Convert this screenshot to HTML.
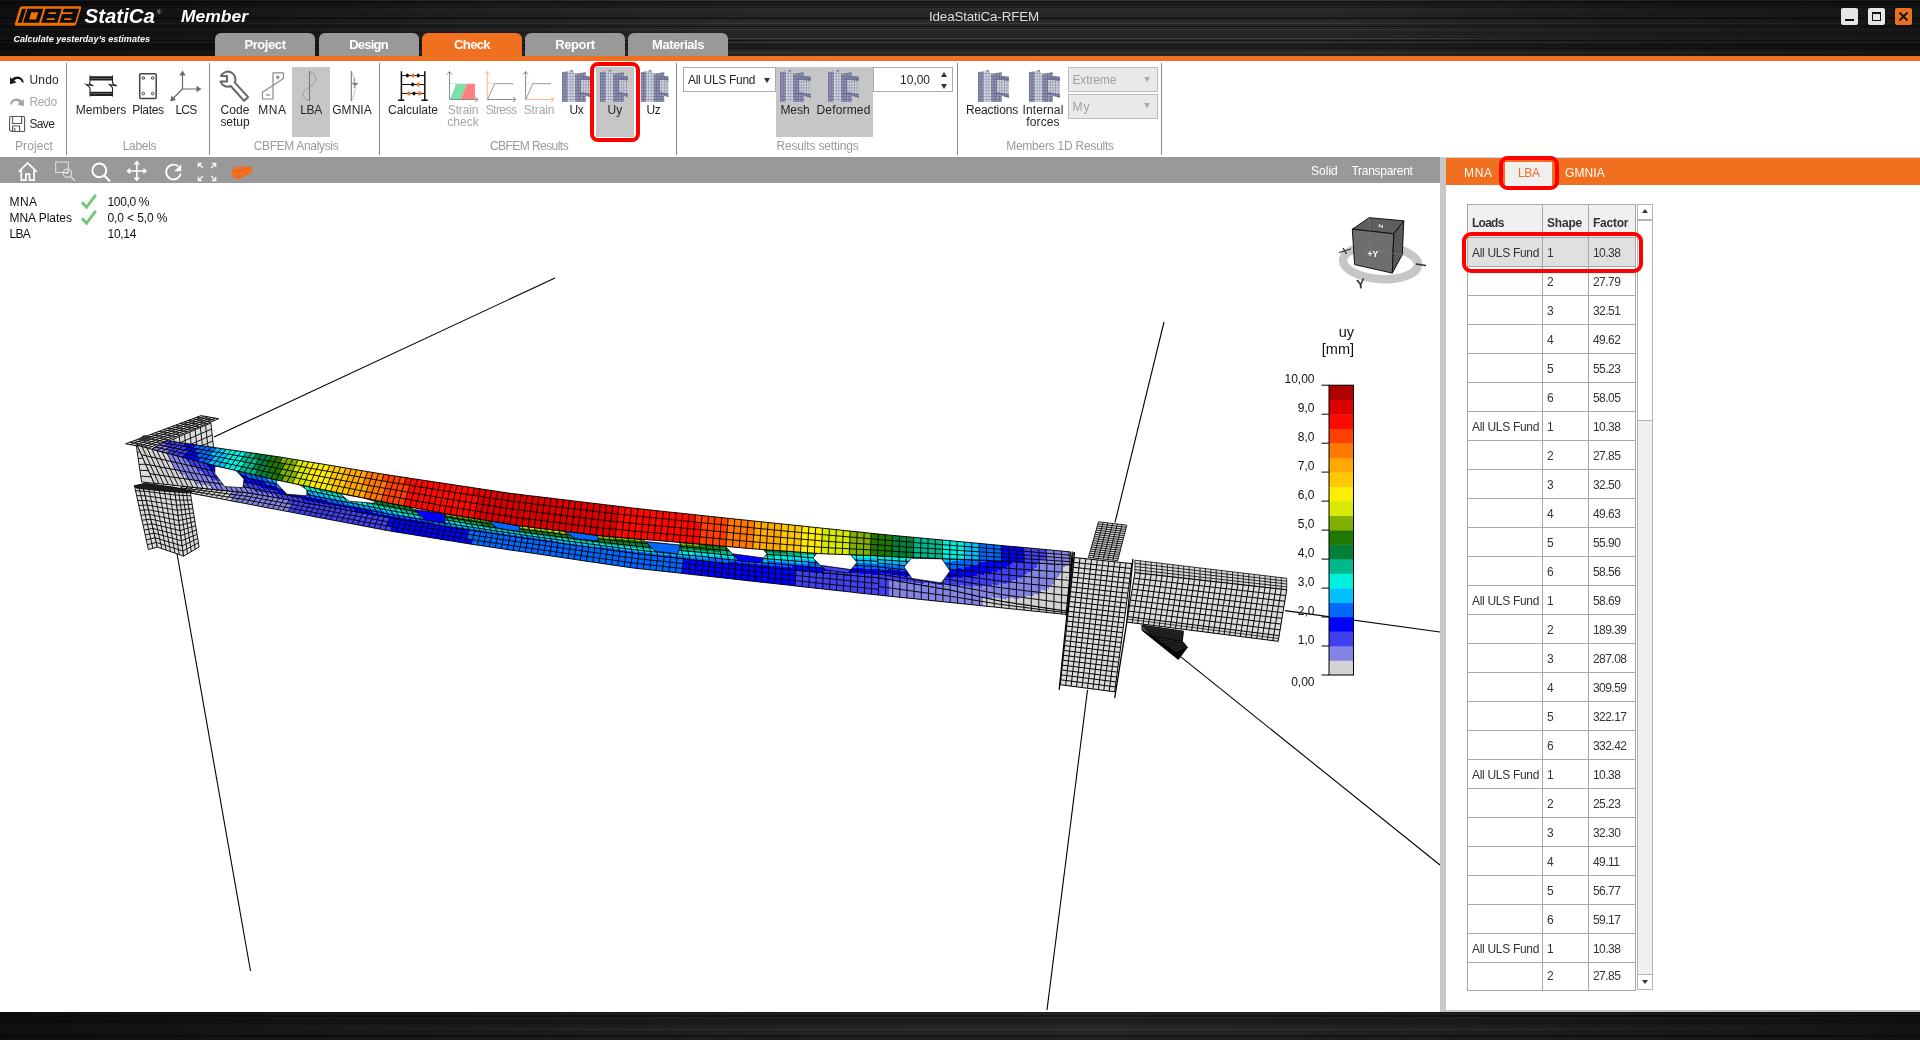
<!DOCTYPE html>
<html lang="en">
<head>
<meta charset="utf-8">
<title>IdeaStatiCa-RFEM</title>
<style>
*{box-sizing:border-box;margin:0;padding:0}
html,body{width:1920px;height:1040px;overflow:hidden;background:#fff}
body{position:relative;font-family:"Liberation Sans",sans-serif;font-size:12px;color:#262626;will-change:transform}
.abs{position:absolute}
#hdr{left:0;top:0;width:1920px;height:56px;background:#1c1c1c;overflow:hidden}
#hdr .tex{left:0;top:0;width:1920px;height:56px;
 background:
  linear-gradient(90deg,rgba(0,0,0,.62) 0,rgba(0,0,0,.5) 200px,rgba(0,0,0,.22) 480px,rgba(0,0,0,0) 800px,rgba(0,0,0,0) 1300px,rgba(0,0,0,.3) 1600px,rgba(0,0,0,.5) 1920px),
  linear-gradient(180deg,#313131 0px,#313131 1px,#1c1c1c 1px,#1c1c1c 2px,#101010 2px,#101010 3px,#272727 3px,#272727 4px,#171717 4px,#171717 5px,#1f1f1f 5px,#1f1f1f 6px,#262626 6px,#262626 7px,#1b1b1b 7px,#1b1b1b 8px,#2d2d2d 8px,#2d2d2d 9px,#2b2b2b 9px,#2b2b2b 10px,#272727 10px,#272727 11px,#2c2c2c 11px,#2c2c2c 12px,#282828 12px,#282828 13px,#262626 13px,#262626 14px,#2a2a2a 14px,#2a2a2a 15px,#262626 15px,#262626 16px,#292929 16px,#292929 17px,#1d1d1d 17px,#1d1d1d 18px,#121212 18px,#121212 19px,#282828 19px,#282828 20px,#2c2c2c 20px,#2c2c2c 21px,#262626 21px,#262626 22px,#2b2b2b 22px,#2b2b2b 23px,#383838 23px,#383838 24px,#272727 24px,#272727 25px,#202020 25px,#202020 26px,#1b1b1b 26px,#1b1b1b 27px,#2d2d2d 27px,#2d2d2d 28px,#1d1d1d 28px,#1d1d1d 29px,#3c3c3c 29px,#3c3c3c 30px,#252525 30px,#252525 31px,#2c2c2c 31px,#2c2c2c 32px,#222222 32px,#222222 33px,#2e2e2e 33px,#2e2e2e 34px,#1f1f1f 34px,#1f1f1f 35px,#303030 35px,#303030 36px,#222222 36px,#222222 37px,#282828 37px,#282828 38px,#383838 38px,#383838 39px,#2a2a2a 39px,#2a2a2a 40px,#161616 40px,#161616 41px,#2b2b2b 41px,#2b2b2b 42px,#2f2f2f 42px,#2f2f2f 43px,#2c2c2c 43px,#2c2c2c 44px,#111111 44px,#111111 45px,#202020 45px,#202020 46px,#202020 46px,#202020 47px,#1d1d1d 47px,#1d1d1d 48px,#181818 48px,#181818 49px,#1d1d1d 49px,#1d1d1d 50px,#2f2f2f 50px,#2f2f2f 51px,#222222 51px,#222222 52px,#353535 52px,#353535 53px,#2e2e2e 53px,#2e2e2e 54px,#202020 54px,#202020 55px,#2a2a2a 55px,#2a2a2a 56px)}
#oline{left:0;top:56px;width:1920px;height:5px;background:#f07020}
#ftr{left:0;top:1012px;width:1920px;height:28px;background:#161616;overflow:hidden}
#ftr .tex{left:0;top:0;width:1920px;height:28px;
 background:
  linear-gradient(90deg,rgba(0,0,0,.6) 0,rgba(0,0,0,.4) 300px,rgba(0,0,0,.1) 800px,rgba(0,0,0,0) 1100px,rgba(0,0,0,.2) 1500px,rgba(0,0,0,.5) 1920px),
  linear-gradient(180deg,#1b1b1b 0px,#1b1b1b 1px,#272727 1px,#272727 2px,#242424 2px,#242424 3px,#141414 3px,#141414 4px,#161616 4px,#161616 5px,#222222 5px,#222222 6px,#262626 6px,#262626 7px,#1c1c1c 7px,#1c1c1c 8px,#191919 8px,#191919 9px,#262626 9px,#262626 10px,#161616 10px,#161616 11px,#212121 11px,#212121 12px,#232323 12px,#232323 13px,#242424 13px,#242424 14px,#272727 14px,#272727 15px,#272727 15px,#272727 16px,#262626 16px,#262626 17px,#323232 17px,#323232 18px,#272727 18px,#272727 19px,#232323 19px,#232323 20px,#272727 20px,#272727 21px,#262626 21px,#262626 22px,#242424 22px,#242424 23px,#1b1b1b 23px,#1b1b1b 24px,#0f0f0f 24px,#0f0f0f 25px,#262626 25px,#262626 26px,#202020 26px,#202020 27px,#262626 27px,#262626 28px)}
.tab{top:33px;width:100px;height:23px;background:#999;border-radius:6px 6px 0 0;color:#fff;font-weight:bold;font-size:13px;text-align:center;line-height:23px}
.tab.on{background:#f07020}
.wbtn{top:8px;width:17px;height:17px;background:#e6e6e6;border-radius:2px}
#title{left:860px;top:7.6px;width:248px;text-align:center;font-size:13.4px;color:#dcdcdc;line-height:18px;letter-spacing:-.15px}
.sep{top:63px;width:1px;height:92px;background:#8a8a8a}
.lbl{text-align:center;line-height:12px;white-space:nowrap;transform:translateX(-50%)}
.glbl{top:139px;color:#9a9a9a;text-align:center;line-height:14px;white-space:nowrap;transform:translateX(-50%)}
.dis{color:#a6a6a6}
.hl{background:#c6c6c6}
.combo{height:25px;border:1px solid #ababab;background:#fff;line-height:24px;padding-left:4px;white-space:nowrap}
.combo.d{background:#e9e9e9;color:#a0a0a0;border-color:#bdbdbd}
.arr{width:0;height:0;border-left:3.5px solid transparent;border-right:3.5px solid transparent;border-top:5px solid #333}
#tbar{left:0;top:157px;width:1440px;height:26px;background:#999}
#split{left:1440px;top:157px;width:6px;height:855px;background:#c8c8c8}
#rtab{left:1446px;top:157px;width:474px;height:28px;background:#f07020;border-top:1px solid #cfd6dc}
#botline{left:1440px;top:1010px;width:480px;height:2px;background:#c8c8c8}
.red{border:4px solid #f00;border-radius:8px}
table{border-collapse:collapse}
#grid td{border:1px solid #a8a8a8;height:29px;font-size:12px;padding:1px 0 0 4px;color:#333;white-space:nowrap;letter-spacing:-.55px}
#grid td:first-child{letter-spacing:-.3px}
#grid tr.last td{height:27px;padding-top:0;vertical-align:top;line-height:27px}
#grid tr.h td{background:#f0f0f0;font-weight:bold;height:29px;padding-top:7px;color:#333;letter-spacing:0}
#grid tr.sp td{height:4px;padding:0;background:#f0f0f0;border-top:none;border-bottom:none}
#grid tr.sel td{background:#e0e0e0}
.info{font-size:12px;line-height:16px;white-space:nowrap;color:#111}
.leg{font-size:12px;color:#111;text-align:right;white-space:nowrap;line-height:14px}
</style>
</head>
<body>
<!--HEADER-->
<div id="hdr" class="abs"><div class="tex abs"></div></div>
<div id="oline" class="abs"></div>
<svg class="abs" style="left:0;top:0" width="260" height="56" viewBox="0 0 260 56">
 <g transform="translate(20.2,6.2) skewX(-17)">
  <rect x="0" y="0" width="61.5" height="19.5" rx="1.8" fill="#f07000"/>
  <g fill="#0b0b0b">
   <rect x="2.6" y="2.5" width="4" height="14.1" rx=".6"/>
   <path d="M8 2.5h15.9v14.1h-15.9z M12.9 6v7.3h7v-7.3z" fill-rule="evenodd"/>
   <path d="M26 2.5h16.3v14.1h-16.3z M30.5 6v1.9h7.5v-1.9z M30.5 12v1.7h8v-1.7z" fill-rule="evenodd"/>
   <path d="M44.3 2.5h15.5v14.1h-15.5v-8.7h10.2v-1.9h-10.2z M48 13.7h7v-1.7h-7z" fill-rule="evenodd"/>
  </g>
 </g>
 <text x="84.5" y="23.3" font-family="Liberation Sans, sans-serif" font-size="20.5" font-weight="bold" font-style="italic" fill="#fff" textLength="70.5" lengthAdjust="spacingAndGlyphs">StatiCa</text>
 <text x="157" y="13.5" font-family="Liberation Sans, sans-serif" font-size="6" fill="#ccc">®</text>
 <text x="181" y="22" font-family="Liberation Sans, sans-serif" font-size="17" font-weight="bold" font-style="italic" fill="#fff" textLength="67" lengthAdjust="spacingAndGlyphs">Member</text>
 <text x="13.5" y="42.3" font-family="Liberation Sans, sans-serif" font-size="9.4" font-weight="bold" font-style="italic" fill="#fff" textLength="136.5" lengthAdjust="spacingAndGlyphs">Calculate yesterday’s estimates</text>
</svg>
<div id="title" class="abs">IdeaStatiCa-RFEM</div>
<div class="abs wbtn" style="left:1841px"><div class="abs" style="left:4px;top:11px;width:9px;height:2px;background:#111"></div></div>
<div class="abs wbtn" style="left:1868px"><div class="abs" style="left:4px;top:4px;width:9px;height:9px;border:1px solid #111;border-top-width:2px"></div></div>
<div class="abs wbtn" style="left:1895px;background:#e8701f"><svg class="abs" style="left:0;top:0" width="17" height="17"><path d="M4.5 4.5l8 8M12.5 4.5l-8 8" stroke="#111" stroke-width="1.8"/></svg></div>

<div class="abs tab" style="letter-spacing:-0.41px;left:215px">Project</div>
<div class="abs tab" style="letter-spacing:-0.79px;left:318.5px">Design</div>
<div class="abs tab on" style="letter-spacing:-0.65px;left:422px">Check</div>
<div class="abs tab" style="letter-spacing:-0.37px;left:525px">Report</div>
<div class="abs tab" style="letter-spacing:-0.51px;left:628px">Materials</div>

<div class="abs hl" style="left:292px;top:67px;width:38px;height:70px"></div>
<div class="abs hl" style="left:596px;top:67px;width:38px;height:70px"></div>
<div class="abs hl" style="left:776px;top:67px;width:97px;height:70px"></div>
<div class="abs sep" style="left:66px"></div>
<div class="abs sep" style="left:209px"></div>
<div class="abs sep" style="left:379px"></div>
<div class="abs sep" style="left:676px"></div>
<div class="abs sep" style="left:957px"></div>
<div class="abs sep" style="left:1161px"></div>
<svg class="abs" style="left:0;top:61px" width="1170" height="96" viewBox="0 61 1170 96">
 <defs>
  <pattern id="gp" width="2.6" height="2.9" patternUnits="userSpaceOnUse"><path d="M0 0H2.6M0 0V2.9" stroke="#3c3e5c" stroke-width=".55" fill="none"/></pattern>
  <g id="joint">
   <polygon points="0,2.3 5.7,1.3 5.7,32 0,32" fill="#9093b3"/>
   <polygon points="5.7,1.3 8,0.7 10.7,0 10.7,2 13.3,3.5 13.3,32 5.7,32" fill="#d6d9e4"/>
   <polygon points="8,0.7 10.700,0 10.700,2.200" fill="#8487a8"/>
   <polygon points="13.3,3.9 19.5,3 23.700,2.100 23.700,6 19.500,8.500 19.500,32 13.300,32" fill="#8d90b0"/>
   <polygon points="19.5,25.5 23.700,25.800 23.700,32 19.500,32" fill="#8d90b0"/>
   <polygon points="14.3,8.6 24.200,6 31,6.800 31,11.200 19.500,9.900" fill="#8083a5"/>
   <polygon points="19.5,9.9 31,11.200 31,23.900 19.500,22.100" fill="#d4d7e2"/>
   <polygon points="14.3,23.7 19.500,22.100 31,23.900 31,27.900 23.700,25.800 19.500,25.500" fill="#8386a8"/>
   <rect x="0" y="0" width="31" height="32" fill="url(#gp)" clip-path="url(#jc)"/>
  </g>
  <clipPath id="jc"><path d="M0 2.3L5.7 1.3L10.7 0L13.3 3.500L23.700 2.100V6L31 6.800V27.900L23.700 25.800V32H0z"/></clipPath>
  <clipPath id="jc28"><rect x="0" y="0" width="28" height="32"/></clipPath>
 </defs>
 <!-- undo -->
 <path d="M10 84.2V77.2l2 1.6c2.3-2.2 5.5-3 8.3-1.6 2 1 3.3 3 3.5 5.4h-1.8c-.4-1.7-1.300-2.800-2.900-3.300-1.700-.6-3.500-.1-4.900 1.200l2.300 1.900z" fill="#1a1a1a"/>
 <!-- redo -->
 <path d="M23.8 106.200V99.200l-2 1.600c-2.300-2.200-5.500-3-8.300-1.600-2 1-3.300 3-3.500 5.400h1.800c.4-1.700 1.300-2.800 2.900-3.300 1.700-.6 3.500-.1 4.900 1.200l-2.300 1.900z" fill="#a4a4a4"/>
 <!-- save -->
 <g fill="none" stroke="#555" stroke-width="1.1">
  <path d="M9.600 117.500a1 1 0 0 1 1-1h13a1 1 0 0 1 1 1v13a1 1 0 0 1-1 1H11.600l-2-1.500z"/>
  <path d="M12.600 116.500v7h9v-7M12.600 131.500v-5.500h7v5.500M14.800 128v3.300"/>
 </g>
 <!-- members -->
 <g fill="none" stroke="#222">
  <path d="M90 77.3h22.5M90 79.5h22.5M90 92.8h22.5M90 95h22.5" stroke-width="1.9"/>
  <path d="M90 75.6v6l-.6 2.400 4 1.700-7.400-1.300 4 3.300v8.800M112.500 75.600v6l.6 2.400 3.700 1.900-7.400-1.400 3.100 3.200v8.800" stroke-width="1.100"/>
 </g>
 <!-- plates -->
 <g fill="none" stroke="#444">
  <rect x="139.700" y="73.700" width="16.500" height="24.800" rx="1" stroke-width="1.500"/>
  <g stroke-width="1"><circle cx="143.300" cy="78" r="1.300"/><circle cx="152.700" cy="78" r="1.300"/><circle cx="143.300" cy="93.600" r="1.300"/><circle cx="152.700" cy="93.600" r="1.300"/></g>
 </g>
 <!-- LCS -->
 <g stroke="#6a6a6a" stroke-width="1.200" fill="#6a6a6a">
  <path d="M182.500 89V74M182.500 89H197M182.500 89L173 98.500" fill="none"/>
  <path d="M182.500 70.500l3.200 5h-6.400zM201.500 89l-5 3.200v-6.400zM170.200 101.400l1.300-5.800 4.500 4.500z" stroke="none"/>
 </g>
 <!-- wrench -->
 <g fill="none" stroke="#666" stroke-width="2" stroke-linejoin="round">
  <path d="M221 76H227V81.5H220.500A7.500 7.500 0 0 0 230.700 86L244.100 100.800L248.100 97.200L234.700 82.400A7.500 7.500 0 1 0 221 76Z"/>
 </g>
 <!-- MNA -->
 <g fill="none" stroke="#8a8a8a" stroke-width="1.200" stroke-linejoin="round">
  <path d="M273 72.800h10.500v5.800l-21 13.600v6.800h10.500z"/><circle cx="277.800" cy="77.200" r="1.100" fill="#8a8a8a"/><path d="M266 95h4"/>
 </g>
 <!-- LBA -->
 <path d="M309.500 71.200V101" stroke="#777" stroke-width="1.100" fill="none"/>
 <path d="M309.500 71.200c4 2.500 6.500 5 6.500 8s-3 5.500-6.500 7.800-6.500 5-6.500 7.500 2.500 4.700 6.500 6.500" stroke="#888" stroke-width=".7" fill="none"/>
 <!-- GMNIA -->
 <path d="M351.300 71.200V101" stroke="#777" stroke-width="1.100" fill="none"/>
 <path d="M351.300 71.200c5.200 9 5.200 21 0 29.800" stroke="#888" stroke-width=".7" fill="none" stroke-dasharray="1.500 .8"/>
 <path d="M354.300 78v10M352.300 83.300l5.600.2-2.800 1.800z" stroke="#777" stroke-width=".8" fill="#777"/>
 <!-- calculate -->
 <g stroke="#111" fill="none">
  <path d="M401.400 71.200V100M424.800 71.200V100" stroke-width="1.500"/>
  <path d="M398 100.300h6.300M421.500 100.300h6.300" stroke-width="1.600"/>
  <path d="M401.400 75.600h23.400M401.400 84.500h23.400M401.400 93.400h23.400" stroke-width="1"/>
 </g>
 <g fill="#111"><ellipse cx="407.400" cy="75.600" rx="1.500" ry="2"/><ellipse cx="418.200" cy="75.600" rx="1.500" ry="2"/><ellipse cx="412.600" cy="84.500" rx="1.500" ry="2"/><ellipse cx="414" cy="93.400" rx="1.500" ry="2"/></g>
 <g fill="#f07020"><ellipse cx="413" cy="75.600" rx="1.500" ry="2.200"/><ellipse cx="418.200" cy="84.500" rx="1.500" ry="2.200"/><ellipse cx="408.800" cy="93.400" rx="1.500" ry="2.200"/><ellipse cx="419.400" cy="93.400" rx="1.500" ry="2.200"/></g>
 <!-- strain check -->
 <polygon points="450,99 456.200,83.700 467,83.700 460.900,99" fill="#7ce0aa"/>
 <polygon points="460.900,99 467,83.700 475,83.700 475,99" fill="#ff8080"/>
 <g stroke="#8c8c8c" stroke-width="1" fill="none">
  <path d="M449.500 99.500V71.500M447 74.500l2.500-3 2.500 3M449.500 99.500H478M475 97l3 2.500-3 2.500"/>
  <path d="M450 83.700h6" stroke-dasharray="1 1.500" stroke-width=".6"/>
 </g>
 <!-- stress -->
 <g stroke-width="1" fill="none">
  <path d="M487.300 99.500V71.500M484.800 74.500l2.500-3 2.500 3" stroke="#ffb58a"/>
  <path d="M487.300 99.500H516M513 97l3 2.500-3 2.500" stroke="#8c8c8c"/>
  <path d="M487.800 99l6.800-15.300h18.800" stroke="#8c8c8c" stroke-width=".9"/>
  <path d="M488 83.700h6" stroke="#aaa" stroke-dasharray="1 1.500" stroke-width=".6"/>
 </g>
 <!-- strain -->
 <g stroke-width="1" fill="none">
  <path d="M525.600 99.500V71.500M523.100 74.500l2.500-3 2.500 3" stroke="#8c8c8c"/>
  <path d="M525.600 99.500H554M551 97l3 2.500-3 2.500" stroke="#ffb58a"/>
  <path d="M526.100 99l6.600-15.300h18.200" stroke="#8c8c8c" stroke-width=".9"/>
  <path d="M526.300 83.700h6" stroke="#aaa" stroke-dasharray="1 1.500" stroke-width=".6"/>
 </g>
 <g transform="translate(562,70)" clip-path="url(#jc28)"><use href="#joint"/></g>
 <g transform="translate(600,70)" clip-path="url(#jc28)"><use href="#joint"/></g>
 <g transform="translate(640.5,70)" clip-path="url(#jc28)"><use href="#joint"/></g>
 <use href="#joint" x="780" y="70"/>
 <use href="#joint" x="828" y="70"/>
 <use href="#joint" x="978" y="70"/>
 <use href="#joint" x="1029" y="70"/>
</svg>
<div class="abs" style="letter-spacing:0.19px;left:29.500px;top:73px;line-height:14px">Undo</div>
<div class="abs dis" style="letter-spacing:-0.37px;left:29.500px;top:95px;line-height:14px">Redo</div>
<div class="abs" style="letter-spacing:-0.66px;left:29.500px;top:117px;line-height:14px">Save</div>
<div class="abs lbl" style="letter-spacing:0.10px;left:101px;top:104px">Members</div>
<div class="abs lbl" style="letter-spacing:-0.28px;left:148px;top:104px">Plates</div>
<div class="abs lbl" style="letter-spacing:-0.71px;left:186px;top:104px">LCS</div>
<div class="abs lbl" style="left:235px;top:104px"><span style="letter-spacing:0.13px;display:block">Code</span><span style="letter-spacing:-0.03px;display:block">setup</span></div>
<div class="abs lbl" style="letter-spacing:0.59px;left:272.500px;top:104px">MNA</div>
<div class="abs lbl" style="letter-spacing:-0.33px;left:311px;top:104px">LBA</div>
<div class="abs lbl" style="letter-spacing:0.07px;left:352px;top:104px">GMNIA</div>
<div class="abs lbl" style="letter-spacing:-0.01px;left:413px;top:104px">Calculate</div>
<div class="abs lbl dis" style="left:463px;top:104px"><span style="letter-spacing:-0.15px;display:block">Strain</span><span style="letter-spacing:0.07px;display:block">check</span></div>
<div class="abs lbl dis" style="letter-spacing:-0.55px;left:501px;top:104px">Stress</div>
<div class="abs lbl dis" style="letter-spacing:-0.11px;left:539px;top:104px">Strain</div>
<div class="abs lbl" style="letter-spacing:-0.24px;left:576.500px;top:104px">Ux</div>
<div class="abs lbl" style="letter-spacing:0.26px;left:615px;top:104px">Uy</div>
<div class="abs lbl" style="letter-spacing:-0.24px;left:653.500px;top:104px">Uz</div>
<div class="abs lbl" style="letter-spacing:-0.04px;left:795px;top:104px">Mesh</div>
<div class="abs lbl" style="letter-spacing:0.16px;left:843.500px;top:104px">Deformed</div>
<div class="abs lbl" style="letter-spacing:-0.13px;left:992px;top:104px">Reactions</div>
<div class="abs lbl" style="left:1043px;top:104px"><span style="letter-spacing:0.10px;display:block">Internal</span><span style="letter-spacing:0.12px;display:block">forces</span></div>
<div class="abs glbl" style="letter-spacing:0.08px;left:34px">Project</div>
<div class="abs glbl" style="letter-spacing:-0.28px;left:139.500px">Labels</div>
<div class="abs glbl" style="letter-spacing:-0.33px;left:296px">CBFEM Analysis</div>
<div class="abs glbl" style="letter-spacing:-0.55px;left:529px">CBFEM Results</div>
<div class="abs glbl" style="letter-spacing:-0.17px;left:817.500px">Results settings</div>
<div class="abs glbl" style="letter-spacing:-0.24px;left:1060px">Members 1D Results</div>
<div class="abs combo" style="letter-spacing:-0.29px;left:683px;top:67px;width:93px">All ULS Fund</div>
<div class="abs arr" style="left:763.500px;top:77.500px"></div>
<div class="abs combo" style="letter-spacing:-0.03px;left:873px;top:67px;width:80px;text-align:right;padding-right:22px">10,00</div>
<div class="abs arr" style="left:940.500px;top:84px"></div>
<div class="abs arr" style="left:940.500px;top:72px;transform:rotate(180deg)"></div>
<div class="abs combo d" style="letter-spacing:-0.14px;left:1067.500px;top:67px;width:90px">Extreme</div>
<div class="abs arr" style="left:1144px;top:77px;border-top-color:#aaa"></div>
<div class="abs combo d" style="letter-spacing:0.95px;left:1067.500px;top:93.500px;width:90px">My</div>
<div class="abs arr" style="left:1144px;top:103px;border-top-color:#aaa"></div>
<div class="abs red" style="left:590px;top:62.300px;width:50px;height:79.500px"></div>

<div id="tbar" class="abs"></div>
<svg class="abs" style="left:0;top:157px" width="260" height="26" viewBox="0 157 260 26">
 <g fill="none" stroke="#fff" stroke-width="1.900" stroke-linejoin="miter">
  <path d="M18.600 171.800L27.700 162.900L36.800 171.800M21.300 170v10.200h4.600v-6h3.600v6h4.600V170" stroke-width="1.700"/>
  <circle cx="99.300" cy="170.400" r="6.900"/><path d="M104.200 175.500l5.800 6" stroke-width="2.100"/>
  <path d="M136.800 162v18M127.800 171h18" stroke-width="1.500"/>
  <path d="M178.200 166.300A7.400 7.400 0 1 0 180.700 173.800" stroke-width="1.800"/>
 </g>
 <g fill="#fff">
  <path d="M136.800 160.600l3.300 3.800h-6.600zM136.800 181.400l3.300-3.800h-6.600zM126.400 171l3.800-3.300v6.600zM147.200 171l-3.800-3.300v6.600z"/>
  <path d="M181.200 164.300V171.300H174.200z"/>
 </g>
 <g fill="none" stroke="#e4e4e4" stroke-width="1">
  <rect x="55.700" y="162" width="12.600" height="10.500"/>
  <circle cx="67.500" cy="173.200" r="4.200" stroke-width="1.200"/><path d="M70.600 176.400l4.200 4.300" stroke-width="1.300"/><path d="M67.800 170.800v2.700h-2.500" stroke-width=".8"/>
 </g>
 <g fill="none" stroke="#f4f4f4" stroke-width="1.300">
  <path d="M198.300 163.500l4.500 4.500M198.300 167.300v-3.800h3.800M215.700 163.500l-4.500 4.500M215.700 167.300v-3.800h-3.800M198.300 180.500l4.500-4.500M198.300 176.700v3.800h3.800M215.700 180.500l-4.500-4.500M215.700 176.700v3.800h-3.800"/>
 </g>
 <path d="M232 170l4-3.200 16-0.300v6l-13.500 6.800-6.500-2.300z" fill="#f07020"/>
 <path d="M232 170l6.500 1.600 13.500-4.800M238.500 171.600v7.700" stroke="#d85f12" stroke-width=".6" fill="none"/>
</svg>
<div class="abs" style="letter-spacing:0.02px;left:1311px;top:164px;color:#fff;line-height:14px;white-space:nowrap">Solid</div>
<div class="abs" style="letter-spacing:-0.28px;left:1351.500px;top:164px;color:#fff;line-height:14px;white-space:nowrap">Transparent</div>

<svg class="abs" style="left:0;top:183px" width="1440" height="827" viewBox="0 183 1440 827">
<path d="M555 278L214 437" stroke="#000" stroke-width="1.1" fill="none"/>
<path d="M176 548L250.5 971" stroke="#000" stroke-width="1.1" fill="none"/>
<path d="M1164 322L1115 522.5" stroke="#000" stroke-width="1.1" fill="none"/>
<path d="M1087.5 690L1047 1010" stroke="#000" stroke-width="1.1" fill="none"/>
<path d="M1285 610.6L1440 632" stroke="#000" stroke-width="1.1" fill="none"/>
<path d="M1179 655.4L1440 865" stroke="#000" stroke-width="1.1" fill="none"/>
<polygon points="152.9,448.1 210.9,423 213.5,447 155.5,472" fill="#dcdcdc"/>
<path d="M152.9 448.1L155.5 472M158.2 445.8L160.8 469.7M163.4 443.5L166 467.5M168.7 441.3L171.3 465.2M174 439L176.6 462.9M179.3 436.7L181.9 460.6M184.5 434.4L187.1 458.4M189.8 432.1L192.4 456.1M195.1 429.8L197.7 453.8M200.4 427.6L203 451.5M205.6 425.3L208.2 449.3M210.9 423L213.5 447M152.9 448.1L210.9 423M153.6 454.1L211.6 429M154.2 460.1L212.2 435M154.8 466L212.8 441M155.5 472L213.5 447" fill="none" stroke="#000" stroke-width=".9"/>
<polygon points="125.6,443.8 201,415.6 218.7,418.7 148.6,448.1" fill="#dcdcdc"/>
<path d="M125.6 443.8L148.6 448.1M129.8 442.2L152.5 446.5M134 440.7L156.4 444.8M138.2 439.1L160.3 443.2M142.4 437.5L164.2 441.6M146.5 436L168.1 439.9M150.7 434.4L172 438.3M154.9 432.8L175.9 436.7M159.1 431.3L179.8 435M163.3 429.7L183.6 433.4M167.5 428.1L187.5 431.8M171.7 426.6L191.4 430.1M175.9 425L195.3 428.5M180.1 423.4L199.2 426.9M184.2 421.9L203.1 425.2M188.4 420.3L207 423.6M192.6 418.7L210.9 422M196.8 417.2L214.8 420.3M201 415.6L218.7 418.7M125.6 443.8L201 415.6M130.2 444.7L204.5 416.2M134.8 445.5L208.1 416.8M139.4 446.4L211.6 417.5M144 447.2L215.2 418.1M148.6 448.1L218.7 418.7" fill="none" stroke="#000" stroke-width=".9"/>
<path d="M143.800 435.100L151.600 437.300L146 441.500L137 440z" fill="#333"/>
<g id="beam">
<g>
<polygon points="183.2,486.3 188.1,486.8 193,487.3 198,487.8 202.9,488.3 207.9,488.8 212.9,489.4 217.9,489.9 222.9,490.4 228,490.9 233,491.4 230.6,494.2 225.5,493.5 220.5,492.9 215.4,492.2 210.4,491.5 205.4,490.9 200.4,490.2 195.4,489.6 190.4,489 185.5,488.5 180.5,488" fill="#d3d3d3"/>
<polygon points="233,491.4 238.1,491.9 243.1,492.3 248.2,492.8 253.3,493.6 258.5,494.5 263.6,495.4 268.7,496.3 273.8,497.2 278.9,498.1 284,499 289.2,499.9 287,503.5 281.9,502.6 276.7,501.6 271.6,500.7 266.5,499.8 261.4,498.8 256.2,497.9 251,497 245.9,496.1 240.8,495.5 235.7,494.8 230.6,494.2" fill="#8484e4"/>
<polygon points="289.2,499.9 294.3,500.8 299.5,501.7 304.7,502.7 309.9,503.6 315.1,504.5 320.3,505.4 325.6,506.3 330.8,507.3 336.1,508.2 341.4,509.1 346.7,510.1 352,511 357.4,512 362.7,512.9 368.1,513.9 373.5,514.8 378.9,515.8 384.3,516.7 389.7,517.7 388.2,521.8 382.7,520.8 377.2,519.8 371.8,518.8 366.4,517.9 361,516.9 355.6,515.9 350.2,514.9 344.9,514 339.6,513 334.2,512 328.9,511.1 323.6,510.1 318.4,509.2 313.1,508.2 307.9,507.3 302.6,506.3 297.4,505.4 292.2,504.4 287,503.5" fill="#4040f0"/>
<polygon points="389.7,517.7 395.2,518.6 400.6,519.6 406.1,520.4 411.7,521.3 417.4,522.1 423,523 428.7,523.8 434.4,524.7 440.2,525.5 445.9,526.4 451.7,527.2 457.4,528.1 463.2,529 469,529.9 467.8,534.3 462,533.4 456.2,532.5 450.4,531.6 444.6,530.7 438.8,529.8 433.1,529 427.3,528.1 421.6,527.2 415.9,526.3 410.3,525.4 404.6,524.6 399.1,523.7 393.6,522.8 388.2,521.8" fill="#0000ff"/>
<polygon points="469,529.9 474.8,530.7 480.7,531.6 486.6,532.5 492.4,533.4 498.3,534.2 504.2,535.1 510.2,536 516.1,536.9 522.1,537.8 528,538.6 534,539.4 540.1,540.3 546.1,541.1 552.1,541.9 558.2,542.8 564.3,543.6 570.4,544.4 576.5,545.3 582.7,546.1 588.8,547 595,547.8 601.2,548.7 607.4,549.5 613.6,550.4 619.9,551.2 626.2,552.1 632.5,553 638.8,553.8 645.1,554.6 651.5,555.3 657.8,555.9 664.2,556.6 670.6,557.3 677.1,558 683.5,558.7 683,563.6 676.5,562.9 670.1,562.2 663.6,561.5 657.2,560.8 650.8,560.1 644.5,559.4 638.1,558.7 631.8,557.9 625.5,557 619.2,556.1 612.9,555.2 606.7,554.3 600.4,553.4 594.2,552.6 588,551.7 581.8,550.8 575.7,550 569.6,549.1 563.4,548.2 557.3,547.4 551.2,546.5 545.2,545.7 539.1,544.8 533.1,544 527.1,543.1 521.1,542.3 515.1,541.4 509.1,540.5 503.2,539.6 497.3,538.7 491.3,537.8 485.4,537 479.5,536.1 473.7,535.2 467.8,534.3" fill="#0068ff"/>
<polygon points="683.5,558.7 690,559.5 696.5,560.2 703,560.9 709.5,561.6 716,562.3 722.6,563 729.2,563.7 735.8,564.4 742.4,565.2 749,565.9 755.7,566.5 762.3,567.1 769,567.8 775.7,568.4 782.5,569 789.2,569.6 796,570.2 795.7,575.5 788.9,574.8 782.2,574.1 775.4,573.5 768.7,572.8 762,572.1 755.3,571.5 748.6,570.8 742,570.1 735.3,569.4 728.7,568.6 722.1,567.9 715.6,567.2 709,566.5 702.5,565.8 695.9,565 689.4,564.3 683,563.6" fill="#0000ff"/>
<polygon points="796,570.2 802.8,570.9 809.6,571.5 816.4,572.1 823.3,572.8 830.2,573.4 837.1,574 844,574.7 850.9,575.3 857.9,576 864.8,576.6 871.8,577.2 878.8,577.9 878.7,583.6 871.7,582.9 864.7,582.3 857.7,581.6 850.7,580.9 843.8,580.2 836.8,579.5 829.9,578.8 823.1,578.2 816.2,577.5 809.3,576.8 802.5,576.1 795.7,575.5" fill="#4040f0"/>
<polygon points="180.5,488 185.5,488.5 190.4,489 195.4,489.6 200.4,490.2 205.4,490.9 210.4,491.5 215.4,492.2 220.5,492.9 225.5,493.5 230.6,494.2 228.2,497 223.1,496.2 218,495.4 212.9,494.6 207.9,493.7 202.9,492.9 197.8,492.1 192.8,491.3 187.8,490.8 182.8,490.2 177.9,489.7" fill="#d3d3d3"/>
<polygon points="230.6,494.2 235.7,494.8 240.8,495.5 245.9,496.1 251,497 256.2,497.9 261.4,498.8 266.5,499.8 271.6,500.7 276.7,501.6 281.9,502.6 287,503.5 292.2,504.4 290.2,508 284.9,507.1 279.8,506.1 274.6,505.1 269.4,504.2 264.3,503.2 259.1,502.3 253.9,501.3 248.8,500.3 243.6,499.4 238.4,498.6 233.3,497.8 228.2,497" fill="#8484e4"/>
<polygon points="292.2,504.4 297.4,505.4 302.6,506.3 307.9,507.3 313.1,508.2 318.4,509.2 323.6,510.1 328.9,511.1 334.2,512 339.6,513 344.9,514 350.2,514.9 355.6,515.9 361,516.9 366.4,517.9 371.8,518.8 377.2,519.8 382.7,520.8 388.2,521.8 386.6,525.9 381.1,524.9 375.6,523.9 370.2,522.9 364.7,521.9 359.3,520.9 353.9,519.9 348.5,518.9 343.1,517.9 337.7,516.9 332.4,515.9 327.1,514.9 321.7,513.9 316.4,512.9 311.1,511.9 305.9,511 300.6,510 295.4,509 290.2,508" fill="#4040f0"/>
<polygon points="388.2,521.8 393.6,522.8 399.1,523.7 404.6,524.6 410.3,525.4 415.9,526.3 421.6,527.2 427.3,528.1 433.1,529 438.8,529.8 444.6,530.7 450.4,531.6 456.2,532.5 462,533.4 467.8,534.3 466.6,538.8 460.8,537.9 454.9,536.9 449.1,536 443.3,535.1 437.5,534.2 431.7,533.3 426,532.3 420.2,531.4 414.5,530.5 408.8,529.6 403.2,528.7 397.6,527.9 392.1,526.9 386.6,525.9" fill="#0000ff"/>
<polygon points="467.8,534.3 473.7,535.2 479.5,536.1 485.4,537 491.3,537.8 497.3,538.7 503.2,539.6 509.1,540.5 515.1,541.4 521.1,542.3 527.1,543.1 533.1,544 539.1,544.8 545.2,545.7 551.2,546.5 557.3,547.4 563.4,548.2 569.6,549.1 575.7,550 581.8,550.8 588,551.7 594.2,552.6 600.4,553.4 606.7,554.3 612.9,555.2 619.2,556.1 625.5,557 631.8,557.9 638.1,558.7 644.5,559.4 650.8,560.1 657.2,560.8 663.6,561.5 670.1,562.2 676.5,562.9 683,563.6 682.4,568.5 675.9,567.8 669.5,567.1 663,566.3 656.6,565.6 650.2,564.9 643.8,564.2 637.5,563.5 631.1,562.8 624.8,561.9 618.5,560.9 612.2,560 605.9,559.1 599.7,558.2 593.4,557.3 587.2,556.4 581,555.5 574.9,554.7 568.7,553.8 562.6,552.9 556.5,552 550.4,551.1 544.3,550.2 538.2,549.4 532.2,548.5 526.1,547.6 520.1,546.8 514.1,545.9 508.1,545 502.1,544.1 496.2,543.2 490.2,542.3 484.3,541.5 478.4,540.6 472.5,539.7 466.6,538.8" fill="#0068ff"/>
<polygon points="683,563.6 689.4,564.3 695.9,565 702.5,565.8 709,566.5 715.6,567.2 722.1,567.9 728.7,568.6 735.3,569.4 742,570.1 748.6,570.8 755.3,571.5 762,572.1 768.7,572.8 775.4,573.5 782.2,574.1 788.9,574.8 795.7,575.5 795.4,580.7 788.6,580 781.9,579.3 775.1,578.6 768.4,577.9 761.6,577.1 754.9,576.4 748.2,575.7 741.6,575 734.9,574.3 728.3,573.5 721.7,572.8 715.1,572.1 708.5,571.4 702,570.6 695.4,569.9 688.9,569.2 682.4,568.5" fill="#0000ff"/>
<polygon points="795.7,575.5 802.5,576.1 809.3,576.8 816.2,577.5 823.1,578.2 829.9,578.8 836.8,579.5 843.8,580.2 850.7,580.9 857.7,581.6 864.7,582.3 871.7,582.9 878.7,583.6 878.6,589.3 871.5,588.6 864.5,587.9 857.5,587.2 850.5,586.5 843.6,585.7 836.6,585 829.7,584.3 822.8,583.6 815.9,582.8 809.1,582.1 802.2,581.4 795.4,580.7" fill="#4040f0"/>
<polygon points="177.9,489.7 182.8,490.2 187.8,490.8 192.8,491.3 197.8,492.1 202.9,492.9 207.9,493.7 212.9,494.6 218,495.4 223.1,496.2 228.2,497 233.3,497.8 230.9,500.8 225.8,499.8 220.7,498.8 215.6,497.9 210.5,496.9 205.4,495.9 200.3,495 195.3,494 190.2,493 185.2,492.5 180.2,491.9 175.2,491.4" fill="#d3d3d3"/>
<polygon points="233.3,497.8 238.4,498.6 243.6,499.4 248.8,500.3 253.9,501.3 259.1,502.3 264.3,503.2 269.4,504.2 274.6,505.1 279.8,506.1 284.9,507.1 290.2,508 288.1,511.6 282.8,510.6 277.6,509.6 272.4,508.7 267.2,507.7 262,506.7 256.9,505.7 251.7,504.7 246.5,503.7 241.3,502.7 236.1,501.8 230.9,500.8" fill="#8484e4"/>
<polygon points="290.2,508 295.4,509 300.6,510 305.9,511 311.1,511.9 316.4,512.9 321.7,513.9 327.1,514.9 332.4,515.9 337.7,516.9 343.1,517.9 348.5,518.9 353.9,519.9 359.3,520.9 364.7,521.9 370.2,522.9 375.6,523.9 381.1,524.9 386.6,525.9 392.1,526.9 390.6,531.1 385,530.1 379.5,529 374,528 368.5,526.9 363,525.9 357.6,524.8 352.1,523.8 346.7,522.8 341.3,521.7 335.9,520.7 330.5,519.7 325.2,518.7 319.8,517.7 314.5,516.7 309.2,515.6 303.9,514.6 298.6,513.6 293.3,512.6 288.1,511.6" fill="#4040f0"/>
<polygon points="392.1,526.9 397.6,527.9 403.2,528.7 408.8,529.6 414.5,530.5 420.2,531.4 426,532.3 431.7,533.3 437.5,534.2 443.3,535.1 449.1,536 454.9,536.9 460.8,537.9 466.6,538.8 472.5,539.7 471.3,544.2 465.4,543.2 459.5,542.3 453.7,541.3 447.8,540.4 442,539.4 436.2,538.5 430.4,537.6 424.6,536.6 418.8,535.7 413.1,534.7 407.4,533.8 401.7,532.9 396.1,532 390.6,531.1" fill="#0000ff"/>
<polygon points="472.5,539.7 478.4,540.6 484.3,541.5 490.2,542.3 496.2,543.2 502.1,544.1 508.1,545 514.1,545.9 520.1,546.8 526.1,547.6 532.2,548.5 538.2,549.4 544.3,550.2 550.4,551.1 556.5,552 562.6,552.9 568.7,553.8 574.9,554.7 581,555.5 587.2,556.4 593.4,557.3 599.7,558.2 605.9,559.1 612.2,560 618.5,560.9 624.8,561.9 631.1,562.8 637.5,563.5 643.8,564.2 650.2,564.9 656.6,565.6 663,566.3 669.5,567.1 675.9,567.8 682.4,568.5 681.9,573.3 675.4,572.6 668.9,571.9 662.4,571.2 656,570.5 649.6,569.8 643.2,569.1 636.8,568.4 630.4,567.6 624.1,566.7 617.8,565.8 611.4,564.9 605.2,563.9 598.9,563 592.6,562.1 586.4,561.2 580.2,560.3 574,559.3 567.9,558.4 561.7,557.5 555.6,556.6 549.5,555.7 543.4,554.8 537.3,553.9 531.2,553 525.2,552.1 519.1,551.2 513.1,550.4 507.1,549.5 501.1,548.6 495.1,547.7 489.1,546.8 483.2,545.9 477.3,545.1 471.3,544.2" fill="#0068ff"/>
<polygon points="682.4,568.5 688.9,569.2 695.4,569.9 702,570.6 708.5,571.4 715.1,572.1 721.7,572.8 728.3,573.5 734.9,574.3 741.6,575 748.2,575.7 754.9,576.4 761.6,577.1 768.4,577.9 775.1,578.6 781.9,579.3 788.6,580 795.4,580.7 795.1,585.9 788.3,585.1 781.5,584.4 774.8,583.6 768,582.9 761.3,582.2 754.6,581.4 747.9,580.7 741.2,579.9 734.5,579.2 727.9,578.4 721.2,577.7 714.6,577 708,576.2 701.5,575.5 694.9,574.8 688.4,574.1 681.9,573.3" fill="#0000ff"/>
<polygon points="795.4,580.7 802.2,581.4 809.1,582.1 815.9,582.8 822.8,583.6 829.7,584.3 836.6,585 843.6,585.7 850.5,586.5 857.5,587.2 864.5,587.9 871.5,588.6 878.6,589.3 878.4,595.1 871.4,594.3 864.4,593.6 857.3,592.8 850.4,592 843.4,591.2 836.4,590.5 829.5,589.7 822.6,588.9 815.7,588.2 808.8,587.4 802,586.7 795.1,585.9" fill="#4040f0"/>
</g>
<path d="M183.2 486.3L188.1 486.8L193 487.3L198 487.8L202.9 488.3L207.9 488.8L212.9 489.4L217.9 489.9L222.9 490.4L228 490.9L233 491.4L238.1 491.9L243.1 492.3L248.2 492.8L253.3 493.6L258.5 494.5L263.6 495.4L268.7 496.3L273.8 497.2L278.9 498.1L284 499L289.2 499.9L294.3 500.8L299.5 501.7L304.7 502.7L309.9 503.6L315.1 504.5L320.3 505.4L325.6 506.3L330.8 507.3L336.1 508.2L341.4 509.1L346.7 510.1L352 511L357.4 512L362.7 512.9L368.1 513.9L373.5 514.8L378.9 515.8L384.3 516.7L389.7 517.7L395.2 518.6L400.6 519.6L406.1 520.4L411.7 521.3L417.4 522.1L423 523L428.7 523.8L434.4 524.7L440.2 525.5L445.9 526.4L451.7 527.2L457.4 528.1L463.2 529L469 529.9L474.8 530.7L480.7 531.6L486.6 532.5L492.4 533.4L498.3 534.2L504.2 535.1L510.2 536L516.1 536.9L522.1 537.8L528 538.6L534 539.4L540.1 540.3L546.1 541.1L552.1 541.9L558.2 542.8L564.3 543.6L570.4 544.4L576.5 545.3L582.7 546.1L588.8 547L595 547.8L601.2 548.7L607.4 549.5L613.6 550.4L619.9 551.2L626.2 552.1L632.5 553L638.8 553.8L645.1 554.6L651.5 555.3L657.8 555.9L664.2 556.6L670.6 557.3L677.1 558L683.5 558.7L690 559.5L696.5 560.2L703 560.9L709.5 561.6L716 562.3L722.6 563L729.2 563.7L735.8 564.4L742.4 565.2L749 565.9L755.7 566.5L762.3 567.1L769 567.8L775.7 568.4L782.5 569L789.2 569.6L796 570.2L802.8 570.9L809.6 571.5L816.4 572.1L823.3 572.8L830.2 573.4L837.1 574L844 574.7L850.9 575.3L857.9 576L864.8 576.6L871.8 577.2L878.8 577.9M180.5 488L185.5 488.5L190.4 489L195.4 489.6L200.4 490.2L205.4 490.9L210.4 491.5L215.4 492.2L220.5 492.9L225.5 493.5L230.6 494.2L235.7 494.8L240.8 495.5L245.9 496.1L251 497L256.2 497.9L261.4 498.8L266.5 499.8L271.6 500.7L276.7 501.6L281.9 502.6L287 503.5L292.2 504.4L297.4 505.4L302.6 506.3L307.9 507.3L313.1 508.2L318.4 509.2L323.6 510.1L328.9 511.1L334.2 512L339.6 513L344.9 514L350.2 514.9L355.6 515.9L361 516.9L366.4 517.9L371.8 518.8L377.2 519.8L382.7 520.8L388.2 521.8L393.6 522.8L399.1 523.7L404.6 524.6L410.3 525.4L415.9 526.3L421.6 527.2L427.3 528.1L433.1 529L438.8 529.8L444.6 530.7L450.4 531.6L456.2 532.5L462 533.4L467.8 534.3L473.7 535.2L479.5 536.1L485.4 537L491.3 537.8L497.3 538.7L503.2 539.6L509.1 540.5L515.1 541.4L521.1 542.3L527.1 543.1L533.1 544L539.1 544.8L545.2 545.7L551.2 546.5L557.3 547.4L563.4 548.2L569.6 549.1L575.7 550L581.8 550.8L588 551.7L594.2 552.6L600.4 553.4L606.7 554.3L612.9 555.2L619.2 556.1L625.5 557L631.8 557.9L638.1 558.7L644.5 559.4L650.8 560.1L657.2 560.8L663.6 561.5L670.1 562.2L676.5 562.9L683 563.6L689.4 564.3L695.9 565L702.5 565.8L709 566.5L715.6 567.2L722.1 567.9L728.7 568.6L735.3 569.4L742 570.1L748.6 570.8L755.3 571.5L762 572.1L768.7 572.8L775.4 573.5L782.2 574.1L788.9 574.8L795.7 575.5L802.5 576.1L809.3 576.8L816.2 577.5L823.1 578.2L829.9 578.8L836.8 579.5L843.8 580.2L850.7 580.9L857.7 581.6L864.7 582.3L871.7 582.9L878.7 583.6M177.9 489.7L182.8 490.2L187.8 490.8L192.8 491.3L197.8 492.1L202.9 492.9L207.9 493.7L212.9 494.6L218 495.4L223.1 496.2L228.2 497L233.3 497.8L238.4 498.6L243.6 499.4L248.8 500.3L253.9 501.3L259.1 502.3L264.3 503.2L269.4 504.2L274.6 505.1L279.8 506.1L284.9 507.1L290.2 508L295.4 509L300.6 510L305.9 511L311.1 511.9L316.4 512.9L321.7 513.9L327.1 514.9L332.4 515.9L337.7 516.9L343.1 517.9L348.5 518.9L353.9 519.9L359.3 520.9L364.7 521.9L370.2 522.9L375.6 523.9L381.1 524.9L386.6 525.9L392.1 526.9L397.6 527.9L403.2 528.7L408.8 529.6L414.5 530.5L420.2 531.4L426 532.3L431.7 533.3L437.5 534.2L443.3 535.1L449.1 536L454.9 536.9L460.8 537.9L466.6 538.8L472.5 539.7L478.4 540.6L484.3 541.5L490.2 542.3L496.2 543.2L502.1 544.1L508.1 545L514.1 545.9L520.1 546.8L526.1 547.6L532.2 548.5L538.2 549.4L544.3 550.2L550.4 551.1L556.5 552L562.6 552.9L568.7 553.8L574.9 554.7L581 555.5L587.2 556.4L593.4 557.3L599.7 558.2L605.9 559.1L612.2 560L618.5 560.9L624.8 561.9L631.1 562.8L637.5 563.5L643.8 564.2L650.2 564.9L656.6 565.6L663 566.3L669.5 567.1L675.9 567.8L682.4 568.5L688.9 569.2L695.4 569.9L702 570.6L708.5 571.4L715.1 572.1L721.7 572.8L728.3 573.5L734.9 574.3L741.6 575L748.2 575.7L754.9 576.4L761.6 577.1L768.4 577.9L775.1 578.6L781.9 579.3L788.6 580L795.4 580.7L802.2 581.4L809.1 582.1L815.9 582.8L822.8 583.6L829.7 584.3L836.6 585L843.6 585.7L850.5 586.5L857.5 587.2L864.5 587.9L871.5 588.6L878.6 589.3M175.2 491.4L180.2 491.9L185.2 492.5L190.2 493L195.3 494L200.3 495L205.4 495.9L210.5 496.9L215.6 497.9L220.7 498.8L225.8 499.8L230.9 500.8L236.1 501.8L241.3 502.7L246.5 503.7L251.7 504.7L256.9 505.7L262 506.7L267.2 507.7L272.4 508.7L277.6 509.6L282.8 510.6L288.1 511.6L293.3 512.6L298.6 513.6L303.9 514.6L309.2 515.6L314.5 516.7L319.8 517.7L325.2 518.7L330.5 519.7L335.9 520.7L341.3 521.7L346.7 522.8L352.1 523.8L357.6 524.8L363 525.9L368.5 526.9L374 528L379.5 529L385 530.1L390.6 531.1L396.1 532L401.7 532.9L407.4 533.8L413.1 534.7L418.8 535.7L424.6 536.6L430.4 537.6L436.2 538.5L442 539.4L447.8 540.4L453.7 541.3L459.5 542.3L465.4 543.2L471.3 544.2L477.3 545.1L483.2 545.9L489.1 546.8L495.1 547.7L501.1 548.6L507.1 549.5L513.1 550.4L519.1 551.2L525.2 552.1L531.2 553L537.3 553.9L543.4 554.8L549.5 555.7L555.6 556.6L561.7 557.5L567.9 558.4L574 559.3L580.2 560.3L586.4 561.2L592.6 562.1L598.9 563L605.2 563.9L611.4 564.9L617.8 565.8L624.1 566.7L630.4 567.6L636.8 568.4L643.2 569.1L649.6 569.8L656 570.5L662.4 571.2L668.9 571.9L675.4 572.6L681.9 573.3L688.4 574.1L694.9 574.8L701.5 575.5L708 576.2L714.6 577L721.2 577.7L727.9 578.4L734.5 579.2L741.2 579.9L747.9 580.7L754.6 581.4L761.3 582.2L768 582.9L774.8 583.6L781.5 584.4L788.3 585.1L795.1 585.9L802 586.7L808.8 587.4L815.7 588.2L822.6 588.9L829.5 589.7L836.4 590.5L843.4 591.2L850.4 592L857.3 592.8L864.4 593.6L871.4 594.3L878.4 595.1M183.2 486.3L175.2 491.4M188.1 486.8L180.2 491.9M193 487.3L185.2 492.5M198 487.8L190.2 493M202.9 488.3L195.3 494M207.9 488.8L200.3 495M212.9 489.4L205.4 495.9M217.9 489.9L210.5 496.9M222.9 490.4L215.6 497.9M228 490.9L220.7 498.8M233 491.4L225.8 499.8M238.1 491.9L230.9 500.8M243.1 492.3L236.1 501.8M248.2 492.8L241.3 502.7M253.3 493.6L246.5 503.7M258.5 494.5L251.7 504.7M263.6 495.4L256.9 505.7M268.7 496.3L262 506.7M273.8 497.2L267.2 507.7M278.9 498.1L272.4 508.7M284 499L277.6 509.6M289.2 499.9L282.8 510.6M294.3 500.8L288.1 511.6M299.5 501.7L293.3 512.6M304.7 502.7L298.6 513.6M309.9 503.6L303.9 514.6M315.1 504.5L309.2 515.6M320.3 505.4L314.5 516.7M325.6 506.3L319.8 517.7M330.8 507.3L325.2 518.7M336.1 508.2L330.5 519.7M341.4 509.1L335.9 520.7M346.7 510.1L341.3 521.7M352 511L346.7 522.8M357.4 512L352.1 523.8M362.7 512.9L357.6 524.8M368.1 513.9L363 525.9M373.5 514.8L368.5 526.9M378.9 515.8L374 528M384.3 516.7L379.5 529M389.7 517.7L385 530.1M395.2 518.6L390.6 531.1M400.6 519.6L396.1 532M406.1 520.4L401.7 532.9M411.7 521.3L407.4 533.8M417.4 522.1L413.1 534.7M423 523L418.8 535.7M428.7 523.8L424.6 536.6M434.4 524.7L430.4 537.6M440.2 525.5L436.2 538.5M445.9 526.4L442 539.4M451.7 527.2L447.8 540.4M457.4 528.1L453.7 541.3M463.2 529L459.5 542.3M469 529.9L465.4 543.2M474.8 530.7L471.3 544.2M480.7 531.6L477.3 545.1M486.6 532.5L483.2 545.9M492.4 533.4L489.1 546.8M498.3 534.2L495.1 547.7M504.2 535.1L501.1 548.6M510.2 536L507.1 549.5M516.1 536.9L513.1 550.4M522.1 537.8L519.1 551.2M528 538.6L525.2 552.1M534 539.4L531.2 553M540.1 540.3L537.3 553.9M546.1 541.1L543.4 554.8M552.1 541.9L549.5 555.7M558.2 542.8L555.6 556.6M564.3 543.6L561.7 557.5M570.4 544.4L567.9 558.4M576.5 545.3L574 559.3M582.7 546.1L580.2 560.3M588.8 547L586.4 561.2M595 547.8L592.6 562.1M601.2 548.7L598.9 563M607.4 549.5L605.2 563.9M613.6 550.4L611.4 564.9M619.9 551.2L617.8 565.8M626.2 552.1L624.1 566.7M632.5 553L630.4 567.6M638.8 553.8L636.8 568.4M645.1 554.6L643.2 569.1M651.5 555.3L649.6 569.8M657.8 555.9L656 570.5M664.2 556.6L662.4 571.2M670.6 557.3L668.9 571.9M677.1 558L675.4 572.6M683.5 558.7L681.9 573.3M690 559.5L688.4 574.1M696.5 560.2L694.9 574.8M703 560.9L701.5 575.5M709.5 561.6L708 576.2M716 562.3L714.6 577M722.6 563L721.2 577.7M729.2 563.7L727.9 578.4M735.8 564.4L734.5 579.2M742.4 565.2L741.2 579.9M749 565.9L747.9 580.7M755.7 566.5L754.6 581.4M762.3 567.1L761.3 582.2M769 567.8L768 582.9M775.7 568.4L774.8 583.6M782.5 569L781.5 584.4M789.2 569.6L788.3 585.1M796 570.2L795.1 585.9M802.8 570.9L802 586.7M809.6 571.5L808.8 587.4M816.4 572.1L815.7 588.2M823.3 572.8L822.6 588.9M830.2 573.4L829.5 589.7M837.1 574L836.4 590.5M844 574.7L843.4 591.2M850.9 575.3L850.4 592M857.9 576L857.3 592.8M864.8 576.6L864.4 593.6M871.8 577.2L871.4 594.3M878.8 577.9L878.4 595.1" fill="none" stroke="#000" stroke-width=".95"/>
<polygon points="878.8,577.9 885.9,579 892.9,580.2 900,581.4 907.1,582.6 914.2,583.9 921.4,585.1 928.6,586.3 935.8,587.6 943,588.8 950.2,590 957.5,591.6 964.8,593.2 972,594.9 979.4,596.5 986.7,598.1 994.1,599.7 1001.5,601.2 1008.9,602.3 1016.3,603.5 1023.7,604.6 1031.2,605.7 1038.7,606.9 1046.2,608 1053.8,609.1 1061.3,610.3 1068.9,611 1070.5,611 1071.1,614.4 1069.4,614.4 1061.8,614 1054.2,613.2 1046.7,612.4 1039.1,611.6 1031.6,610.9 1024.1,610.1 1016.6,609.3 1009.1,608.6 1001.7,607.8 994.3,607 986.9,606.3 979.5,605.5 972.1,604.7 964.8,604 957.5,603.2 950.2,602.5 942.9,601.7 935.7,601 928.5,600.2 921.2,599.5 914,598.7 906.9,598 899.7,597.3 892.6,596.5 885.5,595.8 878.4,595.1" fill="#3a3af0"/>
<g shape-rendering="crispEdges">
<polygon points="878.8,577.9 882.4,578.5 885.9,579 889.4,579.6 889.3,583.8 885.8,583.2 882.3,582.7 878.7,582.2" fill="#4040f0"/>
<polygon points="889.4,579.6 892.9,580.2 900,581.4 907.1,582.6 914.2,583.9 921.4,585.1 928.6,586.3 935.8,587.6 943,588.8 950.2,590 957.5,591.6 964.8,593.2 972,594.9 979.4,596.5 983,597.3 983.1,599.4 979.4,598.7 972.1,597.3 964.8,595.9 957.5,594.5 950.2,593.2 943,592 935.7,590.9 928.5,589.8 921.4,588.7 914.2,587.6 907.1,586.5 899.9,585.4 892.9,584.3 889.3,583.8" fill="#8484e4"/>
<polygon points="983,597.3 986.7,598.1 994.1,599.7 1001.5,601.2 1008.9,602.3 1016.3,603.5 1023.7,604.6 1031.2,605.7 1038.7,606.9 1046.2,608 1053.8,609.1 1061.3,610.3 1068.9,611 1070.5,611 1070.6,611.9 1069,611.9 1061.5,611.2 1053.9,610.2 1046.3,609.1 1038.8,608.1 1031.3,607 1023.8,606 1016.4,604.9 1008.9,603.9 1001.5,602.9 994.1,601.5 986.8,600.1 983.1,599.4" fill="#d3d3d3"/>
<polygon points="878.7,582.2 882.3,582.7 885.8,583.2 889.3,583.8 889.2,587.9 885.7,587.4 882.2,586.9 878.6,586.5" fill="#4040f0"/>
<polygon points="889.3,583.8 892.9,584.3 899.9,585.4 907.1,586.5 914.2,587.6 921.4,588.7 928.5,589.8 935.7,590.9 943,592 950.2,593.2 957.5,594.5 964.8,595.9 972.1,597.3 979.4,598.7 983.1,599.4 983.1,601.6 979.4,601 972.1,599.8 964.8,598.6 957.5,597.4 950.2,596.3 943,595.3 935.7,594.3 928.5,593.3 921.3,592.3 914.1,591.3 907,590.3 899.9,589.3 892.8,588.4 889.2,587.9" fill="#8484e4"/>
<polygon points="983.1,599.4 986.8,600.1 994.1,601.5 1001.5,602.9 1008.9,603.9 1016.4,604.9 1023.8,606 1031.3,607 1038.8,608.1 1046.3,609.1 1053.9,610.2 1061.5,611.2 1069,611.9 1070.6,611.9 1070.8,612.7 1069.2,612.7 1061.6,612.1 1054,611.2 1046.4,610.2 1038.9,609.3 1031.4,608.3 1023.9,607.3 1016.4,606.4 1009,605.4 1001.6,604.5 994.2,603.4 986.8,602.2 983.1,601.6" fill="#d3d3d3"/>
<polygon points="878.6,586.5 882.2,586.9 885.7,587.4 889.2,587.9 889.2,592 885.6,591.6 882.1,591.2 878.5,590.8" fill="#4040f0"/>
<polygon points="889.2,587.9 892.8,588.4 899.9,589.3 907,590.3 914.1,591.3 921.3,592.3 928.5,593.3 935.7,594.3 943,595.3 950.2,596.3 957.5,597.4 964.8,598.6 972.1,599.8 979.4,601 983.1,601.6 983.2,603.7 979.5,603.2 972.1,602.3 964.8,601.3 957.5,600.3 950.2,599.4 942.9,598.5 935.7,597.6 928.5,596.8 921.3,595.9 914.1,595 906.9,594.2 899.8,593.3 892.7,592.5 889.2,592" fill="#8484e4"/>
<polygon points="983.1,601.6 986.8,602.2 994.2,603.4 1001.6,604.5 1009,605.4 1016.4,606.4 1023.9,607.3 1031.4,608.3 1038.9,609.3 1046.4,610.2 1054,611.2 1061.6,612.1 1069.2,612.7 1070.8,612.7 1070.9,613.5 1069.3,613.5 1061.7,613.1 1054.1,612.2 1046.6,611.3 1039,610.5 1031.5,609.6 1024,608.7 1016.5,607.9 1009.1,607 1001.6,606.1 994.2,605.2 986.8,604.2 983.2,603.7" fill="#d3d3d3"/>
<polygon points="878.5,590.8 882.1,591.2 885.6,591.6 889.2,592 889.1,596.2 885.5,595.8 882,595.4 878.4,595.1" fill="#4040f0"/>
<polygon points="889.2,592 892.7,592.5 899.8,593.3 906.9,594.2 914.1,595 921.3,595.9 928.5,596.8 935.7,597.6 942.9,598.5 950.2,599.4 957.5,600.3 964.8,601.3 972.1,602.3 979.5,603.2 983.2,603.7 983.2,605.9 979.5,605.5 972.1,604.7 964.8,604 957.5,603.2 950.2,602.5 942.9,601.7 935.7,601 928.5,600.2 921.2,599.5 914,598.7 906.9,598 899.7,597.3 892.6,596.5 889.1,596.2" fill="#8484e4"/>
<polygon points="983.2,603.7 986.8,604.2 994.2,605.2 1001.6,606.1 1009.1,607 1016.5,607.9 1024,608.7 1031.5,609.6 1039,610.5 1046.6,611.3 1054.1,612.2 1061.7,613.1 1069.3,613.5 1070.9,613.5 1071.1,614.4 1069.4,614.4 1061.8,614 1054.2,613.2 1046.7,612.4 1039.1,611.6 1031.6,610.9 1024.1,610.1 1016.6,609.3 1009.1,608.6 1001.7,607.8 994.3,607 986.9,606.3 983.2,605.9" fill="#d3d3d3"/>
</g>
<path d="M878.8 577.9L885.9 579L892.9 580.2L900 581.4L907.1 582.6L914.2 583.9L921.4 585.1L928.6 586.3L935.8 587.6L943 588.8L950.2 590L957.5 591.6L964.8 593.2L972 594.9L979.4 596.5L986.7 598.1L994.1 599.7L1001.5 601.2L1008.9 602.3L1016.3 603.5L1023.7 604.6L1031.2 605.7L1038.7 606.9L1046.2 608L1053.8 609.1L1061.3 610.3L1068.9 611L1070.5 611M878.6 586.5L885.7 587.4L892.8 588.4L899.9 589.3L907 590.3L914.1 591.3L921.3 592.3L928.5 593.3L935.7 594.3L943 595.3L950.2 596.3L957.5 597.4L964.8 598.6L972.1 599.8L979.4 601L986.8 602.2L994.2 603.4L1001.6 604.5L1009 605.4L1016.4 606.4L1023.9 607.3L1031.4 608.3L1038.9 609.3L1046.4 610.2L1054 611.2L1061.6 612.1L1069.2 612.7L1070.8 612.7M878.4 595.1L885.5 595.8L892.6 596.5L899.7 597.3L906.9 598L914 598.7L921.2 599.5L928.5 600.2L935.7 601L942.9 601.7L950.2 602.5L957.5 603.2L964.8 604L972.1 604.7L979.5 605.5L986.9 606.3L994.3 607L1001.7 607.8L1009.1 608.6L1016.6 609.3L1024.1 610.1L1031.6 610.9L1039.1 611.6L1046.7 612.4L1054.2 613.2L1061.8 614L1069.4 614.4L1071.1 614.4M878.8 577.9L878.4 595.1M885.9 579L885.5 595.8M892.9 580.2L892.6 596.5M900 581.4L899.7 597.3M907.1 582.6L906.9 598M914.2 583.9L914 598.7M921.4 585.1L921.2 599.5M928.6 586.3L928.5 600.2M935.8 587.6L935.7 601M943 588.8L942.9 601.7M950.2 590L950.2 602.5M957.5 591.6L957.5 603.2M964.8 593.2L964.8 604M972 594.9L972.1 604.7M979.4 596.5L979.5 605.5M986.7 598.1L986.9 606.3M994.1 599.7L994.3 607M1001.5 601.2L1001.7 607.8M1008.9 602.3L1009.1 608.6M1016.3 603.5L1016.6 609.3M1023.7 604.6L1024.1 610.1M1031.2 605.7L1031.6 610.9M1038.7 606.9L1039.1 611.6M1046.2 608L1046.7 612.4M1053.8 609.1L1054.2 613.2M1061.3 610.3L1061.8 614M1068.9 611L1069.4 614.4M1070.5 611L1071.1 614.4" fill="none" stroke="#000" stroke-width=".95"/>
<polygon points="137,445.2 142,446.5 146.9,447.9 151.9,449.2 156.9,450.5 162,451.8 167,453.1 172,454.4 177.1,455.8 182.2,457.1 187.3,458.4 192.4,459.7 197.5,461.1 202.7,462.4 207.8,463.8 213,465.1 218.2,466.4 223.4,467.6 228.6,468.8 233.8,470 239,471.2 244.3,472.5 249.6,473.7 254.9,474.9 260.2,476.2 265.5,477.4 270.8,478.6 276.2,479.9 281.6,481 287,482.1 292.4,483.2 297.8,484.4 303.2,485.5 308.7,486.6 314.1,487.8 319.6,488.9 325.1,490.1 330.6,491.2 336.1,492.4 341.7,493.5 347.2,494.6 352.8,495.8 358.4,496.9 364,498 369.7,499.1 375.3,500.3 381,501.4 386.6,502.5 392.3,503.6 398,504.7 403.8,505.8 409.5,506.9 415.3,508 421,509.1 426.8,510.2 432.6,511.3 438.5,512.4 444.3,513.5 450.2,514.4 456.1,515.4 462,516.4 467.9,517.3 473.8,518.3 479.7,519.3 485.7,520.3 491.7,521.2 497.7,522.2 503.7,523.2 509.7,524.2 515.8,525.2 521.9,526.1 528,526.8 534.1,527.6 540.2,528.3 546.3,529.1 552.5,529.9 558.7,530.6 564.9,531.4 571.1,532.1 577.3,532.9 583.6,533.7 589.8,534.5 596.1,535.2 602.4,535.8 608.8,536.4 615.1,537 621.5,537.5 627.8,538.1 634.2,538.6 640.7,539.2 647.1,539.7 653.6,540.2 660,540.7 666.5,541.3 673,541.8 679.6,542.3 686.1,542.9 692.7,543.4 699.3,544 705.9,544.6 712.5,545.2 719.2,545.8 725.8,546.4 732.5,547 739.2,547.6 745.9,548.2 752.7,548.8 759.5,549.3 766.2,549.8 773,550.3 779.9,550.7 786.7,551.2 793.6,551.7 800.5,552.2 807.4,552.7 814.3,553.2 821.2,553.7 828.2,554 835.2,554.2 842.2,554.5 849.2,554.7 856.3,554.9 863.3,555.2 870.4,555.4 877.5,555.8 878.8,577.9 871.8,577.2 864.8,576.6 857.9,576 850.9,575.3 844,574.7 837.1,574 830.2,573.4 823.3,572.8 816.4,572.1 809.6,571.5 802.8,570.9 796,570.2 789.2,569.6 782.5,569 775.7,568.4 769,567.8 762.3,567.1 755.7,566.5 749,565.9 742.4,565.2 735.8,564.4 729.2,563.7 722.6,563 716,562.3 709.5,561.6 703,560.9 696.5,560.2 690,559.5 683.5,558.7 677.1,558 670.6,557.3 664.2,556.6 657.8,555.9 651.5,555.3 645.1,554.6 638.8,553.8 632.5,553 626.2,552.1 619.9,551.2 613.6,550.4 607.4,549.5 601.2,548.7 595,547.8 588.8,547 582.7,546.1 576.5,545.3 570.4,544.4 564.3,543.6 558.2,542.8 552.1,541.9 546.1,541.1 540.1,540.3 534,539.4 528,538.6 522.1,537.8 516.1,536.9 510.2,536 504.2,535.1 498.3,534.2 492.4,533.4 486.6,532.5 480.7,531.6 474.8,530.7 469,529.9 463.2,529 457.4,528.1 451.7,527.2 445.9,526.4 440.2,525.5 434.4,524.7 428.7,523.8 423,523 417.4,522.1 411.7,521.3 406.1,520.4 400.6,519.6 395.2,518.6 389.7,517.7 384.3,516.7 378.9,515.8 373.5,514.8 368.1,513.9 362.7,512.9 357.4,512 352,511 346.7,510.1 341.4,509.1 336.1,508.2 330.8,507.3 325.6,506.3 320.3,505.4 315.1,504.5 309.9,503.6 304.7,502.7 299.5,501.7 294.3,500.8 289.2,499.9 284,499 278.9,498.1 273.8,497.2 268.7,496.3 263.6,495.4 258.5,494.5 253.3,493.6 248.2,492.8 243.1,492.3 238.1,491.9 233,491.4 228,490.9 222.9,490.4 217.9,489.9 212.9,489.4 207.9,488.8 202.9,488.3 198,487.8 193,487.3 188.1,486.8 183.2,486.3 178.3,485.8 173.4,485.3 168.5,484.7 163.7,484.2 158.8,483.7 154,483.2" fill="#3a3af0"/>
<g shape-rendering="crispEdges">
<polygon points="137,445.2 139.5,445.9 144.5,447.2 149.4,448.5 154.4,449.8 159.4,451.1 164.5,452.4 167,453.1 169,457.3 166.5,456.6 161.5,455.4 156.5,454.2 151.5,453 146.6,451.8 141.6,450.6 139.1,450" fill="#d3d3d3"/>
<polygon points="167,453.1 169.5,453.8 174.6,455.1 179.6,456.4 184.7,457.7 186.7,461.5 181.6,460.3 176.6,459.1 171.5,457.9 169,457.3" fill="#8484e4"/>
<polygon points="184.7,457.7 187.3,458.4 192.4,459.7 197.5,461.1 202.7,462.4 205.2,463.1 207.1,466.5 204.6,465.9 199.4,464.6 194.3,463.4 189.2,462.2 186.7,461.5" fill="#4040f0"/>
<polygon points="205.2,463.1 207.8,463.8 213,465.1 218.2,466.4 223.4,467.6 228.6,468.8 231.2,469.4 233,472.3 230.4,471.7 225.2,470.6 220,469.5 214.8,468.4 209.7,467.1 207.1,466.5" fill="#0000ff"/>
<polygon points="231.2,469.4 233.8,470 239,471.2 244.3,472.5 249.6,473.7 254.9,474.9 260.2,476.2 265.5,477.4 267.2,480 261.9,478.8 256.6,477.6 251.3,476.4 246.1,475.2 240.8,474 235.6,472.9 233,472.3" fill="#0068ff"/>
<polygon points="265.5,477.4 268.2,478 273.5,479.2 278.9,480.4 284.3,481.5 289.7,482.7 291.2,485.1 285.8,484 280.5,482.9 275.2,481.8 269.8,480.6 267.2,480" fill="#00c0ff"/>
<polygon points="289.7,482.7 292.4,483.2 297.8,484.4 303.2,485.5 308.7,486.6 314.1,487.8 316.9,488.3 318.3,490.6 315.5,490.1 310.1,489 304.7,487.9 299.3,486.8 293.9,485.7 291.2,485.1" fill="#00f0e0"/>
<polygon points="316.9,488.3 319.6,488.9 325.1,490.1 330.6,491.2 336.1,492.4 341.7,493.5 347.2,494.6 350,495.2 351.3,497.4 348.5,496.8 343,495.7 337.5,494.6 332,493.5 326.5,492.3 321,491.2 318.3,490.6" fill="#00b88c"/>
<polygon points="350,495.2 352.8,495.8 358.4,496.9 364,498 369.7,499.1 375.3,500.3 381,501.4 382,503.4 376.4,502.3 370.8,501.2 365.2,500.1 359.6,499 354.1,497.9 351.3,497.4" fill="#008038"/>
<polygon points="381,501.4 383.8,502 389.5,503.1 395.2,504.2 400.9,505.3 406.6,506.3 412.4,507.4 418.2,508.5 423.9,509.6 429.7,510.7 430.7,512.5 424.9,511.4 419.1,510.4 413.4,509.3 407.6,508.3 401.9,507.2 396.2,506.2 390.5,505.1 384.9,504 382,503.4" fill="#207800"/>
<polygon points="429.7,510.7 432.6,511.3 438.5,512.4 444.3,513.5 450.2,514.4 456.1,515.4 462,516.4 467.9,517.3 473.8,518.3 479.7,519.3 485.7,520.3 491.7,521.2 497.7,522.2 503.7,523.2 509.7,524.2 515.8,525.2 518.8,525.6 519.6,527.2 516.6,526.8 510.5,525.8 504.5,524.8 498.5,523.8 492.5,522.9 486.6,521.9 480.6,520.9 474.7,520 468.7,519 462.8,518.1 457,517.1 451.1,516.2 445.2,515.2 439.4,514.1 433.6,513 430.7,512.5" fill="#80b000"/>
<polygon points="518.8,525.6 521.9,526.1 528,526.8 534.1,527.6 540.2,528.3 546.3,529.1 552.5,529.9 558.7,530.6 564.9,531.4 571.1,532.1 577.3,532.9 583.6,533.7 589.8,534.5 596.1,535.2 596.8,536.9 590.5,536.1 584.2,535.3 578,534.6 571.8,533.8 565.6,533 559.4,532.2 553.2,531.5 547.1,530.7 540.9,529.9 534.8,529.2 528.7,528.4 522.6,527.7 519.6,527.2" fill="#d8e800"/>
<polygon points="596.1,535.2 599.3,535.5 605.6,536.1 611.9,536.7 618.3,537.2 624.7,537.8 631,538.4 637.5,538.9 643.9,539.4 650.3,540 656.8,540.5 663.3,541 669.8,541.5 676.3,542.1 682.8,542.6 689.4,543.2 696,543.7 699.3,544 699.7,546.1 696.5,545.8 689.9,545.2 683.3,544.7 676.8,544.1 670.3,543.6 663.8,543 657.3,542.5 650.9,541.9 644.4,541.4 638,540.8 631.6,540.3 625.2,539.7 618.9,539 612.5,538.4 606.2,537.8 599.9,537.2 596.8,536.9" fill="#80b000"/>
<polygon points="699.3,544 702.6,544.3 709.2,544.9 715.8,545.5 722.5,546.1 729.2,546.7 735.9,547.3 742.6,547.9 745.9,548.2 746.3,550.4 743,550.1 736.3,549.5 729.6,548.9 722.9,548.2 716.3,547.6 709.6,547 703,546.4 699.7,546.1" fill="#207800"/>
<polygon points="745.9,548.2 749.3,548.5 756.1,549 762.9,549.5 769.6,550 776.5,550.5 783.3,551 786.7,551.2 787,553.5 783.6,553.3 776.8,552.8 770,552.3 763.2,551.8 756.4,551.2 749.7,550.7 746.3,550.4" fill="#008038"/>
<polygon points="786.7,551.2 790.2,551.5 797,552 803.9,552.4 810.8,552.9 817.8,553.4 824.7,553.8 825,556.2 818,555.8 811.1,555.3 804.2,554.8 797.3,554.3 790.5,553.8 787,553.5" fill="#00b88c"/>
<polygon points="824.7,553.8 828.2,554 835.2,554.2 842.2,554.5 849.2,554.7 856.3,554.9 863.3,555.2 870.4,555.4 877.5,555.8 877.7,558.6 870.6,558.2 863.5,557.9 856.5,557.6 849.4,557.3 842.4,557 835.4,556.7 828.5,556.4 825,556.2" fill="#00f0e0"/>
<polygon points="139.1,450 141.6,450.6 146.6,451.8 151.5,453 156.5,454.2 161.5,455.4 166.5,456.6 169,457.3 171,461.4 168.5,460.8 163.5,459.7 158.6,458.6 153.6,457.5 148.7,456.4 143.7,455.3 141.2,454.7" fill="#d3d3d3"/>
<polygon points="169,457.3 171.5,457.9 176.6,459.1 181.6,460.3 186.7,461.5 189.2,462.2 191.2,465.9 188.7,465.3 183.6,464.2 178.6,463.1 173.5,462 171,461.4" fill="#8484e4"/>
<polygon points="189.2,462.2 191.8,462.8 196.9,464 202,465.2 207.1,466.5 209.7,467.1 211.6,470.4 209,469.9 203.9,468.7 198.8,467.6 193.7,466.5 191.2,465.9" fill="#4040f0"/>
<polygon points="209.7,467.1 212.3,467.7 217.4,468.9 222.6,470.1 227.8,471.2 233,472.3 238.2,473.4 243.5,474.6 246.1,475.2 247.8,478 245.2,477.4 240,476.3 234.8,475.2 229.6,474.2 224.5,473.1 219.3,472.1 214.2,471 211.6,470.4" fill="#0000ff"/>
<polygon points="246.1,475.2 248.7,475.8 254,477 259.2,478.2 264.5,479.4 269.8,480.6 275.2,481.8 277.8,482.4 279.4,484.9 276.8,484.3 271.5,483.1 266.2,482 261,480.8 255.7,479.7 250.5,478.5 247.8,478" fill="#0068ff"/>
<polygon points="277.8,482.4 280.5,482.9 285.8,484 291.2,485.1 296.6,486.2 302,487.3 304.7,487.9 306.2,490.2 303.5,489.7 298.1,488.6 292.8,487.5 287.4,486.5 282.1,485.4 279.4,484.9" fill="#00c0ff"/>
<polygon points="304.7,487.9 307.4,488.4 312.8,489.5 318.3,490.6 323.7,491.8 329.2,492.9 334.7,494 340.2,495.1 341.5,497.3 336,496.2 330.6,495.1 325.1,494.1 319.7,493 314.3,491.9 308.9,490.8 306.2,490.2" fill="#00f0e0"/>
<polygon points="340.2,495.1 343,495.7 348.5,496.8 354.1,497.9 359.6,499 365.2,500.1 370.8,501.2 373.6,501.8 374.7,503.8 372,503.3 366.4,502.2 360.8,501.1 355.3,500.1 349.8,499 344.3,497.9 341.5,497.3" fill="#00b88c"/>
<polygon points="373.6,501.8 376.4,502.3 382,503.4 387.7,504.5 393.4,505.6 399,506.7 404.8,507.7 410.5,508.8 416.2,509.8 419.1,510.4 420.1,512.2 417.2,511.7 411.5,510.7 405.7,509.7 400.1,508.6 394.4,507.6 388.8,506.6 383.1,505.5 377.5,504.4 374.7,503.8" fill="#008038"/>
<polygon points="419.1,510.4 422,510.9 427.8,512 433.6,513 439.4,514.1 445.2,515.2 451.1,516.2 457,517.1 462.8,518.1 468.7,519 474.7,520 480.6,520.9 486.6,521.9 492.5,522.9 498.5,523.8 504.5,524.8 507.5,525.3 508.3,526.9 505.3,526.4 499.3,525.5 493.4,524.5 487.4,523.5 481.4,522.6 475.5,521.6 469.6,520.7 463.7,519.7 457.8,518.8 452,517.9 446.2,516.9 440.3,515.9 434.5,514.8 428.7,513.8 423,512.8 420.1,512.2" fill="#207800"/>
<polygon points="507.5,525.3 510.5,525.8 516.6,526.8 522.6,527.7 528.7,528.4 534.8,529.2 540.9,529.9 547.1,530.7 553.2,531.5 559.4,532.2 565.6,533 571.8,533.8 578,534.6 584.2,535.3 590.5,536.1 596.8,536.9 603.1,537.5 609.4,538.1 612.5,538.4 613.1,540.2 610,539.9 603.7,539.2 597.4,538.6 591.1,537.8 584.9,537 578.7,536.2 572.4,535.4 566.3,534.6 560.1,533.9 553.9,533.1 547.8,532.3 541.7,531.5 535.6,530.8 529.5,530 523.4,529.2 517.4,528.3 511.3,527.4 508.3,526.9" fill="#80b000"/>
<polygon points="612.5,538.4 615.7,538.7 622.1,539.4 628.4,540 634.8,540.5 641.2,541.1 647.6,541.6 654.1,542.2 660.6,542.7 667,543.3 673.5,543.8 680.1,544.4 686.6,544.9 693.2,545.5 699.7,546.1 706.3,546.7 709.6,547 710.1,549.2 706.8,548.9 700.2,548.2 693.6,547.6 687.1,547 680.6,546.4 674,545.9 667.6,545.3 661.1,544.7 654.6,544.2 648.2,543.6 641.8,543 635.4,542.4 629,541.8 622.6,541.2 616.3,540.5 613.1,540.2" fill="#207800"/>
<polygon points="709.6,547 713,547.3 719.6,547.9 726.2,548.5 732.9,549.2 739.6,549.8 746.3,550.4 753.1,551 759.8,551.5 760.2,553.8 753.4,553.2 746.7,552.6 740,552 733.3,551.3 726.7,550.7 720,550.1 713.4,549.5 710.1,549.2" fill="#008038"/>
<polygon points="759.8,551.5 763.2,551.8 770,552.3 776.8,552.8 783.6,553.3 790.5,553.8 797.3,554.3 800.8,554.5 801,556.9 797.6,556.6 790.8,556.1 783.9,555.6 777.1,555 770.3,554.5 763.6,554 760.2,553.8" fill="#00b88c"/>
<polygon points="800.8,554.5 804.2,554.8 811.1,555.3 818,555.8 825,556.2 831.9,556.5 838.9,556.8 845.9,557.1 846.1,559.7 839.2,559.3 832.2,559 825.2,558.6 818.3,558.2 811.4,557.7 804.5,557.1 801,556.9" fill="#00f0e0"/>
<polygon points="845.9,557.1 849.4,557.3 856.5,557.6 863.5,557.9 870.6,558.2 877.7,558.6 877.9,561.3 870.8,560.9 863.7,560.5 856.7,560.2 849.6,559.8 846.1,559.7" fill="#00c0ff"/>
<polygon points="141.2,454.7 143.7,455.3 148.7,456.4 153.6,457.5 158.6,458.6 163.5,459.7 168.5,460.8 171,461.4 173.1,465.5 170.6,465 165.6,464 160.6,463 155.7,462 150.8,461 145.8,460 143.4,459.5" fill="#d3d3d3"/>
<polygon points="171,461.4 173.5,462 178.6,463.1 183.6,464.2 188.7,465.3 193.7,466.5 196.3,467 198.2,470.7 195.7,470.1 190.6,469.1 185.6,468.1 180.6,467.1 175.6,466.1 173.1,465.5" fill="#8484e4"/>
<polygon points="196.3,467 198.8,467.6 203.9,468.7 209,469.9 214.2,471 219.3,472.1 221.2,475.3 216,474.3 210.9,473.2 205.8,472.2 200.7,471.2 198.2,470.7" fill="#4040f0"/>
<polygon points="219.3,472.1 221.9,472.6 227,473.6 232.2,474.7 237.4,475.7 242.6,476.8 247.8,478 253.1,479.1 258.3,480.3 263.6,481.4 265.3,484 260.1,482.9 254.8,481.8 249.6,480.7 244.4,479.6 239.2,478.6 234,477.6 228.9,476.7 223.7,475.7 221.2,475.3" fill="#0000ff"/>
<polygon points="263.6,481.4 266.2,482 271.5,483.1 276.8,484.3 282.1,485.4 287.4,486.5 290.1,487 291.6,489.5 289,488.9 283.7,487.9 278.4,486.8 273.2,485.7 267.9,484.6 265.3,484" fill="#0068ff"/>
<polygon points="290.1,487 292.8,487.5 298.1,488.6 303.5,489.7 308.9,490.8 314.3,491.9 319.7,493 325.1,494.1 327.8,494.6 329.2,496.9 326.5,496.3 321.1,495.3 315.7,494.2 310.3,493.1 305,492.1 299.6,491 294.3,490 291.6,489.5" fill="#00c0ff"/>
<polygon points="327.8,494.6 330.6,495.1 336,496.2 341.5,497.3 347,498.4 352.5,499.5 358.1,500.6 363.6,501.7 366.4,502.2 367.6,504.3 364.8,503.8 359.3,502.7 353.8,501.7 348.3,500.6 342.8,499.5 337.4,498.5 331.9,497.4 329.2,496.9" fill="#00f0e0"/>
<polygon points="366.4,502.2 369.2,502.7 374.7,503.8 380.3,504.9 386,506 391.6,507.1 397.2,508.1 402.9,509.2 408.6,510.2 411.5,510.7 412.4,512.6 409.6,512.1 403.9,511.1 398.3,510.1 392.6,509.1 387,508 381.5,507 375.9,505.9 370.3,504.8 367.6,504.3" fill="#00b88c"/>
<polygon points="411.5,510.7 414.3,511.2 420.1,512.2 425.8,513.3 431.6,514.3 437.4,515.3 443.2,516.4 449.1,517.4 454.9,518.3 460.8,519.3 466.7,520.2 472.6,521.2 478.5,522.1 484.4,523.1 490.4,524 493.4,524.5 494.2,526.1 491.2,525.7 485.3,524.7 479.3,523.8 473.4,522.8 467.5,521.9 461.7,521 455.8,520 450,519.1 444.2,518.1 438.4,517.1 432.6,516.1 426.8,515.1 421,514.1 415.3,513.1 412.4,512.6" fill="#008038"/>
<polygon points="493.4,524.5 496.3,525 502.3,525.9 508.3,526.9 514.4,527.9 520.4,528.8 526.5,529.6 532.5,530.4 538.6,531.1 544.7,531.9 550.9,532.7 557,533.5 563.2,534.3 569.4,535 575.6,535.8 581.8,536.6 588,537.4 594.3,538.2 600.5,538.9 606.8,539.6 613.1,540.2 619.5,540.9 625.8,541.5 629,541.8 629.6,543.7 626.4,543.3 620.1,542.7 613.7,542 607.4,541.3 601.2,540.6 594.9,539.9 588.7,539.1 582.4,538.3 576.2,537.5 570,536.7 563.9,535.9 557.7,535.1 551.6,534.3 545.5,533.5 539.4,532.7 533.3,532 527.2,531.2 521.2,530.4 515.1,529.4 509.1,528.5 503.1,527.5 497.2,526.6 494.2,526.1" fill="#207800"/>
<polygon points="629,541.8 632.2,542.1 638.6,542.7 645,543.3 651.4,543.9 657.9,544.4 664.3,545 670.8,545.6 677.3,546.2 683.8,546.7 690.4,547.3 696.9,547.9 703.5,548.5 710.1,549.2 716.7,549.8 720,550.1 720.4,552.2 717.1,551.9 710.5,551.3 703.9,550.7 697.4,550 690.8,549.4 684.3,548.8 677.8,548.2 671.3,547.6 664.8,547 658.4,546.4 652,545.8 645.5,545.2 639.1,544.6 632.8,544 629.6,543.7" fill="#008038"/>
<polygon points="720,550.1 723.3,550.4 730,551 736.7,551.7 743.4,552.3 750.1,552.9 756.8,553.5 763.6,554 770.3,554.5 773.7,554.8 774.1,557 770.7,556.8 763.9,556.2 757.2,555.7 750.5,555.1 743.7,554.5 737.1,553.8 730.4,553.2 723.8,552.6 720.4,552.2" fill="#00b88c"/>
<polygon points="773.7,554.8 777.1,555 783.9,555.6 790.8,556.1 797.6,556.6 804.5,557.1 811.4,557.7 818.3,558.2 818.6,560.6 811.7,560 804.8,559.5 797.9,558.9 791.1,558.4 784.3,557.9 777.5,557.3 774.1,557" fill="#00f0e0"/>
<polygon points="818.3,558.2 821.8,558.4 828.7,558.8 835.7,559.2 842.6,559.5 849.6,559.8 856.7,560.2 863.7,560.5 870.8,560.9 877.9,561.3 878,564.1 871,563.6 863.9,563.2 856.9,562.8 849.9,562.4 842.9,562 835.9,561.6 828.9,561.3 822,560.8 818.6,560.6" fill="#00c0ff"/>
<polygon points="143.4,459.5 145.8,460 150.8,461 155.7,462 160.6,463 165.6,464 170.6,465 173.1,465.5 175.1,469.7 172.6,469.2 167.6,468.3 162.7,467.4 157.8,466.5 152.9,465.6 147.9,464.7 145.5,464.2" fill="#d3d3d3"/>
<polygon points="173.1,465.5 175.6,466.1 180.6,467.1 185.6,468.1 190.6,469.1 195.7,470.1 200.7,471.2 203.3,471.7 205.2,475.2 202.7,474.8 197.6,473.8 192.6,472.9 187.6,472 182.6,471.1 177.6,470.2 175.1,469.7" fill="#8484e4"/>
<polygon points="203.3,471.7 205.8,472.2 210.9,473.2 216,474.3 221.2,475.3 226.3,476.2 231.5,477.2 236.6,478.1 239.2,478.6 241,481.4 238.4,481 233.3,480.1 228.1,479.3 223,478.4 217.9,477.5 212.8,476.6 207.7,475.7 205.2,475.2" fill="#4040f0"/>
<polygon points="239.2,478.6 241.8,479.1 247,480.2 252.2,481.3 257.4,482.4 262.7,483.5 267.9,484.6 273.2,485.7 275.8,486.3 277.4,488.8 274.8,488.3 269.6,487.2 264.4,486.1 259.2,485.1 254,484 248.8,482.9 243.6,481.9 241,481.4" fill="#0000ff"/>
<polygon points="275.8,486.3 278.4,486.8 283.7,487.9 289,488.9 294.3,490 299.6,491 305,492.1 310.3,493.1 311.8,495.5 306.5,494.5 301.2,493.5 295.9,492.4 290.6,491.4 285.3,490.4 280.1,489.4 277.4,488.8" fill="#0068ff"/>
<polygon points="310.3,493.1 313,493.7 318.4,494.7 323.8,495.8 329.2,496.9 334.6,497.9 340.1,499 345.6,500.1 351,501.1 356.5,502.2 357.8,504.3 352.3,503.3 346.8,502.3 341.4,501.2 336,500.2 330.6,499.1 325.2,498.1 319.8,497.1 314.5,496 311.8,495.5" fill="#00c0ff"/>
<polygon points="356.5,502.2 359.3,502.7 364.8,503.8 370.3,504.8 375.9,505.9 381.5,507 387,508 392.6,509.1 398.3,510.1 401.1,510.6 402.1,512.6 399.3,512.1 393.7,511.1 388.1,510.1 382.6,509 377,508 371.5,506.9 366,505.9 360.5,504.9 357.8,504.3" fill="#00f0e0"/>
<polygon points="401.1,510.6 403.9,511.1 409.6,512.1 415.3,513.1 421,514.1 426.8,515.1 432.6,516.1 438.4,517.1 444.2,518.1 450,519.1 455.8,520 461.7,521 467.5,521.9 473.4,522.8 479.3,523.8 480.2,525.4 474.3,524.5 468.4,523.6 462.6,522.7 456.7,521.7 450.9,520.8 445.1,519.9 439.3,518.9 433.5,517.9 427.8,516.9 422,516 416.3,515 410.6,514 404.9,513 402.1,512.6" fill="#00b88c"/>
<polygon points="479.3,523.8 482.3,524.2 488.2,525.2 494.2,526.1 500.1,527.1 506.1,528 512.1,529 518.2,529.9 524.2,530.8 530.2,531.6 536.3,532.3 542.4,533.1 548.5,533.9 554.6,534.7 560.8,535.5 566.9,536.3 573.1,537.1 579.3,537.9 585.5,538.7 591.8,539.5 598,540.3 604.3,541 610.6,541.6 616.9,542.3 623.2,543 629.6,543.7 636,544.3 642.3,544.9 648.7,545.5 649.3,547.5 642.9,546.9 636.5,546.2 630.2,545.5 623.8,544.8 617.5,544.1 611.2,543.4 604.9,542.7 598.7,541.9 592.4,541.1 586.2,540.3 580,539.5 573.8,538.7 567.6,537.9 561.5,537.1 555.4,536.3 549.2,535.5 543.1,534.7 537.1,533.9 531,533.1 525,532.3 518.9,531.5 512.9,530.6 506.9,529.6 501,528.7 495,527.7 489.1,526.8 483.1,525.9 480.2,525.4" fill="#008038"/>
<polygon points="648.7,545.5 652,545.8 658.4,546.4 664.8,547 671.3,547.6 677.8,548.2 684.3,548.8 690.8,549.4 697.4,550 703.9,550.7 710.5,551.3 717.1,551.9 723.8,552.6 730.4,553.2 733.7,553.5 734.1,555.7 730.8,555.4 724.2,554.7 717.6,554.1 711,553.4 704.4,552.8 697.8,552.1 691.3,551.5 684.8,550.9 678.3,550.2 671.8,549.6 665.4,549 658.9,548.4 652.5,547.8 649.3,547.5" fill="#00b88c"/>
<polygon points="733.7,553.5 737.1,553.8 743.7,554.5 750.5,555.1 757.2,555.7 763.9,556.2 770.7,556.8 777.5,557.3 784.3,557.9 791.1,558.4 791.4,560.7 784.6,560.1 777.8,559.6 771,559 764.3,558.5 757.5,557.9 750.8,557.3 744.1,556.7 737.5,556 734.1,555.7" fill="#00f0e0"/>
<polygon points="791.1,558.4 794.5,558.7 801.3,559.2 808.2,559.7 815.1,560.3 822,560.8 828.9,561.3 835.9,561.6 839.4,561.8 839.6,564.3 836.1,564.1 829.2,563.7 822.3,563.2 815.4,562.7 808.5,562.1 801.6,561.5 794.8,561 791.4,560.7" fill="#00c0ff"/>
<polygon points="839.4,561.8 842.9,562 849.9,562.4 856.9,562.8 863.9,563.2 871,563.6 878,564.1 878.2,566.8 871.1,566.3 864.1,565.9 857.1,565.4 850.1,565 843.1,564.6 839.6,564.3" fill="#0068ff"/>
<polygon points="145.5,464.2 147.9,464.7 152.9,465.6 157.8,466.5 162.7,467.4 167.6,468.3 172.6,469.2 177.6,470.2 179.6,474.3 174.6,473.4 169.7,472.6 164.8,471.8 159.9,471 155,470.2 150.1,469.4 147.6,469" fill="#d3d3d3"/>
<polygon points="177.6,470.2 180.1,470.6 185.1,471.5 190.1,472.5 195.1,473.4 200.2,474.3 205.2,475.2 210.3,476.2 212.2,479.6 207.1,478.8 202.1,477.9 197.1,477.1 192.1,476.3 187.1,475.5 182.1,474.7 179.6,474.3" fill="#8484e4"/>
<polygon points="210.3,476.2 212.8,476.6 217.9,477.5 223,478.4 228.1,479.3 233.3,480.1 238.4,481 243.6,481.9 248.8,482.9 254,484 259.2,485.1 260.9,487.8 255.7,486.7 250.6,485.7 245.4,484.7 240.3,483.9 235.1,483.1 230,482.4 224.9,481.6 219.8,480.8 214.7,480 212.2,479.6" fill="#4040f0"/>
<polygon points="259.2,485.1 261.8,485.6 267,486.7 272.2,487.7 277.4,488.8 282.7,489.9 287.9,490.9 293.2,491.9 295.9,492.4 297.4,494.9 294.8,494.4 289.5,493.4 284.3,492.4 279.1,491.4 273.9,490.3 268.7,489.3 263.5,488.3 260.9,487.8" fill="#0000ff"/>
<polygon points="295.9,492.4 298.5,492.9 303.8,494 309.1,495 314.5,496 319.8,497.1 325.2,498.1 330.6,499.1 336,500.2 341.4,501.2 344.1,501.7 345.4,503.9 342.7,503.4 337.3,502.4 332,501.4 326.6,500.4 321.3,499.4 315.9,498.4 310.6,497.4 305.3,496.4 300,495.4 297.4,494.9" fill="#0068ff"/>
<polygon points="344.1,501.7 346.8,502.3 352.3,503.3 357.8,504.3 363.2,505.4 368.7,506.4 374.3,507.4 379.8,508.5 385.3,509.5 390.9,510.6 393.7,511.1 394.7,513.1 392,512.6 386.4,511.6 380.9,510.5 375.4,509.5 369.9,508.5 364.5,507.5 359,506.5 353.6,505.5 348.1,504.5 345.4,503.9" fill="#00c0ff"/>
<polygon points="393.7,511.1 396.5,511.6 402.1,512.6 407.7,513.5 413.4,514.5 419.1,515.5 424.9,516.4 430.6,517.4 436.4,518.4 442.2,519.4 448,520.4 453.8,521.3 459.6,522.2 465.5,523.1 466.4,524.8 460.5,523.9 454.7,523 448.9,522.1 443.1,521.1 437.3,520.2 431.6,519.2 425.8,518.3 420.1,517.3 414.4,516.4 408.7,515.5 403.1,514.5 397.5,513.6 394.7,513.1" fill="#00f0e0"/>
<polygon points="465.5,523.1 468.4,523.6 474.3,524.5 480.2,525.4 486.1,526.4 492,527.3 498,528.2 503.9,529.2 509.9,530.1 515.9,531 521.9,531.9 528,532.7 534,533.5 540.1,534.3 546.2,535.1 552.3,535.9 558.4,536.7 564.6,537.5 570.7,538.3 576.9,539.1 583.1,539.9 589.3,540.7 595.5,541.5 601.8,542.3 608.1,543 614.4,543.7 620.7,544.5 627,545.2 633.3,545.9 639.7,546.6 646.1,547.2 652.5,547.8 658.9,548.4 665.4,549 668.6,549.3 669.1,551.3 665.9,551 659.4,550.4 653,549.7 646.6,549.1 640.3,548.5 633.9,547.8 627.6,547 621.3,546.3 615,545.5 608.7,544.8 602.4,544 596.2,543.2 590,542.4 583.8,541.6 577.6,540.8 571.4,539.9 565.3,539.1 559.1,538.3 553,537.5 546.9,536.7 540.8,535.9 534.8,535.1 528.7,534.3 522.7,533.5 516.7,532.6 510.7,531.7 504.8,530.8 498.8,529.8 492.9,528.9 487,528 481.1,527.1 475.2,526.2 469.3,525.3 466.4,524.8" fill="#00b88c"/>
<polygon points="668.6,549.3 671.8,549.6 678.3,550.2 684.8,550.9 691.3,551.5 697.8,552.1 704.4,552.8 711,553.4 717.6,554.1 724.2,554.7 730.8,555.4 737.5,556 744.1,556.7 747.5,557 747.9,559.2 744.5,558.9 737.9,558.2 731.2,557.6 724.6,556.9 718,556.2 711.4,555.5 704.9,554.9 698.3,554.2 691.8,553.6 685.3,552.9 678.8,552.3 672.3,551.6 669.1,551.3" fill="#00f0e0"/>
<polygon points="747.5,557 750.8,557.3 757.5,557.9 764.3,558.5 771,559 777.8,559.6 784.6,560.1 791.4,560.7 798.2,561.3 805.1,561.8 808.5,562.1 808.8,564.4 805.3,564.2 798.5,563.6 791.7,563 784.9,562.4 778.1,561.9 771.4,561.3 764.6,560.7 757.9,560.2 751.2,559.6 747.9,559.2" fill="#00c0ff"/>
<polygon points="808.5,562.1 811.9,562.4 818.8,562.9 825.7,563.5 832.7,563.9 839.6,564.3 846.6,564.8 853.6,565.2 860.6,565.7 867.6,566.1 874.7,566.6 878.2,566.8 878.4,569.6 874.8,569.3 867.8,568.8 860.8,568.3 853.8,567.8 846.8,567.3 839.8,566.8 832.9,566.4 826,565.9 819.1,565.3 812.2,564.7 808.8,564.4" fill="#0068ff"/>
<polygon points="147.6,469 150.1,469.4 155,470.2 159.9,471 164.8,471.8 169.7,472.6 174.6,473.4 179.6,474.3 184.6,475.1 186.6,479.1 181.6,478.3 176.7,477.6 171.7,476.9 166.8,476.2 161.9,475.5 157.1,474.8 152.2,474.1 149.8,473.7" fill="#d3d3d3"/>
<polygon points="184.6,475.1 187.1,475.5 192.1,476.3 197.1,477.1 202.1,477.9 207.1,478.8 212.2,479.6 217.3,480.4 222.3,481.2 227.4,482 230,482.4 231.8,485.5 229.3,485.1 224.2,484.4 219.1,483.7 214.1,483 209.1,482.3 204,481.6 199,480.9 194,480.1 189.1,479.4 186.6,479.1" fill="#8484e4"/>
<polygon points="230,482.4 232.6,482.7 237.7,483.5 242.8,484.3 248,485.2 253.2,486.2 258.3,487.3 263.5,488.3 268.7,489.3 273.9,490.3 276.5,490.9 278.1,493.4 275.5,492.9 270.4,491.9 265.2,491 260.1,490 254.9,489 249.8,488 244.6,487.1 239.5,486.5 234.4,485.8 231.8,485.5" fill="#4040f0"/>
<polygon points="276.5,490.9 279.1,491.4 284.3,492.4 289.5,493.4 294.8,494.4 300,495.4 305.3,496.4 310.6,497.4 315.9,498.4 321.3,499.4 326.6,500.4 328,502.7 322.7,501.7 317.4,500.7 312.1,499.7 306.8,498.8 301.6,497.8 296.3,496.8 291.1,495.9 285.9,494.9 280.7,493.9 278.1,493.4" fill="#0000ff"/>
<polygon points="326.6,500.4 329.3,500.9 334.7,501.9 340,502.9 345.4,503.9 350.9,505 356.3,506 361.7,507 367.2,508 372.7,509 378.2,510 383.7,511.1 384.8,513.1 379.3,512.1 373.8,511.1 368.4,510.1 362.9,509.1 357.5,508.1 352.1,507.1 346.7,506.2 341.4,505.2 336,504.2 330.7,503.2 328,502.7" fill="#0068ff"/>
<polygon points="383.7,511.1 386.4,511.6 392,512.6 397.5,513.6 403.1,514.5 408.7,515.5 414.4,516.4 420.1,517.3 425.8,518.3 431.6,519.2 437.3,520.2 443.1,521.1 448.9,522.1 454.7,523 455.6,524.7 449.8,523.8 444,522.9 438.3,522 432.5,521 426.8,520.1 421.1,519.2 415.4,518.3 409.7,517.4 404.1,516.5 398.6,515.6 393,514.6 387.5,513.6 384.8,513.1" fill="#00c0ff"/>
<polygon points="454.7,523 457.6,523.4 463.5,524.3 469.3,525.3 475.2,526.2 481.1,527.1 487,528 492.9,528.9 498.8,529.8 504.8,530.8 510.7,531.7 516.7,532.6 522.7,533.5 528.7,534.3 534.8,535.1 540.8,535.9 546.9,536.7 553,537.5 559.1,538.3 565.3,539.1 571.4,539.9 577.6,540.8 583.8,541.6 590,542.4 596.2,543.2 602.4,544 608.7,544.8 615,545.5 621.3,546.3 627.6,547 633.9,547.8 640.3,548.5 646.6,549.1 653,549.7 659.4,550.4 665.9,551 672.3,551.6 678.8,552.3 685.3,552.9 691.8,553.6 692.3,555.6 685.8,555 679.3,554.3 672.8,553.7 666.4,553 660,552.3 653.6,551.7 647.2,551 640.8,550.4 634.5,549.6 628.2,548.9 621.9,548.1 615.6,547.3 609.3,546.5 603,545.7 596.8,544.9 590.6,544.1 584.4,543.2 578.2,542.4 572.1,541.6 566,540.8 559.8,539.9 553.7,539.1 547.7,538.3 541.6,537.5 535.5,536.7 529.5,535.9 523.5,535.1 517.5,534.2 511.5,533.3 505.6,532.4 499.6,531.5 493.7,530.5 487.8,529.6 481.9,528.7 476,527.8 470.2,526.9 464.3,526 458.5,525.1 455.6,524.7" fill="#00f0e0"/>
<polygon points="691.8,553.6 695,553.9 701.6,554.6 708.1,555.2 714.7,555.9 721.3,556.6 727.9,557.2 734.5,557.9 741.2,558.6 747.9,559.2 754.5,559.9 761.3,560.4 768,561 768.3,563.3 761.6,562.7 754.9,562.1 748.2,561.5 741.6,560.8 734.9,560.1 728.3,559.4 721.7,558.7 715.1,558 708.6,557.3 702,556.7 695.5,556 692.3,555.6" fill="#00c0ff"/>
<polygon points="768,561 771.4,561.3 778.1,561.9 784.9,562.4 791.7,563 798.5,563.6 805.3,564.2 812.2,564.7 819.1,565.3 826,565.9 832.9,566.4 833.1,568.8 826.2,568.3 819.3,567.7 812.5,567.1 805.6,566.5 798.8,565.9 792,565.3 785.2,564.7 778.4,564.1 771.7,563.6 768.3,563.3" fill="#0068ff"/>
<polygon points="832.9,566.4 836.4,566.6 843.3,567.1 850.3,567.6 857.3,568.1 864.3,568.6 871.3,569.1 878.4,569.6 878.5,572.4 871.5,571.8 864.5,571.2 857.5,570.7 850.5,570.2 843.5,569.6 836.6,569.1 833.1,568.8" fill="#0000ff"/>
<polygon points="149.8,473.7 152.2,474.1 157.1,474.8 161.9,475.5 166.8,476.2 171.7,476.9 176.7,477.6 181.6,478.3 186.6,479.1 191.5,479.8 194,480.1 196,484 193.5,483.7 188.6,483.1 183.6,482.4 178.7,481.8 173.8,481.2 168.9,480.6 164,480 159.2,479.4 154.3,478.8 151.9,478.5" fill="#d3d3d3"/>
<polygon points="194,480.1 196.5,480.5 201.5,481.2 206.5,481.9 211.6,482.7 216.6,483.4 221.7,484.1 226.8,484.8 231.8,485.5 236.9,486.1 242.1,486.8 247.2,487.6 252.3,488.5 254.1,491.3 249,490.4 243.9,489.7 238.8,489.1 233.7,488.5 228.6,488 223.6,487.4 218.5,486.8 213.5,486.1 208.5,485.5 203.5,484.9 198.5,484.3 196,484" fill="#8484e4"/>
<polygon points="252.3,488.5 254.9,489 260.1,490 265.2,491 270.4,491.9 275.5,492.9 280.7,493.9 285.9,494.9 291.1,495.9 296.3,496.8 301.6,497.8 303.1,500.2 297.9,499.3 292.7,498.3 287.5,497.4 282.4,496.5 277.2,495.5 272.1,494.6 267,493.6 261.8,492.7 256.7,491.7 254.1,491.3" fill="#4040f0"/>
<polygon points="301.6,497.8 304.2,498.3 309.5,499.3 314.8,500.2 320,501.2 325.4,502.2 330.7,503.2 336,504.2 341.4,505.2 346.7,506.2 352.1,507.1 357.5,508.1 362.9,509.1 368.4,510.1 371.1,510.6 372.3,512.7 369.6,512.2 364.2,511.3 358.8,510.3 353.4,509.3 348,508.4 342.7,507.4 337.4,506.4 332.1,505.5 326.8,504.5 321.5,503.5 316.2,502.6 311,501.6 305.7,500.7 303.1,500.2" fill="#0000ff"/>
<polygon points="371.1,510.6 373.8,511.1 379.3,512.1 384.8,513.1 390.3,514.1 395.8,515.1 401.3,516 406.9,516.9 412.6,517.8 418.2,518.8 423.9,519.7 429.7,520.6 435.4,521.5 441.2,522.4 446.9,523.3 447.9,525.1 442.1,524.2 436.3,523.3 430.6,522.4 424.9,521.5 419.2,520.6 413.5,519.8 407.9,518.9 402.3,518 396.8,517.1 391.4,516.1 385.9,515.2 380.4,514.2 375,513.2 372.3,512.7" fill="#0068ff"/>
<polygon points="446.9,523.3 449.8,523.8 455.6,524.7 461.4,525.6 467.3,526.5 473.1,527.4 479,528.3 484.8,529.2 490.7,530.1 496.7,531 502.6,531.9 508.5,532.8 514.5,533.7 520.5,534.6 526.5,535.5 532.5,536.3 538.6,537.1 544.6,537.9 550.7,538.7 556.8,539.5 562.9,540.3 569,541.2 575.2,542 581.3,542.8 587.5,543.6 593.7,544.5 599.9,545.3 606.2,546.1 612.4,546.9 618.7,547.7 625,548.5 631.3,549.3 637.7,550 644,550.7 650.4,551.4 656.8,552 663.2,552.7 669.6,553.3 676.1,554 682.5,554.6 689,555.3 695.5,556 702,556.7 708.6,557.3 709,559.5 702.5,558.8 696,558.1 689.5,557.4 683,556.7 676.6,556 670.1,555.3 663.7,554.7 657.3,554 650.9,553.3 644.6,552.6 638.2,551.9 631.9,551.1 625.6,550.3 619.3,549.5 613,548.6 606.8,547.8 600.6,547 594.4,546.1 588.2,545.3 582,544.5 575.8,543.6 569.7,542.8 563.6,542 557.5,541.1 551.4,540.3 545.4,539.5 539.3,538.7 533.3,537.9 527.3,537 521.3,536.2 515.3,535.3 509.4,534.4 503.4,533.5 497.5,532.6 491.6,531.7 485.7,530.8 479.8,529.9 474,529.1 468.1,528.2 462.3,527.3 456.5,526.4 450.7,525.5 447.9,525.1" fill="#00c0ff"/>
<polygon points="708.6,557.3 711.9,557.7 718.4,558.4 725,559 731.6,559.7 738.3,560.4 744.9,561.1 751.6,561.8 758.3,562.4 765,563 771.7,563.6 778.4,564.1 785.2,564.7 792,565.3 792.3,567.6 785.5,567 778.8,566.4 772,565.8 765.3,565.2 758.6,564.6 752,564 745.3,563.3 738.7,562.6 732,561.9 725.4,561.2 718.9,560.5 712.3,559.8 709,559.5" fill="#0068ff"/>
<polygon points="792,565.3 795.4,565.6 802.2,566.2 809,566.8 815.9,567.4 822.8,568 829.7,568.5 836.6,569.1 843.5,569.6 850.5,570.2 857.5,570.7 864.5,571.2 871.5,571.8 878.5,572.4 878.7,575.1 871.7,574.5 864.6,573.9 857.7,573.3 850.7,572.7 843.7,572.1 836.8,571.6 829.9,571 823,570.4 816.2,569.8 809.3,569.2 802.5,568.5 795.7,567.9 792.3,567.6" fill="#0000ff"/>
<polygon points="151.9,478.5 154.3,478.8 159.2,479.4 164,480 168.9,480.6 173.8,481.2 178.7,481.8 183.6,482.4 188.6,483.1 193.5,483.7 198.5,484.3 203.5,484.9 208.5,485.5 211,485.8 212.9,489.4 210.4,489.1 205.4,488.6 200.5,488.1 195.5,487.6 190.6,487.1 185.7,486.5 180.7,486 175.8,485.5 171,485 166.1,484.5 161.3,484 156.4,483.5 154,483.2" fill="#d3d3d3"/>
<polygon points="211,485.8 213.5,486.1 218.5,486.8 223.6,487.4 228.6,488 233.7,488.5 238.8,489.1 243.9,489.7 249,490.4 254.1,491.3 259.3,492.2 264.4,493.2 269.5,494.1 274.6,495 276.3,497.7 271.2,496.8 266.1,495.9 261,494.9 255.9,494 250.8,493.2 245.7,492.6 240.6,492.1 235.5,491.6 230.5,491.1 225.4,490.6 220.4,490.1 215.4,489.6 212.9,489.4" fill="#8484e4"/>
<polygon points="274.6,495 277.2,495.5 282.4,496.5 287.5,497.4 292.7,498.3 297.9,499.3 303.1,500.2 308.3,501.2 313.6,502.1 318.9,503.1 324.1,504 329.4,505 334.7,505.9 340,506.9 345.4,507.9 350.7,508.8 353.4,509.3 354.7,511.5 352,511 346.7,510.1 341.4,509.1 336.1,508.2 330.8,507.3 325.6,506.3 320.3,505.4 315.1,504.5 309.9,503.6 304.7,502.7 299.5,501.7 294.3,500.8 289.2,499.9 284,499 278.9,498.1 276.3,497.7" fill="#4040f0"/>
<polygon points="353.4,509.3 356.1,509.8 361.5,510.8 366.9,511.7 372.3,512.7 377.7,513.7 383.2,514.7 388.6,515.6 394.1,516.6 399.6,517.6 405.1,518.5 410.7,519.3 416.4,520.2 422.1,521.1 427.8,522 433.5,522.9 434.4,524.7 428.7,523.8 423,523 417.4,522.1 411.7,521.3 406.1,520.4 400.6,519.6 395.2,518.6 389.7,517.7 384.3,516.7 378.9,515.8 373.5,514.8 368.1,513.9 362.7,512.9 357.4,512 354.7,511.5" fill="#0000ff"/>
<polygon points="433.5,522.9 436.3,523.3 442.1,524.2 447.9,525.1 453.6,526 459.4,526.8 465.2,527.7 471.1,528.6 476.9,529.5 482.8,530.4 488.6,531.3 494.5,532.2 500.5,533.1 506.4,534 512.3,534.9 518.3,535.8 524.3,536.6 530.3,537.4 536.3,538.3 542.3,539.1 548.4,539.9 554.5,540.7 557.5,541.1 558.2,542.8 555.2,542.3 549.1,541.5 543.1,540.7 537.1,539.8 531,539 525.1,538.2 519.1,537.3 513.1,536.5 507.2,535.6 501.3,534.7 495.4,533.8 489.5,532.9 483.6,532 477.8,531.2 471.9,530.3 466.1,529.4 460.3,528.5 454.5,527.7 448.8,526.8 443,526 437.3,525.1 434.4,524.7" fill="#0068ff"/>
<polygon points="557.5,541.1 560.5,541.6 566.7,542.4 572.8,543.2 578.9,544 585.1,544.9 591.3,545.7 597.5,546.6 598.1,548.2 591.9,547.4 585.7,546.5 579.6,545.7 573.5,544.9 567.3,544 561.3,543.2 558.2,542.8" fill="#00c0ff"/>
<polygon points="597.5,546.6 600.6,547 606.8,547.8 613,548.6 619.3,549.5 625.6,550.3 631.9,551.1 638.2,551.9 644.6,552.6 650.9,553.3 657.3,554 663.7,554.7 670.1,555.3 676.6,556 683,556.7 689.5,557.4 696,558.1 702.5,558.8 709,559.5 715.6,560.2 722.1,560.9 728.7,561.6 729.2,563.7 722.6,563 716,562.3 709.5,561.6 703,560.9 696.5,560.2 690,559.5 683.5,558.7 677.1,558 670.6,557.3 664.2,556.6 657.8,555.9 651.5,555.3 645.1,554.6 638.8,553.8 632.5,553 626.2,552.1 619.9,551.2 613.6,550.4 607.4,549.5 601.2,548.7 598.1,548.2" fill="#0068ff"/>
<polygon points="728.7,561.6 732,561.9 738.7,562.6 745.3,563.3 752,564 758.6,564.6 765.3,565.2 772,565.8 778.8,566.4 785.5,567 792.3,567.6 799.1,568.2 805.9,568.8 812.7,569.5 819.6,570.1 823,570.4 823.3,572.8 819.9,572.4 813,571.8 806.2,571.2 799.4,570.6 792.6,569.9 785.9,569.3 779.1,568.7 772.4,568.1 765.7,567.4 759,566.8 752.3,566.2 745.7,565.5 739.1,564.8 732.5,564.1 729.2,563.7" fill="#0000ff"/>
<polygon points="823,570.4 826.5,570.7 833.4,571.3 840.3,571.9 847.2,572.4 854.2,573 861.2,573.6 868.1,574.2 875.2,574.8 878.7,575.1 878.8,577.9 875.3,577.6 868.3,576.9 861.3,576.3 854.4,575.6 847.4,575 840.5,574.4 833.6,573.7 826.7,573.1 823.3,572.8" fill="#4040f0"/>
</g>
<path d="M137 445.2L142 446.5L146.9 447.9L151.9 449.2L156.9 450.5L162 451.8L167 453.1L172 454.4L177.1 455.8L182.2 457.1L187.3 458.4L192.4 459.7L197.5 461.1L202.7 462.4L207.8 463.8L213 465.1L218.2 466.4L223.4 467.6L228.6 468.8L233.8 470L239 471.2L244.3 472.5L249.6 473.7L254.9 474.9L260.2 476.2L265.5 477.4L270.8 478.6L276.2 479.9L281.6 481L287 482.1L292.4 483.2L297.8 484.4L303.2 485.5L308.7 486.6L314.1 487.8L319.6 488.9L325.1 490.1L330.6 491.2L336.1 492.4L341.7 493.5L347.2 494.6L352.8 495.8L358.4 496.9L364 498L369.7 499.1L375.3 500.3L381 501.4L386.6 502.5L392.3 503.6L398 504.7L403.8 505.8L409.5 506.9L415.3 508L421 509.1L426.8 510.2L432.6 511.3L438.5 512.4L444.3 513.5L450.2 514.4L456.1 515.4L462 516.4L467.9 517.3L473.8 518.3L479.7 519.3L485.7 520.3L491.7 521.2L497.7 522.2L503.7 523.2L509.7 524.2L515.8 525.2L521.9 526.1L528 526.8L534.1 527.6L540.2 528.3L546.3 529.1L552.5 529.9L558.7 530.6L564.9 531.4L571.1 532.1L577.3 532.9L583.6 533.7L589.8 534.5L596.1 535.2L602.4 535.8L608.8 536.4L615.1 537L621.5 537.5L627.8 538.1L634.2 538.6L640.7 539.2L647.1 539.7L653.6 540.2L660 540.7L666.5 541.3L673 541.8L679.6 542.3L686.1 542.9L692.7 543.4L699.3 544L705.9 544.6L712.5 545.2L719.2 545.8L725.8 546.4L732.5 547L739.2 547.6L745.9 548.2L752.7 548.8L759.5 549.3L766.2 549.8L773 550.3L779.9 550.7L786.7 551.2L793.6 551.7L800.5 552.2L807.4 552.7L814.3 553.2L821.2 553.7L828.2 554L835.2 554.2L842.2 554.5L849.2 554.7L856.3 554.9L863.3 555.2L870.4 555.4L877.5 555.8M141.2 454.7L146.2 455.8L151.1 456.9L156.1 458.1L161.1 459.2L166 460.3L171 461.4L176.1 462.5L181.1 463.6L186.1 464.8L191.2 465.9L196.3 467L201.4 468.2L206.5 469.3L211.6 470.4L216.7 471.6L221.9 472.6L227 473.6L232.2 474.7L237.4 475.7L242.6 476.8L247.8 478L253.1 479.1L258.3 480.3L263.6 481.4L268.9 482.6L274.1 483.7L279.4 484.9L284.8 485.9L290.1 487L295.4 488.1L300.8 489.2L306.2 490.2L311.6 491.3L317 492.4L322.4 493.5L327.8 494.6L333.3 495.7L338.8 496.8L344.3 497.9L349.8 499L355.3 500.1L360.8 501.1L366.4 502.2L372 503.3L377.5 504.4L383.1 505.5L388.8 506.6L394.4 507.6L400.1 508.6L405.7 509.7L411.5 510.7L417.2 511.7L423 512.8L428.7 513.8L434.5 514.8L440.3 515.9L446.2 516.9L452 517.9L457.8 518.8L463.7 519.7L469.6 520.7L475.5 521.6L481.4 522.6L487.4 523.5L493.4 524.5L499.3 525.5L505.3 526.4L511.3 527.4L517.4 528.3L523.4 529.2L529.5 530L535.6 530.8L541.7 531.5L547.8 532.3L553.9 533.1L560.1 533.9L566.3 534.6L572.4 535.4L578.7 536.2L584.9 537L591.1 537.8L597.4 538.6L603.7 539.2L610 539.9L616.3 540.5L622.6 541.2L629 541.8L635.4 542.4L641.8 543L648.2 543.6L654.6 544.2L661.1 544.7L667.6 545.3L674 545.9L680.6 546.4L687.1 547L693.6 547.6L700.2 548.2L706.8 548.9L713.4 549.5L720 550.1L726.7 550.7L733.3 551.3L740 552L746.7 552.6L753.4 553.2L760.2 553.8L766.9 554.3L773.7 554.8L780.5 555.3L787.3 555.8L794.2 556.3L801 556.9L807.9 557.4L814.8 557.9L821.8 558.4L828.7 558.8L835.7 559.2L842.6 559.5L849.6 559.8L856.7 560.2L863.7 560.5L870.8 560.9L877.9 561.3M145.5 464.2L150.4 465.1L155.3 466L160.2 467L165.2 467.9L170.1 468.8L175.1 469.7L180.1 470.6L185.1 471.5L190.1 472.5L195.1 473.4L200.2 474.3L205.2 475.2L210.3 476.2L215.4 477.1L220.5 478L225.6 478.9L230.7 479.7L235.9 480.6L241 481.4L246.2 482.4L251.4 483.5L256.6 484.5L261.8 485.6L267 486.7L272.2 487.7L277.4 488.8L282.7 489.9L287.9 490.9L293.2 491.9L298.5 492.9L303.8 494L309.1 495L314.5 496L319.8 497.1L325.2 498.1L330.6 499.1L336 500.2L341.4 501.2L346.8 502.3L352.3 503.3L357.8 504.3L363.2 505.4L368.7 506.4L374.3 507.4L379.8 508.5L385.3 509.5L390.9 510.6L396.5 511.6L402.1 512.6L407.7 513.5L413.4 514.5L419.1 515.5L424.9 516.4L430.6 517.4L436.4 518.4L442.2 519.4L448 520.4L453.8 521.3L459.6 522.2L465.5 523.1L471.4 524L477.2 525L483.1 525.9L489.1 526.8L495 527.7L501 528.7L506.9 529.6L512.9 530.6L518.9 531.5L525 532.3L531 533.1L537.1 533.9L543.1 534.7L549.2 535.5L555.4 536.3L561.5 537.1L567.6 537.9L573.8 538.7L580 539.5L586.2 540.3L592.4 541.1L598.7 541.9L604.9 542.7L611.2 543.4L617.5 544.1L623.8 544.8L630.2 545.5L636.5 546.2L642.9 546.9L649.3 547.5L655.7 548.1L662.1 548.7L668.6 549.3L675.1 549.9L681.5 550.5L688 551.2L694.6 551.8L701.1 552.4L707.7 553.1L714.3 553.7L720.9 554.4L727.5 555.1L734.1 555.7L740.8 556.4L747.5 557L754.2 557.6L760.9 558.2L767.6 558.8L774.4 559.3L781.2 559.9L788 560.4L794.8 561L801.6 561.5L808.5 562.1L815.4 562.7L822.3 563.2L829.2 563.7L836.1 564.1L843.1 564.6L850.1 565L857.1 565.4L864.1 565.9L871.1 566.3L878.2 566.8M149.8 473.7L154.6 474.4L159.5 475.1L164.4 475.8L169.3 476.6L174.2 477.3L179.1 478L184.1 478.7L189.1 479.4L194 480.1L199 480.9L204 481.6L209.1 482.3L214.1 483L219.1 483.7L224.2 484.4L229.3 485.1L234.4 485.8L239.5 486.5L244.6 487.1L249.8 488L254.9 489L260.1 490L265.2 491L270.4 491.9L275.5 492.9L280.7 493.9L285.9 494.9L291.1 495.9L296.3 496.8L301.6 497.8L306.8 498.8L312.1 499.7L317.4 500.7L322.7 501.7L328 502.7L333.3 503.7L338.7 504.7L344.1 505.7L349.4 506.6L354.8 507.6L360.2 508.6L365.7 509.6L371.1 510.6L376.6 511.6L382 512.6L387.5 513.6L393 514.6L398.6 515.6L404.1 516.5L409.7 517.4L415.4 518.3L421.1 519.2L426.8 520.1L432.5 521L438.3 522L444 522.9L449.8 523.8L455.6 524.7L461.4 525.6L467.3 526.5L473.1 527.4L479 528.3L484.8 529.2L490.7 530.1L496.7 531L502.6 531.9L508.5 532.8L514.5 533.7L520.5 534.6L526.5 535.5L532.5 536.3L538.6 537.1L544.6 537.9L550.7 538.7L556.8 539.5L562.9 540.3L569 541.2L575.2 542L581.3 542.8L587.5 543.6L593.7 544.5L599.9 545.3L606.2 546.1L612.4 546.9L618.7 547.7L625 548.5L631.3 549.3L637.7 550L644 550.7L650.4 551.4L656.8 552L663.2 552.7L669.6 553.3L676.1 554L682.5 554.6L689 555.3L695.5 556L702 556.7L708.6 557.3L715.1 558L721.7 558.7L728.3 559.4L734.9 560.1L741.6 560.8L748.2 561.5L754.9 562.1L761.6 562.7L768.3 563.3L775.1 563.8L781.8 564.4L788.6 565L795.4 565.6L802.2 566.2L809 566.8L815.9 567.4L822.8 568L829.7 568.5L836.6 569.1L843.5 569.6L850.5 570.2L857.5 570.7L864.5 571.2L871.5 571.8L878.5 572.4M154 483.2L158.8 483.7L163.7 484.2L168.5 484.7L173.4 485.3L178.3 485.8L183.2 486.3L188.1 486.8L193 487.3L198 487.8L202.9 488.3L207.9 488.8L212.9 489.4L217.9 489.9L222.9 490.4L228 490.9L233 491.4L238.1 491.9L243.1 492.3L248.2 492.8L253.3 493.6L258.5 494.5L263.6 495.4L268.7 496.3L273.8 497.2L278.9 498.1L284 499L289.2 499.9L294.3 500.8L299.5 501.7L304.7 502.7L309.9 503.6L315.1 504.5L320.3 505.4L325.6 506.3L330.8 507.3L336.1 508.2L341.4 509.1L346.7 510.1L352 511L357.4 512L362.7 512.9L368.1 513.9L373.5 514.8L378.9 515.8L384.3 516.7L389.7 517.7L395.2 518.6L400.6 519.6L406.1 520.4L411.7 521.3L417.4 522.1L423 523L428.7 523.8L434.4 524.7L440.2 525.5L445.9 526.4L451.7 527.2L457.4 528.1L463.2 529L469 529.9L474.8 530.7L480.7 531.6L486.6 532.5L492.4 533.4L498.3 534.2L504.2 535.1L510.2 536L516.1 536.9L522.1 537.8L528 538.6L534 539.4L540.1 540.3L546.1 541.1L552.1 541.9L558.2 542.8L564.3 543.6L570.4 544.4L576.5 545.3L582.7 546.1L588.8 547L595 547.8L601.2 548.7L607.4 549.5L613.6 550.4L619.9 551.2L626.2 552.1L632.5 553L638.8 553.8L645.1 554.6L651.5 555.3L657.8 555.9L664.2 556.6L670.6 557.3L677.1 558L683.5 558.7L690 559.5L696.5 560.2L703 560.9L709.5 561.6L716 562.3L722.6 563L729.2 563.7L735.8 564.4L742.4 565.2L749 565.9L755.7 566.5L762.3 567.1L769 567.8L775.7 568.4L782.5 569L789.2 569.6L796 570.2L802.8 570.9L809.6 571.5L816.4 572.1L823.3 572.8L830.2 573.4L837.1 574L844 574.7L850.9 575.3L857.9 576L864.8 576.6L871.8 577.2L878.8 577.9M137 445.2L154 483.2M142 446.5L158.8 483.7M146.9 447.9L163.7 484.2M151.9 449.2L168.5 484.7M156.9 450.5L173.4 485.3M162 451.8L178.3 485.8M167 453.1L183.2 486.3M172 454.4L188.1 486.8M177.1 455.8L193 487.3M182.2 457.1L198 487.8M187.3 458.4L202.9 488.3M192.4 459.7L207.9 488.8M197.5 461.1L212.9 489.4M202.7 462.4L217.9 489.9M207.8 463.8L222.9 490.4M213 465.1L228 490.9M218.2 466.4L233 491.4M223.4 467.6L238.1 491.9M228.6 468.8L243.1 492.3M233.8 470L248.2 492.8M239 471.2L253.3 493.6M244.3 472.5L258.5 494.5M249.6 473.7L263.6 495.4M254.9 474.9L268.7 496.3M260.2 476.2L273.8 497.2M265.5 477.4L278.9 498.1M270.8 478.6L284 499M276.2 479.9L289.2 499.9M281.6 481L294.3 500.8M287 482.1L299.5 501.7M292.4 483.2L304.7 502.7M297.8 484.4L309.9 503.6M303.2 485.5L315.1 504.5M308.7 486.6L320.3 505.4M314.1 487.8L325.6 506.3M319.6 488.9L330.8 507.3M325.1 490.1L336.1 508.2M330.6 491.2L341.4 509.1M336.1 492.4L346.7 510.1M341.7 493.5L352 511M347.2 494.6L357.4 512M352.8 495.8L362.7 512.9M358.4 496.9L368.1 513.9M364 498L373.5 514.8M369.7 499.1L378.9 515.8M375.3 500.3L384.3 516.7M381 501.4L389.7 517.7M386.6 502.5L395.2 518.6M392.3 503.6L400.6 519.6M398 504.7L406.1 520.4M403.8 505.8L411.7 521.3M409.5 506.9L417.4 522.1M415.3 508L423 523M421 509.1L428.7 523.8M426.8 510.2L434.4 524.7M432.6 511.3L440.2 525.5M438.5 512.4L445.9 526.4M444.3 513.5L451.7 527.2M450.2 514.4L457.4 528.1M456.1 515.4L463.2 529M462 516.4L469 529.9M467.9 517.3L474.8 530.7M473.8 518.3L480.7 531.6M479.7 519.3L486.6 532.5M485.7 520.3L492.4 533.4M491.7 521.2L498.3 534.2M497.7 522.2L504.2 535.1M503.7 523.2L510.2 536M509.7 524.2L516.1 536.9M515.8 525.2L522.1 537.8M521.9 526.1L528 538.6M528 526.8L534 539.4M534.1 527.6L540.1 540.3M540.2 528.3L546.1 541.1M546.3 529.1L552.1 541.9M552.5 529.9L558.2 542.8M558.7 530.6L564.3 543.6M564.9 531.4L570.4 544.4M571.1 532.1L576.5 545.3M577.3 532.9L582.7 546.1M583.6 533.7L588.8 547M589.8 534.5L595 547.8M596.1 535.2L601.2 548.7M602.4 535.8L607.4 549.5M608.8 536.4L613.6 550.4M615.1 537L619.9 551.2M621.5 537.5L626.2 552.1M627.8 538.1L632.5 553M634.2 538.6L638.8 553.8M640.7 539.2L645.1 554.6M647.1 539.7L651.5 555.3M653.6 540.2L657.8 555.9M660 540.7L664.2 556.6M666.5 541.3L670.6 557.3M673 541.8L677.1 558M679.6 542.3L683.5 558.7M686.1 542.9L690 559.5M692.7 543.4L696.5 560.2M699.3 544L703 560.9M705.9 544.6L709.5 561.6M712.5 545.2L716 562.3M719.2 545.8L722.6 563M725.8 546.4L729.2 563.7M732.5 547L735.8 564.4M739.2 547.6L742.4 565.2M745.9 548.2L749 565.9M752.7 548.8L755.7 566.5M759.5 549.3L762.3 567.1M766.2 549.8L769 567.8M773 550.3L775.7 568.4M779.9 550.7L782.5 569M786.7 551.2L789.2 569.6M793.6 551.7L796 570.2M800.5 552.2L802.8 570.9M807.4 552.7L809.6 571.5M814.3 553.2L816.4 572.1M821.2 553.7L823.3 572.8M828.2 554L830.2 573.4M835.2 554.2L837.1 574M842.2 554.5L844 574.7M849.2 554.7L850.9 575.3M856.3 554.9L857.9 576M863.3 555.2L864.8 576.6M870.4 555.4L871.8 577.2M877.5 555.8L878.8 577.9" fill="none" stroke="#000" stroke-width=".95"/>
<polygon points="877.5,555.8 884.7,556.2 891.8,556.5 899,556.9 906.2,557.3 913.4,557.6 920.6,557.8 927.9,558.1 935.2,558.3 942.5,558.6 949.8,558.9 957.1,559.2 964.5,559.5 971.9,559.8 979.3,560.1 986.7,560.4 994.2,560.8 1001.6,561.1 1009.1,561.5 1016.7,561.9 1024.2,562.4 1031.8,562.8 1039.3,563.2 1046.9,563.6 1054.6,564.1 1062.2,564.5 1069.9,564.9 1071.5,565 1070.5,611 1068.9,611 1061.3,610.3 1053.8,609.1 1046.2,608 1038.7,606.9 1031.2,605.7 1023.7,604.6 1016.3,603.5 1008.9,602.3 1001.5,601.2 994.1,599.7 986.7,598.1 979.4,596.5 972,594.9 964.8,593.2 957.5,591.6 950.2,590 943,588.8 935.8,587.6 928.6,586.3 921.4,585.1 914.2,583.9 907.1,582.6 900,581.4 892.9,580.2 885.9,579 878.8,577.9" fill="#3a3af0"/>
<g shape-rendering="crispEdges">
<polygon points="877.5,555.8 879.9,555.9 887.1,556.3 894.2,556.7 901.4,557 908.6,557.4 915.8,557.7 920.6,557.8 920.7,559.4 915.9,559.2 908.6,558.8 901.4,558.4 894.3,558 887.1,557.6 880,557.2 877.6,557" fill="#00f0e0"/>
<polygon points="920.6,557.8 923.1,557.9 930.3,558.2 937.6,558.4 944.9,558.7 952.2,559 959.6,559.3 959.6,561.1 952.3,560.7 944.9,560.4 937.6,560 930.4,559.7 923.1,559.5 920.7,559.4" fill="#00c0ff"/>
<polygon points="959.6,559.3 962,559.4 969.4,559.7 976.8,560 984.2,560.3 986.7,560.4 986.7,562.5 984.2,562.4 976.8,562 969.4,561.6 962.1,561.2 959.6,561.1" fill="#0068ff"/>
<polygon points="986.7,560.4 989.2,560.5 996.7,560.9 1004.1,561.2 1011.6,561.7 1011.6,563.9 1004.1,563.5 996.7,563.1 989.2,562.7 986.7,562.5" fill="#0000ff"/>
<polygon points="1011.6,561.7 1014.1,561.8 1021.7,562.2 1029.2,562.6 1036.8,563.1 1036.8,565.5 1029.2,565 1021.7,564.6 1014.1,564.1 1011.6,563.9" fill="#4040f0"/>
<polygon points="1036.8,563.1 1039.3,563.2 1046.9,563.6 1054.6,564.1 1062.2,564.5 1064.8,564.6 1064.7,567.2 1062.2,567 1054.5,566.6 1046.9,566.1 1039.3,565.6 1036.8,565.5" fill="#8484e4"/>
<polygon points="1064.8,564.6 1067.3,564.8 1069.9,564.9 1070.4,565 1071,565 1071.5,565 1071.4,567.6 1070.9,567.5 1070.4,567.5 1069.8,567.5 1067.3,567.3 1064.7,567.2" fill="#d3d3d3"/>
<polygon points="877.6,557 880,557.2 887.1,557.6 894.3,558 901.4,558.4 908.6,558.8 911,558.9 911.1,560.4 908.7,560.3 901.5,559.8 894.3,559.3 887.2,558.9 880.1,558.4 877.7,558.3" fill="#00f0e0"/>
<polygon points="911,558.9 913.5,559.1 920.7,559.4 927.9,559.6 935.2,559.9 942.5,560.2 949.8,560.6 952.3,560.7 952.3,562.5 949.8,562.3 942.5,561.9 935.2,561.6 928,561.2 920.7,560.9 913.5,560.5 911.1,560.4" fill="#00c0ff"/>
<polygon points="952.3,560.7 954.7,560.9 962.1,561.2 969.4,561.6 976.8,562 979.3,562.1 979.3,564.2 976.8,564 969.4,563.6 962.1,563.1 954.7,562.6 952.3,562.5" fill="#0068ff"/>
<polygon points="979.3,562.1 981.8,562.3 989.2,562.7 996.7,563.1 1004.1,563.5 1009.1,563.8 1009.1,566.1 1004.1,565.7 996.6,565.2 989.2,564.8 981.8,564.3 979.3,564.2" fill="#0000ff"/>
<polygon points="1009.1,563.8 1011.6,563.9 1019.1,564.4 1026.7,564.9 1034.2,565.3 1036.8,565.5 1036.7,567.9 1034.2,567.7 1026.7,567.2 1019.1,566.7 1011.6,566.2 1009.1,566.1" fill="#4040f0"/>
<polygon points="1036.8,565.5 1039.3,565.6 1046.9,566.1 1054.5,566.6 1062.2,567 1062.1,569.6 1054.5,569.1 1046.9,568.6 1039.3,568.1 1036.7,567.9" fill="#8484e4"/>
<polygon points="1062.2,567 1064.7,567.2 1067.3,567.3 1069.8,567.5 1070.4,567.5 1070.9,567.5 1071.4,567.6 1071.4,570.1 1070.9,570.1 1070.3,570.1 1069.8,570.1 1067.2,569.9 1064.7,569.7 1062.1,569.6" fill="#d3d3d3"/>
<polygon points="877.7,558.3 880.1,558.4 887.2,558.9 894.3,559.3 901.5,559.8 901.6,561.2 894.4,560.7 887.3,560.1 880.1,559.6 877.8,559.5" fill="#00f0e0"/>
<polygon points="901.5,559.8 903.9,560 911.1,560.4 918.3,560.8 925.6,561.1 932.8,561.4 940.1,561.8 942.5,561.9 942.6,563.6 940.1,563.5 932.9,563.1 925.6,562.7 918.4,562.3 911.1,561.8 904,561.4 901.6,561.2" fill="#00c0ff"/>
<polygon points="942.5,561.9 945,562.1 952.3,562.5 959.6,562.9 967,563.4 974.4,563.9 976.8,564 976.8,566 974.4,565.8 967,565.3 959.6,564.8 952.3,564.2 945,563.8 942.6,563.6" fill="#0068ff"/>
<polygon points="976.8,564 979.3,564.2 986.7,564.6 994.2,565.1 1001.6,565.6 1006.6,565.9 1006.6,568.1 1001.6,567.8 994.2,567.2 986.7,566.7 979.3,566.2 976.8,566" fill="#0000ff"/>
<polygon points="1006.6,565.9 1009.1,566.1 1016.6,566.6 1024.1,567.1 1031.7,567.6 1034.2,567.7 1034.2,570.1 1031.7,569.9 1024.1,569.4 1016.6,568.9 1009.1,568.3 1006.6,568.1" fill="#4040f0"/>
<polygon points="1034.2,567.7 1036.7,567.9 1044.3,568.4 1051.9,568.9 1059.6,569.4 1062.1,569.6 1062.1,572.1 1059.5,572 1051.9,571.4 1044.3,570.9 1036.7,570.3 1034.2,570.1" fill="#8484e4"/>
<polygon points="1062.1,569.6 1064.7,569.7 1067.2,569.9 1069.8,570.1 1070.3,570.1 1070.9,570.1 1071.4,570.1 1071.3,572.7 1070.8,572.6 1070.3,572.6 1069.7,572.6 1067.2,572.5 1064.6,572.3 1062.1,572.1" fill="#d3d3d3"/>
<polygon points="877.8,559.5 880.1,559.6 887.3,560.1 894.4,560.7 901.6,561.2 908.7,561.7 916,562.1 923.2,562.5 930.4,562.9 932.9,563.1 932.9,564.7 930.5,564.5 923.2,564.1 916,563.6 908.8,563.1 901.6,562.6 894.5,562 887.3,561.4 880.2,560.9 877.8,560.7" fill="#00c0ff"/>
<polygon points="932.9,563.1 935.3,563.2 942.6,563.6 949.9,564.1 957.2,564.6 964.5,565.1 969.5,565.5 969.5,567.4 964.6,567 957.2,566.4 949.9,565.8 942.6,565.3 935.3,564.8 932.9,564.7" fill="#0068ff"/>
<polygon points="969.5,565.5 971.9,565.6 979.3,566.2 986.7,566.7 994.2,567.2 1001.6,567.8 1001.6,570 994.2,569.4 986.7,568.8 979.3,568.2 971.9,567.6 969.5,567.4" fill="#0000ff"/>
<polygon points="1001.6,567.8 1004.1,568 1011.6,568.5 1019.1,569 1026.6,569.6 1031.7,569.9 1031.6,572.3 1026.6,571.9 1019.1,571.4 1011.6,570.8 1004.1,570.2 1001.6,570" fill="#4040f0"/>
<polygon points="1031.7,569.9 1034.2,570.1 1041.8,570.7 1049.4,571.2 1057,571.8 1059.5,572 1059.5,574.5 1056.9,574.3 1049.3,573.7 1041.7,573.1 1034.2,572.5 1031.6,572.3" fill="#8484e4"/>
<polygon points="1059.5,572 1062.1,572.1 1069.7,572.6 1071.3,572.7 1071.3,575.2 1069.7,575.2 1062,574.7 1059.5,574.5" fill="#d3d3d3"/>
<polygon points="877.8,560.7 880.2,560.9 887.3,561.4 894.5,562 901.6,562.6 908.8,563.1 916,563.6 920.8,563.9 920.9,565.4 916,565.1 908.8,564.5 901.7,563.9 894.5,563.3 887.4,562.7 880.3,562.1 877.9,561.9" fill="#00c0ff"/>
<polygon points="920.8,563.9 923.2,564.1 930.5,564.5 937.7,565 945,565.5 952.3,566 959.7,566.6 964.6,567 964.6,568.9 959.7,568.4 952.4,567.8 945,567.2 937.8,566.6 930.5,566.1 923.3,565.6 920.9,565.4" fill="#0068ff"/>
<polygon points="964.6,567 967,567.2 974.4,567.8 981.8,568.4 989.2,569 996.6,569.6 996.6,571.8 989.2,571.1 981.8,570.4 974.4,569.8 967,569.1 964.6,568.9" fill="#0000ff"/>
<polygon points="996.6,569.6 999.1,569.8 1006.6,570.4 1014.1,571 1021.6,571.6 1026.6,571.9 1026.6,574.3 1021.6,573.9 1014.1,573.3 1006.6,572.7 999.1,572 996.6,571.8" fill="#4040f0"/>
<polygon points="1026.6,571.9 1029.1,572.1 1036.7,572.7 1044.3,573.3 1051.9,573.9 1059.5,574.5 1059.4,577 1051.8,576.4 1044.2,575.8 1036.6,575.1 1029.1,574.5 1026.6,574.3" fill="#8484e4"/>
<polygon points="1059.5,574.5 1062,574.7 1069.7,575.2 1071.3,575.2 1071.2,577.8 1069.6,577.7 1062,577.2 1059.4,577" fill="#d3d3d3"/>
<polygon points="877.9,561.9 880.3,562.1 887.4,562.7 894.5,563.3 901.7,563.9 908.8,564.5 908.9,566 901.7,565.3 894.6,564.7 887.4,564 880.3,563.4 878,563.2" fill="#00c0ff"/>
<polygon points="908.8,564.5 911.2,564.7 918.4,565.2 925.7,565.8 932.9,566.3 940.2,566.8 947.5,567.3 954.8,568 957.2,568.2 957.2,570 954.8,569.8 947.5,569.1 940.2,568.4 933,567.9 925.7,567.3 918.5,566.7 911.3,566.2 908.9,566" fill="#0068ff"/>
<polygon points="957.2,568.2 959.7,568.4 967,569.1 974.4,569.8 981.8,570.4 989.2,571.1 991.7,571.3 991.7,573.5 989.2,573.2 981.8,572.5 974.4,571.7 967,571 959.7,570.3 957.2,570" fill="#0000ff"/>
<polygon points="991.7,571.3 994.1,571.6 1001.6,572.2 1009.1,572.9 1016.6,573.5 1024.1,574.1 1024,576.4 1016.5,575.8 1009,575.1 1001.6,574.5 994.1,573.7 991.7,573.5" fill="#4040f0"/>
<polygon points="1024.1,574.1 1026.6,574.3 1034.1,574.9 1041.7,575.5 1049.3,576.2 1056.9,576.8 1056.8,579.3 1049.2,578.7 1041.7,578 1034.1,577.3 1026.6,576.7 1024,576.4" fill="#8484e4"/>
<polygon points="1056.9,576.8 1059.4,577 1067.1,577.6 1070.7,577.8 1071.2,577.8 1071.2,580.3 1070.6,580.3 1067,580.1 1059.4,579.5 1056.8,579.3" fill="#d3d3d3"/>
<polygon points="878,563.2 880.3,563.4 887.4,564 894.6,564.7 897,564.9 897,566.2 894.6,566 887.5,565.3 880.4,564.6 878,564.4" fill="#00c0ff"/>
<polygon points="897,564.9 899.3,565.1 906.5,565.7 913.7,566.4 920.9,566.9 928.1,567.5 935.4,568.1 942.6,568.6 947.5,569.1 947.5,570.8 942.7,570.3 935.4,569.7 928.2,569.1 920.9,568.4 913.7,567.8 906.6,567.2 899.4,566.5 897,566.2" fill="#0068ff"/>
<polygon points="947.5,569.1 949.9,569.3 957.2,570 964.6,570.7 971.9,571.5 979.3,572.2 984.3,572.7 984.3,574.8 979.3,574.3 971.9,573.4 964.6,572.6 957.3,571.8 950,571 947.5,570.8" fill="#0000ff"/>
<polygon points="984.3,572.7 986.7,573 994.1,573.7 1001.6,574.5 1009,575.1 1016.5,575.8 1021.5,576.2 1021.5,578.6 1016.5,578.1 1009,577.4 1001.6,576.7 994.1,575.9 986.7,575.1 984.3,574.8" fill="#4040f0"/>
<polygon points="1021.5,576.2 1024,576.4 1031.6,577.1 1039.1,577.8 1046.7,578.4 1054.3,579.1 1054.3,581.6 1046.7,580.9 1039.1,580.2 1031.5,579.5 1024,578.8 1021.5,578.6" fill="#8484e4"/>
<polygon points="1054.3,579.1 1056.8,579.3 1064.5,579.9 1070.1,580.3 1071.2,580.3 1071.1,582.9 1070,582.9 1064.4,582.5 1056.8,581.8 1054.3,581.6" fill="#d3d3d3"/>
<polygon points="878,564.4 880.4,564.6 887.5,565.3 894.6,566 901.8,566.7 908.9,567.4 916.1,568 923.3,568.6 930.6,569.3 935.4,569.7 935.4,571.3 930.6,570.9 923.4,570.2 916.2,569.5 909,568.8 901.8,568.1 894.7,567.3 887.6,566.6 880.5,565.9 878.1,565.6" fill="#0068ff"/>
<polygon points="935.4,569.7 937.8,569.9 945.1,570.5 952.4,571.3 959.7,572.1 967,572.9 974.4,573.7 976.9,574 976.9,576 974.4,575.7 967.1,574.8 959.7,573.9 952.4,573 945.1,572.2 937.9,571.5 935.4,571.3" fill="#0000ff"/>
<polygon points="976.9,574 979.3,574.3 986.7,575.1 994.1,575.9 1001.6,576.7 1009,577.4 1016.5,578.1 1016.5,580.4 1009,579.7 1001.6,578.9 994.1,578.1 986.7,577.2 979.3,576.3 976.9,576" fill="#4040f0"/>
<polygon points="1016.5,578.1 1019,578.3 1026.5,579 1034.1,579.7 1041.6,580.4 1049.2,581.1 1054.3,581.6 1054.2,584.1 1049.2,583.6 1041.6,582.9 1034,582.1 1026.5,581.4 1019,580.6 1016.5,580.4" fill="#8484e4"/>
<polygon points="1054.3,581.6 1056.8,581.8 1064.4,582.5 1070,582.9 1071.1,582.9 1071.1,585.4 1070,585.4 1064.4,585 1056.7,584.4 1054.2,584.1" fill="#d3d3d3"/>
<polygon points="878.1,565.6 880.5,565.9 887.6,566.6 894.7,567.3 901.8,568.1 909,568.8 916.2,569.5 921,570 921,571.5 916.2,571 909,570.2 901.9,569.4 894.8,568.6 887.6,567.9 880.6,567.1 878.2,566.8" fill="#0068ff"/>
<polygon points="921,570 923.4,570.2 930.6,570.9 937.9,571.5 945.1,572.2 952.4,573 959.7,573.9 967.1,574.8 972,575.4 972,577.3 967.1,576.7 959.7,575.7 952.4,574.8 945.2,573.9 937.9,573.2 930.6,572.4 923.4,571.7 921,571.5" fill="#0000ff"/>
<polygon points="972,575.4 974.4,575.7 981.8,576.6 989.2,577.5 996.6,578.4 1004,579.2 1011.5,579.9 1011.5,582.2 1004,581.4 996.6,580.5 989.2,579.6 981.8,578.6 974.4,577.7 972,577.3" fill="#4040f0"/>
<polygon points="1011.5,579.9 1014,580.2 1021.5,580.9 1029,581.6 1036.5,582.4 1044.1,583.1 1051.7,583.9 1051.6,586.3 1044.1,585.6 1036.5,584.8 1029,584 1021.5,583.2 1014,582.4 1011.5,582.2" fill="#8484e4"/>
<polygon points="1051.7,583.9 1054.2,584.1 1061.8,584.9 1069.5,585.4 1071.1,585.4 1071,588 1069.4,588 1061.8,587.4 1054.2,586.6 1051.6,586.3" fill="#d3d3d3"/>
<polygon points="878.2,566.8 880.6,567.1 887.6,567.9 894.8,568.6 901.9,569.4 909,570.2 909.1,571.7 901.9,570.8 894.8,570 887.7,569.1 880.6,568.3 878.3,568.1" fill="#0068ff"/>
<polygon points="909,570.2 911.4,570.5 918.6,571.2 925.8,572 933.1,572.7 940.3,573.4 947.6,574.2 954.9,575.1 962.2,576.1 962.2,577.9 954.9,576.9 947.6,575.9 940.3,575.1 933.1,574.3 925.9,573.5 918.7,572.7 911.5,571.9 909.1,571.7" fill="#0000ff"/>
<polygon points="962.2,576.1 964.6,576.4 972,577.3 979.3,578.3 986.7,579.3 994.1,580.2 1001.6,581.2 1006.5,581.7 1006.5,583.9 1001.5,583.4 994.1,582.4 986.7,581.3 979.3,580.3 972,579.3 964.6,578.2 962.2,577.9" fill="#4040f0"/>
<polygon points="1006.5,581.7 1009,581.9 1016.5,582.7 1024,583.5 1031.5,584.3 1039,585 1046.6,585.8 1049.1,586.1 1049.1,588.6 1046.5,588.3 1039,587.5 1031.5,586.6 1023.9,585.8 1016.5,585 1009,584.2 1006.5,583.9" fill="#8484e4"/>
<polygon points="1049.1,586.1 1051.6,586.3 1059.2,587.1 1066.9,587.8 1070.5,588 1071,588 1070.9,590.6 1070.4,590.5 1066.8,590.3 1059.2,589.7 1051.6,588.8 1049.1,588.6" fill="#d3d3d3"/>
<polygon points="878.3,568.1 880.6,568.3 883,568.6 885.3,568.9 887.7,569.1 887.8,570.4 885.4,570.1 883.1,569.9 880.7,569.6 878.3,569.3" fill="#0068ff"/>
<polygon points="887.7,569.1 890.1,569.4 897.2,570.3 904.3,571.1 911.5,571.9 918.7,572.7 925.9,573.5 933.1,574.3 940.3,575.1 947.6,575.9 952.5,576.5 952.5,578.3 947.6,577.6 940.4,576.8 933.1,575.9 925.9,575.1 918.7,574.2 911.5,573.4 904.4,572.5 897.2,571.6 890.1,570.7 887.8,570.4" fill="#0000ff"/>
<polygon points="952.5,576.5 954.9,576.9 962.2,577.9 969.5,578.9 976.9,580 984.3,581 991.7,582 999.1,583.1 999.1,585.3 991.6,584.2 984.3,583.1 976.9,582 969.5,580.9 962.2,579.8 954.9,578.7 952.5,578.3" fill="#4040f0"/>
<polygon points="999.1,583.1 1001.5,583.4 1009,584.2 1016.5,585 1023.9,585.8 1031.5,586.6 1039,587.5 1046.5,588.3 1046.5,590.8 1039,589.9 1031.4,589 1023.9,588.2 1016.4,587.3 1009,586.5 1001.5,585.6 999.1,585.3" fill="#8484e4"/>
<polygon points="1046.5,588.3 1049.1,588.6 1056.7,589.4 1064.3,590.1 1069.9,590.5 1070.9,590.6 1070.9,593.1 1069.8,593.1 1064.2,592.7 1056.6,591.9 1049,591 1046.5,590.8" fill="#d3d3d3"/>
<polygon points="878.3,569.3 880.7,569.6 887.8,570.4 894.9,571.3 902,572.2 909.1,573.1 916.3,573.9 923.5,574.8 930.7,575.6 938,576.5 938,578.1 930.8,577.2 923.5,576.3 916.4,575.4 909.2,574.5 902.1,573.6 894.9,572.6 887.8,571.7 880.8,570.8 878.4,570.5" fill="#0000ff"/>
<polygon points="938,576.5 940.4,576.8 947.6,577.6 954.9,578.7 962.2,579.8 969.5,580.9 976.9,582 984.3,583.1 991.6,584.2 991.6,586.3 984.3,585.1 976.9,584 969.6,582.8 962.2,581.6 954.9,580.4 947.7,579.3 940.4,578.4 938,578.1" fill="#4040f0"/>
<polygon points="991.6,584.2 994.1,584.6 1001.5,585.6 1009,586.5 1016.4,587.3 1023.9,588.2 1031.4,589 1039,589.9 1041.5,590.2 1041.4,592.6 1038.9,592.3 1031.4,591.4 1023.9,590.5 1016.4,589.6 1009,588.7 1001.5,587.8 994.1,586.7 991.6,586.3" fill="#8484e4"/>
<polygon points="1041.5,590.2 1044,590.5 1051.6,591.3 1059.1,592.2 1066.7,592.9 1070.4,593.1 1070.9,593.1 1070.8,595.7 1070.3,595.7 1066.7,595.4 1059.1,594.7 1051.5,593.8 1044,592.9 1041.4,592.6" fill="#d3d3d3"/>
<polygon points="878.4,570.5 880.8,570.8 887.8,571.7 894.9,572.6 902.1,573.6 909.2,574.5 916.4,575.4 923.5,576.3 923.6,577.8 916.4,576.9 909.2,575.9 902.1,575 895,574 887.9,573 880.8,572.1 878.5,571.8" fill="#0000ff"/>
<polygon points="923.5,576.3 925.9,576.6 933.2,577.5 940.4,578.4 947.7,579.3 954.9,580.4 962.2,581.6 969.6,582.8 976.9,584 981.8,584.7 981.8,586.8 976.9,586 969.6,584.7 962.2,583.5 955,582.2 947.7,581.1 940.4,580.1 933.2,579.1 926,578.2 923.6,577.8" fill="#4040f0"/>
<polygon points="981.8,584.7 984.3,585.1 991.6,586.3 999.1,587.5 1006.5,588.4 1013.9,589.3 1021.4,590.2 1028.9,591.1 1036.4,592 1038.9,592.3 1038.9,594.7 1036.4,594.4 1028.9,593.5 1021.4,592.6 1013.9,591.6 1006.5,590.7 999,589.7 991.6,588.5 984.3,587.2 981.8,586.8" fill="#8484e4"/>
<polygon points="1038.9,592.3 1041.4,592.6 1049,593.5 1056.6,594.4 1064.2,595.2 1069.8,595.7 1070.8,595.7 1070.8,598.2 1069.7,598.2 1064.1,597.8 1056.5,596.9 1048.9,596 1041.4,595.1 1038.9,594.7" fill="#d3d3d3"/>
<polygon points="878.5,571.8 880.8,572.1 887.9,573 895,574 902.1,575 906.9,575.6 906.9,577 902.2,576.3 895.1,575.3 888,574.3 880.9,573.3 878.6,573" fill="#0000ff"/>
<polygon points="906.9,575.6 909.2,575.9 916.4,576.9 923.6,577.8 930.8,578.8 938,579.8 945.3,580.7 952.5,581.8 959.8,583 967.1,584.3 972,585.1 972,587.1 967.1,586.2 959.8,584.9 952.5,583.6 945.3,582.4 938,581.4 930.8,580.4 923.6,579.4 916.5,578.4 909.3,577.4 906.9,577" fill="#4040f0"/>
<polygon points="972,585.1 974.5,585.5 981.8,586.8 989.2,588 996.6,589.3 1004,590.4 1011.4,591.3 1018.9,592.2 1026.4,593.2 1033.9,594.1 1033.8,596.5 1026.3,595.5 1018.9,594.6 1011.4,593.6 1004,592.6 996.6,591.5 989.2,590.2 981.8,588.8 974.5,587.5 972,587.1" fill="#8484e4"/>
<polygon points="1033.9,594.1 1036.4,594.4 1043.9,595.4 1051.5,596.3 1059,597.3 1066.6,598 1070.2,598.2 1070.8,598.2 1070.7,600.8 1070.2,600.8 1066.6,600.5 1059,599.8 1051.4,598.8 1043.9,597.8 1036.3,596.8 1033.8,596.5" fill="#d3d3d3"/>
<polygon points="878.6,573 880.9,573.3 881,574.5 878.6,574.2" fill="#0000ff"/>
<polygon points="880.9,573.3 883.3,573.6 890.3,574.6 897.4,575.6 904.5,576.7 911.7,577.7 918.8,578.7 926,579.7 933.2,580.7 940.5,581.7 947.7,582.8 955,584 959.8,584.9 959.8,586.7 955,585.8 947.7,584.5 940.5,583.4 933.3,582.3 926.1,581.3 918.9,580.2 911.7,579.1 904.6,578.1 897.5,577 890.4,575.9 883.3,574.9 881,574.5" fill="#4040f0"/>
<polygon points="959.8,584.9 962.3,585.3 969.6,586.6 976.9,587.9 984.3,589.3 991.6,590.6 999,591.9 1006.5,592.9 1013.9,593.9 1021.4,594.9 1026.3,595.5 1026.3,597.9 1021.3,597.2 1013.9,596.2 1006.4,595.2 999,594.1 991.6,592.7 984.3,591.3 976.9,589.9 969.6,588.5 962.3,587.2 959.8,586.7" fill="#8484e4"/>
<polygon points="1026.3,595.5 1028.8,595.9 1036.3,596.8 1043.9,597.8 1051.4,598.8 1059,599.8 1066.6,600.5 1070.2,600.8 1070.7,600.8 1070.7,603.3 1070.1,603.3 1066.5,603.1 1058.9,602.3 1051.4,601.3 1043.8,600.3 1036.3,599.3 1028.8,598.2 1026.3,597.9" fill="#d3d3d3"/>
<polygon points="878.6,574.2 881,574.5 888,575.6 895.1,576.6 902.2,577.7 909.3,578.8 916.5,579.8 923.7,580.9 930.9,582 938.1,583 942.9,583.8 942.9,585.4 938.1,584.7 930.9,583.6 923.7,582.4 916.5,581.3 909.4,580.2 902.3,579.1 895.2,578 888.1,576.8 881,575.8 878.7,575.4" fill="#4040f0"/>
<polygon points="942.9,583.8 945.3,584.1 952.6,585.3 959.8,586.7 967.1,588.1 974.5,589.5 981.8,590.9 989.2,592.3 996.6,593.6 1004,594.9 1011.4,595.9 1018.8,596.9 1018.8,599.2 1011.4,598.2 1004,597.1 996.6,595.8 989.2,594.4 981.8,592.9 974.5,591.4 967.2,590 959.9,588.5 952.6,587.1 945.3,585.8 942.9,585.4" fill="#8484e4"/>
<polygon points="1018.8,596.9 1021.3,597.2 1028.8,598.2 1036.3,599.3 1043.8,600.3 1051.4,601.3 1058.9,602.3 1066.5,603.1 1070.1,603.3 1070.7,603.3 1070.6,605.9 1070.1,605.9 1066.5,605.7 1058.9,604.8 1051.3,603.8 1043.8,602.7 1036.3,601.7 1028.8,600.6 1021.3,599.6 1018.8,599.2" fill="#d3d3d3"/>
<polygon points="878.7,575.4 881,575.8 888.1,576.8 895.2,578 902.3,579.1 909.4,580.2 916.5,581.3 923.7,582.4 923.8,584 916.6,582.8 909.4,581.6 902.3,580.5 895.2,579.3 888.2,578.1 881.1,577 878.8,576.7" fill="#4040f0"/>
<polygon points="923.7,582.4 926.1,582.8 933.3,583.9 940.5,585.1 947.8,586.2 955,587.6 962.3,589 969.6,590.5 976.9,591.9 984.3,593.4 991.6,594.9 999,596.3 1006.4,597.5 1006.4,599.7 999,598.5 991.6,597 984.3,595.5 976.9,593.9 969.6,592.4 962.3,590.9 955,589.3 947.8,587.9 940.5,586.7 933.3,585.5 926.1,584.4 923.8,584" fill="#8484e4"/>
<polygon points="1006.4,597.5 1008.9,597.8 1016.3,598.9 1023.8,599.9 1031.3,601 1038.8,602 1046.3,603.1 1053.9,604.1 1061.4,605.2 1069,605.9 1070.6,605.9 1070.6,608.4 1069,608.4 1061.4,607.7 1053.8,606.6 1046.3,605.5 1038.7,604.4 1031.2,603.3 1023.8,602.3 1016.3,601.2 1008.9,600.1 1006.4,599.7" fill="#d3d3d3"/>
<polygon points="878.8,576.7 881.1,577 888.2,578.1 895.2,579.3 902.3,580.5 902.4,581.8 895.3,580.6 888.2,579.4 881.2,578.3 878.8,577.9" fill="#4040f0"/>
<polygon points="902.3,580.5 904.7,580.8 911.8,582 919,583.2 926.1,584.4 933.3,585.5 940.5,586.7 947.8,587.9 955,589.3 962.3,590.9 969.6,592.4 976.9,593.9 984.3,595.5 991.6,597 991.6,599.2 984.3,597.5 976.9,595.9 969.6,594.3 962.3,592.7 955.1,591.1 947.8,589.6 940.6,588.4 933.4,587.1 926.2,585.9 919,584.7 911.9,583.5 904.7,582.2 902.4,581.8" fill="#8484e4"/>
<polygon points="991.6,597 994.1,597.5 1001.5,599 1008.9,600.1 1016.3,601.2 1023.8,602.3 1031.2,603.3 1038.7,604.4 1046.3,605.5 1053.8,606.6 1061.4,607.7 1069,608.4 1070.6,608.4 1070.5,611 1068.9,611 1061.3,610.3 1053.8,609.1 1046.2,608 1038.7,606.9 1031.2,605.7 1023.7,604.6 1016.3,603.5 1008.9,602.3 1001.5,601.2 994.1,599.7 991.6,599.2" fill="#d3d3d3"/>
</g>
<path d="M877.5 555.8L884.7 556.2L891.8 556.5L899 556.9L906.2 557.3L913.4 557.6L920.6 557.8L927.9 558.1L935.2 558.3L942.5 558.6L949.8 558.9L957.1 559.2L964.5 559.5L971.9 559.8L979.3 560.1L986.7 560.4L994.2 560.8L1001.6 561.1L1009.1 561.5L1016.7 561.9L1024.2 562.4L1031.8 562.8L1039.3 563.2L1046.9 563.6L1054.6 564.1L1062.2 564.5L1069.9 564.9L1071.5 565M877.8 559.5L884.9 560L892 560.5L899.2 561L906.3 561.5L913.5 562L920.8 562.4L928 562.8L935.3 563.2L942.6 563.6L949.9 564.1L957.2 564.6L964.5 565.1L971.9 565.6L979.3 566.2L986.7 566.7L994.2 567.2L1001.6 567.8L1009.1 568.3L1016.6 568.9L1024.1 569.4L1031.7 569.9L1039.2 570.5L1046.8 571L1054.4 571.6L1062.1 572.1L1069.7 572.6L1071.3 572.7M878 563.2L885.1 563.8L892.2 564.4L899.3 565.1L906.5 565.7L913.7 566.4L920.9 566.9L928.1 567.5L935.4 568.1L942.6 568.6L949.9 569.3L957.2 570L964.6 570.7L971.9 571.5L979.3 572.2L986.7 573L994.1 573.7L1001.6 574.5L1009 575.1L1016.5 575.8L1024 576.4L1031.6 577.1L1039.1 577.8L1046.7 578.4L1054.3 579.1L1061.9 579.8L1069.6 580.3L1071.2 580.3M878.2 566.8L885.3 567.6L892.4 568.4L899.5 569.2L906.7 570L913.8 570.7L921 571.5L928.2 572.2L935.5 572.9L942.7 573.7L950 574.5L957.3 575.4L964.6 576.4L972 577.3L979.3 578.3L986.7 579.3L994.1 580.2L1001.6 581.2L1009 581.9L1016.5 582.7L1024 583.5L1031.5 584.3L1039 585L1046.6 585.8L1054.2 586.6L1061.8 587.4L1069.4 588L1071 588M878.4 570.5L885.5 571.4L892.6 572.3L899.7 573.3L906.8 574.2L914 575.1L921.1 576L928.3 576.9L935.6 577.8L942.8 578.7L950.1 579.7L957.4 580.8L964.7 582L972 583.2L979.3 584.3L986.7 585.5L994.1 586.7L1001.5 587.8L1009 588.7L1016.4 589.6L1023.9 590.5L1031.4 591.4L1038.9 592.3L1046.5 593.2L1054 594.1L1061.6 595L1069.2 595.6L1070.8 595.7M878.6 574.2L885.7 575.2L892.7 576.3L899.8 577.3L907 578.4L914.1 579.5L921.3 580.6L928.5 581.6L935.7 582.7L942.9 583.8L950.1 584.9L957.4 586.2L964.7 587.6L972 589L979.4 590.4L986.7 591.8L994.1 593.2L1001.5 594.5L1008.9 595.5L1016.4 596.5L1023.8 597.6L1031.3 598.6L1038.8 599.6L1046.3 600.6L1053.9 601.6L1061.5 602.7L1069.1 603.3L1070.7 603.3M878.8 577.9L885.9 579L892.9 580.2L900 581.4L907.1 582.6L914.2 583.9L921.4 585.1L928.6 586.3L935.8 587.6L943 588.8L950.2 590L957.5 591.6L964.8 593.2L972 594.9L979.4 596.5L986.7 598.1L994.1 599.7L1001.5 601.2L1008.9 602.3L1016.3 603.5L1023.7 604.6L1031.2 605.7L1038.7 606.9L1046.2 608L1053.8 609.1L1061.3 610.3L1068.9 611L1070.5 611M877.5 555.8L878.8 577.9M884.7 556.2L885.9 579M891.8 556.5L892.9 580.2M899 556.9L900 581.4M906.2 557.3L907.1 582.6M913.4 557.6L914.2 583.9M920.6 557.8L921.4 585.1M927.9 558.1L928.6 586.3M935.2 558.3L935.8 587.6M942.5 558.6L943 588.8M949.8 558.9L950.2 590M957.1 559.2L957.5 591.6M964.5 559.5L964.8 593.2M971.9 559.8L972 594.9M979.3 560.1L979.4 596.5M986.7 560.4L986.7 598.1M994.2 560.8L994.1 599.7M1001.6 561.1L1001.5 601.2M1009.1 561.5L1008.9 602.3M1016.7 561.9L1016.3 603.5M1024.2 562.4L1023.7 604.6M1031.8 562.8L1031.2 605.7M1039.3 563.2L1038.7 606.9M1046.9 563.6L1046.2 608M1054.6 564.1L1053.8 609.1M1062.2 564.5L1061.3 610.3M1069.9 564.9L1068.9 611M1071.5 565L1070.5 611" fill="none" stroke="#000" stroke-width=".95"/>
<polygon points="214.9,466 234.8,469.4 244,478.9 242.9,487.7 224.6,486.6 214.9,473.5" fill="#fff" stroke="#000" stroke-width=".7"/>
<polygon points="276.1,479.6 297.8,483.6 306.8,489.7 306.8,495.8 286.9,494.2 276.8,483.6" fill="#fff" stroke="#000" stroke-width=".7"/>
<polygon points="340.4,493.8 363.4,497.9 374.3,501.2 374.3,503.3 349.2,501.2 341.8,495.2" fill="#fff" stroke="#000" stroke-width=".7"/>
<polygon points="414,509.5 445,513.6 445,523 425,520" fill="#0000ff" stroke="#000" stroke-width=".7"/>
<polygon points="410.5,506.9 443,512 445,513.6 414,509.5" fill="#fff" stroke="#000" stroke-width=".7"/>
<polygon points="488,520.5 519.5,526 519.5,531.5 497,528" fill="#0068ff" stroke="#000" stroke-width=".7"/>
<polygon points="563,530 598,535.5 598,541 575,538.5" fill="#0068ff" stroke="#000" stroke-width=".7"/>
<polygon points="645.7,541.6 680.2,545 678,554 655,551" fill="#0068ff" stroke="#000" stroke-width=".7"/>
<polygon points="640.3,538.2 679.6,542.3 680.2,545 645.7,541.6" fill="#fff" stroke="#000" stroke-width=".7"/>
<polygon points="732.4,553.8 763.5,557.9 762.2,562.6 739.2,561.2" fill="#0000ff" stroke="#000" stroke-width=".7"/>
<polygon points="725,546 762.9,549 766.9,553.8 763.5,557.9 732.4,553.8" fill="#fff" stroke="#000" stroke-width=".7"/>
<polygon points="820.4,565.3 850.9,569.6 848,573 826,570" fill="#4040f0" stroke="#000" stroke-width=".7"/>
<polygon points="817.7,552.4 850.2,554.2 857,562.3 850.9,569.6 820.4,565.3 813,557.9" fill="#fff" stroke="#000" stroke-width=".7"/>
<polygon points="911.5,558.2 941.9,558.9 950,571.1 941.2,582.9 912.1,578.5 904,567" fill="#fff" stroke="#000" stroke-width=".7"/>
<g>
<polygon points="166.9,440.7 171.7,441.4 176.6,442.1 181.5,442.8 186.4,443.5 182.8,446.3 177.9,445.4 173,444.5 168,443.7 163.1,442.8" fill="#4040f0"/>
<polygon points="186.4,443.5 191.3,444.2 196.3,444.9 192.8,448 187.8,447.1 182.8,446.3" fill="#0000ff"/>
<polygon points="196.3,444.9 201.2,445.7 206.2,446.4 211.2,447.1 216.2,447.8 212.8,451.5 207.8,450.6 202.7,449.7 197.7,448.8 192.8,448" fill="#0068ff"/>
<polygon points="216.2,447.8 221.2,448.5 226.2,449.3 222.9,453.2 217.8,452.3 212.8,451.5" fill="#00c0ff"/>
<polygon points="226.2,449.3 231.3,450 236.3,450.7 241.4,451.4 246.5,452.2 243.3,456.6 238.2,455.8 233.1,454.9 228,454.1 222.9,453.2" fill="#00f0e0"/>
<polygon points="246.5,452.2 251.6,452.9 256.7,453.6 253.6,458.3 248.4,457.5 243.3,456.6" fill="#00b88c"/>
<polygon points="256.7,453.6 261.8,454.4 266.9,455.1 272.1,455.9 269.1,460.9 263.9,460.1 258.7,459.2 253.6,458.3" fill="#008038"/>
<polygon points="272.1,455.9 277.3,456.6 282.5,457.4 279.6,462.7 274.3,461.8 269.1,460.9" fill="#207800"/>
<polygon points="282.5,457.4 287.7,458.3 292.9,459.2 298.1,460 295.3,465.5 290.1,464.6 284.8,463.7 279.6,462.7" fill="#80b000"/>
<polygon points="298.1,460 303.4,460.9 308.6,461.8 305.9,467.4 300.6,466.5 295.3,465.5" fill="#d8e800"/>
<polygon points="308.6,461.8 313.9,462.7 319.2,463.5 324.5,464.4 329.8,465.3 327.3,471.2 321.9,470.3 316.6,469.3 311.2,468.4 305.9,467.4" fill="#ffee00"/>
<polygon points="329.8,465.3 335.2,466.2 340.6,467.1 345.9,468 343.5,474.1 338.1,473.1 332.7,472.2 327.3,471.2" fill="#ffc800"/>
<polygon points="345.9,468 351.3,468.9 356.7,469.8 362.1,470.7 367.6,471.6 365.3,477.9 359.8,477 354.4,476 348.9,475.1 343.5,474.1" fill="#ffa800"/>
<polygon points="367.6,471.6 373,472.5 378.5,473.4 384,474.3 381.8,480.8 376.3,479.9 370.8,478.9 365.3,477.9" fill="#ff7800"/>
<polygon points="384,474.3 389.5,475.1 395,476 400.5,476.8 406.1,477.6 404.1,484.4 398.5,483.5 392.9,482.6 387.4,481.7 381.8,480.8" fill="#ff4000"/>
<polygon points="406.1,477.6 411.7,478.5 417.3,479.3 422.9,480.2 428.5,481 434.2,481.9 439.9,482.7 445.6,483.6 451.3,484.4 457,485.3 462.7,486.2 468.5,487 474.3,487.9 472.7,495.3 466.9,494.4 461.1,493.5 455.3,492.6 449.5,491.7 443.8,490.8 438.1,489.9 432.4,488.9 426.7,488 421,487.1 415.3,486.2 409.7,485.3 404.1,484.4" fill="#ff0800"/>
<polygon points="474.3,487.9 480.1,488.8 485.9,489.7 491.7,490.5 497.5,491.4 503.4,492.3 509.3,493.2 515.2,493.9 521.1,494.6 527.1,495.4 533.1,496.1 539.1,496.8 545.2,497.5 551.2,498.2 557.3,499 563.4,499.7 569.5,500.4 575.6,501.2 581.8,501.9 587.9,502.7 594.1,503.4 600.3,504.1 606.5,504.9 612.8,505.6 619,506.4 618,514 611.8,513.3 605.5,512.6 599.3,511.9 593,511.2 586.8,510.4 580.7,509.7 574.5,508.9 568.3,508.2 562.2,507.4 556.1,506.7 550,506 543.9,505.2 537.9,504.5 531.8,503.8 525.8,503 519.8,502.3 513.8,501.5 507.9,500.7 502,499.8 496.1,498.9 490.2,498 484.3,497.1 478.5,496.2 472.7,495.3" fill="#dd0000"/>
<polygon points="619,506.4 625.3,507.1 631.6,507.9 637.9,508.6 644.2,509.3 650.6,510 656.9,510.7 663.3,511.4 669.7,512.1 676.1,512.7 682.6,513.4 689,514.1 695.5,514.8 694.8,522 688.3,521.3 681.8,520.7 675.4,520 668.9,519.4 662.5,518.7 656.1,518.1 649.7,517.4 643.3,516.8 637,516.1 630.6,515.4 624.3,514.7 618,514" fill="#ff0800"/>
<polygon points="695.5,514.8 702,515.5 708.5,516.2 715,516.9 721.6,517.6 728.2,518.3 727.6,525.3 721,524.6 714.4,524 707.9,523.3 701.3,522.6 694.8,522" fill="#ff4000"/>
<polygon points="728.2,518.3 734.8,519 741.4,519.7 748,520.4 754.7,521.1 754.2,528 747.5,527.3 740.8,526.7 734.2,526 727.6,525.3" fill="#ff7800"/>
<polygon points="754.7,521.1 761.4,521.8 768.1,522.5 774.8,523.2 781.6,523.9 781.1,530.6 774.4,530 767.6,529.3 760.9,528.7 754.2,528" fill="#ffa800"/>
<polygon points="781.6,523.9 788.4,524.6 795.1,525.3 802,526 801.6,532.6 794.8,531.9 787.9,531.3 781.1,530.6" fill="#ffc800"/>
<polygon points="802,526 808.8,526.8 815.7,527.5 822.5,528.2 822.2,534.6 815.3,533.9 808.4,533.2 801.6,532.6" fill="#ffee00"/>
<polygon points="822.5,528.2 829.4,528.9 836.3,529.6 843.3,530.4 850.2,531.1 850,537 843,536.4 836.1,535.8 829.1,535.2 822.2,534.6" fill="#d8e800"/>
<polygon points="850.2,531.1 857.2,531.8 864.2,532.5 871.2,533.3 871,538.8 864,538.2 857,537.6 850,537" fill="#80b000"/>
<polygon points="871.2,533.3 878.3,534 885.3,534.7 892.4,535.4 892.3,540.7 885.2,540.1 878.1,539.5 871,538.8" fill="#207800"/>
<polygon points="892.4,535.4 899.5,536 906.6,536.7 913.8,537.3 913.7,542.4 906.5,541.8 899.4,541.2 892.3,540.7" fill="#008038"/>
<polygon points="913.8,537.3 920.9,538 928.1,538.7 935.3,539.3 942.5,540 942.5,544.7 935.3,544.1 928.1,543.5 920.9,543 913.7,542.4" fill="#00b88c"/>
<polygon points="942.5,540 949.8,540.7 957.1,541.4 964.4,542 964.4,546.4 957.1,545.8 949.8,545.2 942.5,544.7" fill="#00f0e0"/>
<polygon points="964.4,542 971.7,542.7 979.1,543.4 979.1,547.6 971.8,547 964.4,546.4" fill="#00c0ff"/>
<polygon points="979.1,543.4 986.4,544.1 993.8,544.8 1001.2,545.5 1001.3,549.4 993.9,548.8 986.5,548.2 979.1,547.6" fill="#0068ff"/>
<polygon points="1001.2,545.5 1008.7,546.2 1016.1,546.8 1023.6,547.5 1023.7,551.2 1016.2,550.6 1008.8,550 1001.3,549.4" fill="#0000ff"/>
<polygon points="1023.6,547.5 1031.1,548.2 1038.6,548.9 1046.1,549.6 1046.3,553.1 1038.8,552.5 1031.2,551.9 1023.7,551.2" fill="#4040f0"/>
<polygon points="1046.1,549.6 1053.7,550.3 1061.3,551 1068.9,551.8 1069.1,555.1 1061.5,554.4 1053.9,553.8 1046.3,553.1" fill="#8484e4"/>
<polygon points="1068.9,551.8 1070.5,551.9 1070.8,555.2 1069.1,555.1" fill="#d3d3d3"/>
<polygon points="163.1,442.8 168,443.7 164.3,445.9 159.4,444.9" fill="#8484e4"/>
<polygon points="168,443.7 173,444.5 177.9,445.4 182.8,446.3 187.8,447.1 184.2,450 179.2,449 174.3,448 169.3,447 164.3,445.9" fill="#4040f0"/>
<polygon points="187.8,447.1 192.8,448 197.7,448.8 194.3,452 189.2,451 184.2,450" fill="#0000ff"/>
<polygon points="197.7,448.8 202.7,449.7 207.8,450.6 212.8,451.5 209.4,455.1 204.3,454.1 199.3,453.1 194.3,452" fill="#0068ff"/>
<polygon points="212.8,451.5 217.8,452.3 222.9,453.2 228,454.1 224.7,458.2 219.6,457.2 214.5,456.2 209.4,455.1" fill="#00c0ff"/>
<polygon points="228,454.1 233.1,454.9 238.2,455.8 243.3,456.6 240.1,461.1 235,460.1 229.8,459.1 224.7,458.2" fill="#00f0e0"/>
<polygon points="243.3,456.6 248.4,457.5 253.6,458.3 258.7,459.2 255.7,464 250.5,463 245.3,462.1 240.1,461.1" fill="#00b88c"/>
<polygon points="258.7,459.2 263.9,460.1 269.1,460.9 266.1,466 260.9,465 255.7,464" fill="#008038"/>
<polygon points="269.1,460.9 274.3,461.8 279.6,462.7 284.8,463.7 281.9,469.1 276.7,468 271.4,467 266.1,466" fill="#207800"/>
<polygon points="284.8,463.7 290.1,464.6 295.3,465.5 292.5,471.1 287.2,470.1 281.9,469.1" fill="#80b000"/>
<polygon points="295.3,465.5 300.6,466.5 305.9,467.4 311.2,468.4 308.6,474.1 303.2,473.1 297.9,472.1 292.5,471.1" fill="#d8e800"/>
<polygon points="311.2,468.4 316.6,469.3 321.9,470.3 327.3,471.2 332.7,472.2 330.1,478.1 324.7,477.1 319.3,476.1 313.9,475.1 308.6,474.1" fill="#ffee00"/>
<polygon points="332.7,472.2 338.1,473.1 343.5,474.1 348.9,475.1 346.5,481.2 341,480.2 335.6,479.2 330.1,478.1" fill="#ffc800"/>
<polygon points="348.9,475.1 354.4,476 359.8,477 365.3,477.9 363,484.3 357.5,483.2 352,482.2 346.5,481.2" fill="#ffa800"/>
<polygon points="365.3,477.9 370.8,478.9 376.3,479.9 381.8,480.8 387.4,481.7 385.2,488.3 379.6,487.3 374.1,486.3 368.5,485.3 363,484.3" fill="#ff7800"/>
<polygon points="387.4,481.7 392.9,482.6 398.5,483.5 404.1,484.4 409.7,485.3 407.7,492.1 402.1,491.2 396.4,490.2 390.8,489.2 385.2,488.3" fill="#ff4000"/>
<polygon points="409.7,485.3 415.3,486.2 421,487.1 426.7,488 432.4,488.9 438.1,489.9 443.8,490.8 449.5,491.7 455.3,492.6 461.1,493.5 466.9,494.4 472.7,495.3 478.5,496.2 476.9,503.6 471.1,502.6 465.2,501.7 459.4,500.8 453.6,499.9 447.8,499 442,498 436.3,497 430.5,496 424.8,495 419.1,494.1 413.4,493.1 407.7,492.1" fill="#ff0800"/>
<polygon points="478.5,496.2 484.3,497.1 490.2,498 496.1,498.9 502,499.8 507.9,500.7 513.8,501.5 519.8,502.3 525.8,503 531.8,503.8 537.9,504.5 543.9,505.2 550,506 556.1,506.7 562.2,507.4 568.3,508.2 574.5,508.9 580.7,509.7 586.8,510.4 593,511.2 599.3,511.9 605.5,512.6 611.8,513.3 618,514 617.1,521.7 610.8,521 604.5,520.4 598.2,519.7 592,518.9 585.8,518.2 579.5,517.4 573.4,516.7 567.2,515.9 561,515.2 554.9,514.4 548.8,513.7 542.7,512.9 536.6,512.2 530.5,511.5 524.5,510.7 518.5,509.9 512.5,509.1 506.5,508.2 500.5,507.3 494.6,506.3 488.7,505.4 482.8,504.5 476.9,503.6" fill="#dd0000"/>
<polygon points="618,514 624.3,514.7 630.6,515.4 637,516.1 643.3,516.8 649.7,517.4 656.1,518.1 662.5,518.7 668.9,519.4 675.4,520 681.8,520.7 688.3,521.3 694.8,522 701.3,522.6 700.6,529.8 694.1,529.1 687.6,528.5 681.1,527.9 674.6,527.3 668.1,526.7 661.7,526.1 655.2,525.5 648.8,524.9 642.4,524.3 636.1,523.6 629.7,523 623.4,522.3 617.1,521.7" fill="#ff0800"/>
<polygon points="701.3,522.6 707.9,523.3 714.4,524 721,524.6 727.6,525.3 727,532.3 720.4,531.7 713.8,531 707.2,530.4 700.6,529.8" fill="#ff4000"/>
<polygon points="727.6,525.3 734.2,526 740.8,526.7 747.5,527.3 754.2,528 753.7,534.9 747,534.3 740.3,533.6 733.6,533 727,532.3" fill="#ff7800"/>
<polygon points="754.2,528 760.9,528.7 767.6,529.3 774.4,530 781.1,530.6 780.7,537.3 773.9,536.7 767.2,536.1 760.4,535.5 753.7,534.9" fill="#ffa800"/>
<polygon points="781.1,530.6 787.9,531.3 794.8,531.9 801.6,532.6 801.2,539.1 794.4,538.5 787.5,537.9 780.7,537.3" fill="#ffc800"/>
<polygon points="801.6,532.6 808.4,533.2 815.3,533.9 822.2,534.6 821.9,540.9 815,540.3 808.1,539.7 801.2,539.1" fill="#ffee00"/>
<polygon points="822.2,534.6 829.1,535.2 836.1,535.8 843,536.4 850,537 849.7,542.9 842.7,542.4 835.8,541.9 828.8,541.4 821.9,540.9" fill="#d8e800"/>
<polygon points="850,537 857,537.6 864,538.2 871,538.8 870.8,544.4 863.8,543.9 856.7,543.4 849.7,542.9" fill="#80b000"/>
<polygon points="871,538.8 878.1,539.5 885.2,540.1 892.3,540.7 892.1,545.9 885,545.4 877.9,544.9 870.8,544.4" fill="#207800"/>
<polygon points="892.3,540.7 899.4,541.2 906.5,541.8 913.7,542.4 913.6,547.5 906.4,547 899.3,546.5 892.1,545.9" fill="#008038"/>
<polygon points="913.7,542.4 920.9,543 928.1,543.5 935.3,544.1 942.5,544.7 942.5,549.3 935.2,548.8 928,548.4 920.8,547.9 913.6,547.5" fill="#00b88c"/>
<polygon points="942.5,544.7 949.8,545.2 957.1,545.8 964.4,546.4 964.4,550.8 957.1,550.3 949.8,549.8 942.5,549.3" fill="#00f0e0"/>
<polygon points="964.4,546.4 971.8,547 979.1,547.6 979.2,551.8 971.8,551.3 964.4,550.8" fill="#00c0ff"/>
<polygon points="979.1,547.6 986.5,548.2 993.9,548.8 1001.3,549.4 1001.4,553.3 994,552.8 986.6,552.3 979.2,551.8" fill="#0068ff"/>
<polygon points="1001.3,549.4 1008.8,550 1016.2,550.6 1023.7,551.2 1023.9,555 1016.4,554.4 1008.9,553.8 1001.4,553.3" fill="#0000ff"/>
<polygon points="1023.7,551.2 1031.2,551.9 1038.8,552.5 1046.3,553.1 1046.5,556.6 1039,556.1 1031.4,555.5 1023.9,555" fill="#4040f0"/>
<polygon points="1046.3,553.1 1053.9,553.8 1061.5,554.4 1069.1,555.1 1069.4,558.3 1061.8,557.8 1054.1,557.2 1046.5,556.6" fill="#8484e4"/>
<polygon points="1069.1,555.1 1070.8,555.2 1071,558.5 1069.4,558.3" fill="#d3d3d3"/>
<polygon points="159.4,444.9 164.3,445.9 169.3,447 165.6,449.4 160.6,448.2 155.7,447.1" fill="#8484e4"/>
<polygon points="169.3,447 174.3,448 179.2,449 184.2,450 189.2,451 185.7,454 180.7,452.9 175.6,451.7 170.6,450.5 165.6,449.4" fill="#4040f0"/>
<polygon points="189.2,451 194.3,452 199.3,453.1 195.8,456.4 190.8,455.2 185.7,454" fill="#0000ff"/>
<polygon points="199.3,453.1 204.3,454.1 209.4,455.1 214.5,456.2 211.2,460 206,458.8 200.9,457.6 195.8,456.4" fill="#0068ff"/>
<polygon points="214.5,456.2 219.6,457.2 224.7,458.2 221.4,462.3 216.3,461.2 211.2,460" fill="#00c0ff"/>
<polygon points="224.7,458.2 229.8,459.1 235,460.1 240.1,461.1 245.3,462.1 242.2,466.6 237,465.6 231.8,464.5 226.6,463.4 221.4,462.3" fill="#00f0e0"/>
<polygon points="245.3,462.1 250.5,463 255.7,464 252.6,468.9 247.4,467.8 242.2,466.6" fill="#00b88c"/>
<polygon points="255.7,464 260.9,465 266.1,466 271.4,467 268.4,472.2 263.2,471.1 257.9,470 252.6,468.9" fill="#008038"/>
<polygon points="271.4,467 276.7,468 281.9,469.1 279.1,474.5 273.7,473.3 268.4,472.2" fill="#207800"/>
<polygon points="281.9,469.1 287.2,470.1 292.5,471.1 297.9,472.1 295.1,477.6 289.7,476.6 284.4,475.5 279.1,474.5" fill="#80b000"/>
<polygon points="297.9,472.1 303.2,473.1 308.6,474.1 305.9,479.8 300.5,478.7 295.1,477.6" fill="#d8e800"/>
<polygon points="308.6,474.1 313.9,475.1 319.3,476.1 324.7,477.1 330.1,478.1 327.6,484.1 322.2,483 316.7,481.9 311.3,480.9 305.9,479.8" fill="#ffee00"/>
<polygon points="330.1,478.1 335.6,479.2 341,480.2 346.5,481.2 344.1,487.4 338.6,486.3 333.1,485.2 327.6,484.1" fill="#ffc800"/>
<polygon points="346.5,481.2 352,482.2 357.5,483.2 363,484.3 368.5,485.3 366.3,491.6 360.7,490.6 355.2,489.5 349.6,488.4 344.1,487.4" fill="#ffa800"/>
<polygon points="368.5,485.3 374.1,486.3 379.6,487.3 385.2,488.3 383.1,494.8 377.5,493.8 371.9,492.7 366.3,491.6" fill="#ff7800"/>
<polygon points="385.2,488.3 390.8,489.2 396.4,490.2 402.1,491.2 407.7,492.1 405.7,499 400,497.9 394.4,496.9 388.7,495.9 383.1,494.8" fill="#ff4000"/>
<polygon points="407.7,492.1 413.4,493.1 419.1,494.1 424.8,495 430.5,496 436.3,497 442,498 447.8,499 453.6,499.9 459.4,500.8 465.2,501.7 471.1,502.6 476.9,503.6 475.4,510.9 469.5,510 463.6,509 457.7,508.1 451.9,507.2 446.1,506.2 440.2,505.2 434.5,504.1 428.7,503.1 422.9,502.1 417.2,501 411.4,500 405.7,499" fill="#ff0800"/>
<polygon points="476.9,503.6 482.8,504.5 488.7,505.4 494.6,506.3 500.5,507.3 506.5,508.2 512.5,509.1 518.5,509.9 524.5,510.7 530.5,511.5 536.6,512.2 542.7,512.9 548.8,513.7 554.9,514.4 561,515.2 567.2,515.9 573.4,516.7 579.5,517.4 585.8,518.2 592,518.9 598.2,519.7 604.5,520.4 610.8,521 617.1,521.7 616.1,529.3 609.8,528.7 603.5,528.1 597.2,527.5 590.9,526.7 584.7,525.9 578.4,525.2 572.2,524.4 566,523.6 559.9,522.9 553.7,522.1 547.6,521.4 541.4,520.6 535.3,519.9 529.3,519.1 523.2,518.4 517.1,517.6 511.1,516.6 505.1,515.7 499.1,514.7 493.2,513.8 487.2,512.8 481.3,511.9 475.4,510.9" fill="#dd0000"/>
<polygon points="617.1,521.7 623.4,522.3 629.7,523 636.1,523.6 642.4,524.3 648.8,524.9 655.2,525.5 661.7,526.1 668.1,526.7 674.6,527.3 681.1,527.9 687.6,528.5 694.1,529.1 700.6,529.8 700,536.9 693.4,536.3 686.8,535.7 680.3,535.1 673.8,534.5 667.3,534 660.9,533.4 654.4,532.8 648,532.3 641.6,531.7 635.2,531.1 628.8,530.6 622.4,529.9 616.1,529.3" fill="#ff0800"/>
<polygon points="700.6,529.8 707.2,530.4 713.8,531 720.4,531.7 727,532.3 726.4,539.4 719.8,538.7 713.2,538.1 706.5,537.5 700,536.9" fill="#ff4000"/>
<polygon points="727,532.3 733.6,533 740.3,533.6 747,534.3 753.7,534.9 753.2,541.8 746.5,541.2 739.8,540.6 733.1,540 726.4,539.4" fill="#ff7800"/>
<polygon points="753.7,534.9 760.4,535.5 767.2,536.1 773.9,536.7 780.7,537.3 780.3,544 773.5,543.5 766.7,543 759.9,542.4 753.2,541.8" fill="#ffa800"/>
<polygon points="780.7,537.3 787.5,537.9 794.4,538.5 801.2,539.1 800.8,545.7 794,545.1 787.1,544.6 780.3,544" fill="#ffc800"/>
<polygon points="801.2,539.1 808.1,539.7 815,540.3 821.9,540.9 821.6,547.3 814.6,546.8 807.7,546.2 800.8,545.7" fill="#ffee00"/>
<polygon points="821.9,540.9 828.8,541.4 835.8,541.9 842.7,542.4 849.7,542.9 849.5,548.8 842.5,548.4 835.5,548.1 828.5,547.7 821.6,547.3" fill="#d8e800"/>
<polygon points="849.7,542.9 856.7,543.4 863.8,543.9 870.8,544.4 870.6,549.9 863.6,549.5 856.5,549.2 849.5,548.8" fill="#80b000"/>
<polygon points="870.8,544.4 877.9,544.9 885,545.4 892.1,545.9 892,551.2 884.8,550.8 877.7,550.4 870.6,549.9" fill="#207800"/>
<polygon points="892.1,545.9 899.3,546.5 906.4,547 913.6,547.5 913.5,552.5 906.3,552.1 899.1,551.7 892,551.2" fill="#008038"/>
<polygon points="913.6,547.5 920.8,547.9 928,548.4 935.2,548.8 942.5,549.3 942.5,553.9 935.2,553.6 928,553.2 920.7,552.9 913.5,552.5" fill="#00b88c"/>
<polygon points="942.5,549.3 949.8,549.8 957.1,550.3 964.4,550.8 964.5,555.1 957.1,554.7 949.8,554.3 942.5,553.9" fill="#00f0e0"/>
<polygon points="964.4,550.8 971.8,551.3 979.2,551.8 979.2,555.9 971.8,555.5 964.5,555.1" fill="#00c0ff"/>
<polygon points="979.2,551.8 986.6,552.3 994,552.8 1001.4,553.3 1001.5,557.2 994.1,556.8 986.6,556.4 979.2,555.9" fill="#0068ff"/>
<polygon points="1001.4,553.3 1008.9,553.8 1016.4,554.4 1023.9,555 1024,558.7 1016.5,558.2 1009,557.7 1001.5,557.2" fill="#0000ff"/>
<polygon points="1023.9,555 1031.4,555.5 1039,556.1 1046.5,556.6 1046.7,560.1 1039.2,559.6 1031.6,559.2 1024,558.7" fill="#4040f0"/>
<polygon points="1046.5,556.6 1054.1,557.2 1061.8,557.8 1069.4,558.3 1069.6,561.6 1062,561.1 1054.3,560.6 1046.7,560.1" fill="#8484e4"/>
<polygon points="1069.4,558.3 1071,558.5 1071.3,561.7 1069.6,561.6" fill="#d3d3d3"/>
<polygon points="155.7,447.1 160.6,448.2 165.6,449.4 170.6,450.5 167,453.1 162,451.8 156.9,450.5 151.9,449.2" fill="#8484e4"/>
<polygon points="170.6,450.5 175.6,451.7 180.7,452.9 185.7,454 182.2,457.1 177.1,455.8 172,454.4 167,453.1" fill="#4040f0"/>
<polygon points="185.7,454 190.8,455.2 195.8,456.4 200.9,457.6 197.5,461.1 192.4,459.7 187.3,458.4 182.2,457.1" fill="#0000ff"/>
<polygon points="200.9,457.6 206,458.8 211.2,460 207.8,463.8 202.7,462.4 197.5,461.1" fill="#0068ff"/>
<polygon points="211.2,460 216.3,461.2 221.4,462.3 226.6,463.4 223.4,467.6 218.2,466.4 213,465.1 207.8,463.8" fill="#00c0ff"/>
<polygon points="226.6,463.4 231.8,464.5 237,465.6 242.2,466.6 239,471.2 233.8,470 228.6,468.8 223.4,467.6" fill="#00f0e0"/>
<polygon points="242.2,466.6 247.4,467.8 252.6,468.9 257.9,470 254.9,474.9 249.6,473.7 244.3,472.5 239,471.2" fill="#00b88c"/>
<polygon points="257.9,470 263.2,471.1 268.4,472.2 273.7,473.3 270.8,478.6 265.5,477.4 260.2,476.2 254.9,474.9" fill="#008038"/>
<polygon points="273.7,473.3 279.1,474.5 284.4,475.5 281.6,481 276.2,479.9 270.8,478.6" fill="#207800"/>
<polygon points="284.4,475.5 289.7,476.6 295.1,477.6 292.4,483.2 287,482.1 281.6,481" fill="#80b000"/>
<polygon points="295.1,477.6 300.5,478.7 305.9,479.8 311.3,480.9 308.7,486.6 303.2,485.5 297.8,484.4 292.4,483.2" fill="#d8e800"/>
<polygon points="311.3,480.9 316.7,481.9 322.2,483 327.6,484.1 333.1,485.2 330.6,491.2 325.1,490.1 319.6,488.9 314.1,487.8 308.7,486.6" fill="#ffee00"/>
<polygon points="333.1,485.2 338.6,486.3 344.1,487.4 349.6,488.4 347.2,494.6 341.7,493.5 336.1,492.4 330.6,491.2" fill="#ffc800"/>
<polygon points="349.6,488.4 355.2,489.5 360.7,490.6 366.3,491.6 364,498 358.4,496.9 352.8,495.8 347.2,494.6" fill="#ffa800"/>
<polygon points="366.3,491.6 371.9,492.7 377.5,493.8 383.1,494.8 381,501.4 375.3,500.3 369.7,499.1 364,498" fill="#ff7800"/>
<polygon points="383.1,494.8 388.7,495.9 394.4,496.9 400,497.9 405.7,499 403.8,505.8 398,504.7 392.3,503.6 386.6,502.5 381,501.4" fill="#ff4000"/>
<polygon points="405.7,499 411.4,500 417.2,501 422.9,502.1 428.7,503.1 434.5,504.1 440.2,505.2 446.1,506.2 451.9,507.2 457.7,508.1 463.6,509 469.5,510 475.4,510.9 473.8,518.3 467.9,517.3 462,516.4 456.1,515.4 450.2,514.4 444.3,513.5 438.5,512.4 432.6,511.3 426.8,510.2 421,509.1 415.3,508 409.5,506.9 403.8,505.8" fill="#ff0800"/>
<polygon points="475.4,510.9 481.3,511.9 487.2,512.8 493.2,513.8 499.1,514.7 505.1,515.7 511.1,516.6 517.1,517.6 523.2,518.4 529.3,519.1 535.3,519.9 541.4,520.6 547.6,521.4 553.7,522.1 559.9,522.9 566,523.6 572.2,524.4 578.4,525.2 584.7,525.9 590.9,526.7 597.2,527.5 603.5,528.1 609.8,528.7 616.1,529.3 615.1,537 608.8,536.4 602.4,535.8 596.1,535.2 589.8,534.5 583.6,533.7 577.3,532.9 571.1,532.1 564.9,531.4 558.7,530.6 552.5,529.9 546.3,529.1 540.2,528.3 534.1,527.6 528,526.8 521.9,526.1 515.8,525.2 509.7,524.2 503.7,523.2 497.7,522.2 491.7,521.2 485.7,520.3 479.7,519.3 473.8,518.3" fill="#dd0000"/>
<polygon points="616.1,529.3 622.4,529.9 628.8,530.6 635.2,531.1 641.6,531.7 648,532.3 654.4,532.8 660.9,533.4 667.3,534 673.8,534.5 680.3,535.1 686.8,535.7 693.4,536.3 700,536.9 699.3,544 692.7,543.4 686.1,542.9 679.6,542.3 673,541.8 666.5,541.3 660,540.7 653.6,540.2 647.1,539.7 640.7,539.2 634.2,538.6 627.8,538.1 621.5,537.5 615.1,537" fill="#ff0800"/>
<polygon points="700,536.9 706.5,537.5 713.2,538.1 719.8,538.7 726.4,539.4 725.8,546.4 719.2,545.8 712.5,545.2 705.9,544.6 699.3,544" fill="#ff4000"/>
<polygon points="726.4,539.4 733.1,540 739.8,540.6 746.5,541.2 753.2,541.8 752.7,548.8 745.9,548.2 739.2,547.6 732.5,547 725.8,546.4" fill="#ff7800"/>
<polygon points="753.2,541.8 759.9,542.4 766.7,543 773.5,543.5 780.3,544 779.9,550.7 773,550.3 766.2,549.8 759.5,549.3 752.7,548.8" fill="#ffa800"/>
<polygon points="780.3,544 787.1,544.6 794,545.1 800.8,545.7 800.5,552.2 793.6,551.7 786.7,551.2 779.9,550.7" fill="#ffc800"/>
<polygon points="800.8,545.7 807.7,546.2 814.6,546.8 821.6,547.3 821.2,553.7 814.3,553.2 807.4,552.7 800.5,552.2" fill="#ffee00"/>
<polygon points="821.6,547.3 828.5,547.7 835.5,548.1 842.5,548.4 849.5,548.8 849.2,554.7 842.2,554.5 835.2,554.2 828.2,554 821.2,553.7" fill="#d8e800"/>
<polygon points="849.5,548.8 856.5,549.2 863.6,549.5 870.6,549.9 870.4,555.4 863.3,555.2 856.3,554.9 849.2,554.7" fill="#80b000"/>
<polygon points="870.6,549.9 877.7,550.4 884.8,550.8 892,551.2 891.8,556.5 884.7,556.2 877.5,555.8 870.4,555.4" fill="#207800"/>
<polygon points="892,551.2 899.1,551.7 906.3,552.1 913.5,552.5 913.4,557.6 906.2,557.3 899,556.9 891.8,556.5" fill="#008038"/>
<polygon points="913.5,552.5 920.7,552.9 928,553.2 935.2,553.6 942.5,553.9 942.5,558.6 935.2,558.3 927.9,558.1 920.6,557.8 913.4,557.6" fill="#00b88c"/>
<polygon points="942.5,553.9 949.8,554.3 957.1,554.7 964.5,555.1 964.5,559.5 957.1,559.2 949.8,558.9 942.5,558.6" fill="#00f0e0"/>
<polygon points="964.5,555.1 971.8,555.5 979.2,555.9 979.3,560.1 971.9,559.8 964.5,559.5" fill="#00c0ff"/>
<polygon points="979.2,555.9 986.6,556.4 994.1,556.8 1001.5,557.2 1001.6,561.1 994.2,560.8 986.7,560.4 979.3,560.1" fill="#0068ff"/>
<polygon points="1001.5,557.2 1009,557.7 1016.5,558.2 1024,558.7 1024.2,562.4 1016.7,561.9 1009.1,561.5 1001.6,561.1" fill="#0000ff"/>
<polygon points="1024,558.7 1031.6,559.2 1039.2,559.6 1039.3,563.2 1031.8,562.8 1024.2,562.4" fill="#4040f0"/>
<polygon points="1039.2,559.6 1046.7,560.1 1054.3,560.6 1062,561.1 1069.6,561.6 1069.9,564.9 1062.2,564.5 1054.6,564.1 1046.9,563.6 1039.3,563.2" fill="#8484e4"/>
<polygon points="1069.6,561.6 1071.3,561.7 1071.5,565 1069.9,564.9" fill="#d3d3d3"/>
</g>
<path d="M166.9 440.7L171.7 441.4L176.6 442.1L181.5 442.8L186.4 443.5L191.3 444.2L196.3 444.9L201.2 445.7L206.2 446.4L211.2 447.1L216.2 447.8L221.2 448.5L226.2 449.3L231.3 450L236.3 450.7L241.4 451.4L246.5 452.2L251.6 452.9L256.7 453.6L261.8 454.4L266.9 455.1L272.1 455.9L277.3 456.6L282.5 457.4L287.7 458.3L292.9 459.2L298.1 460L303.4 460.9L308.6 461.8L313.9 462.7L319.2 463.5L324.5 464.4L329.8 465.3L335.2 466.2L340.6 467.1L345.9 468L351.3 468.9L356.7 469.8L362.1 470.7L367.6 471.6L373 472.5L378.5 473.4L384 474.3L389.5 475.1L395 476L400.5 476.8L406.1 477.6L411.7 478.5L417.3 479.3L422.9 480.2L428.5 481L434.2 481.9L439.9 482.7L445.6 483.6L451.3 484.4L457 485.3L462.7 486.2L468.5 487L474.3 487.9L480.1 488.8L485.9 489.7L491.7 490.5L497.5 491.4L503.4 492.3L509.3 493.2L515.2 493.9L521.1 494.6L527.1 495.4L533.1 496.1L539.1 496.8L545.2 497.5L551.2 498.2L557.3 499L563.4 499.7L569.5 500.4L575.6 501.2L581.8 501.9L587.9 502.7L594.1 503.4L600.3 504.1L606.5 504.9L612.8 505.6L619 506.4L625.3 507.1L631.6 507.9L637.9 508.6L644.2 509.3L650.6 510L656.9 510.7L663.3 511.4L669.7 512.1L676.1 512.7L682.6 513.4L689 514.1L695.5 514.8L702 515.5L708.5 516.2L715 516.9L721.6 517.6L728.2 518.3L734.8 519L741.4 519.7L748 520.4L754.7 521.1L761.4 521.8L768.1 522.5L774.8 523.2L781.6 523.9L788.4 524.6L795.1 525.3L802 526L808.8 526.8L815.7 527.5L822.5 528.2L829.4 528.9L836.3 529.6L843.3 530.4L850.2 531.1L857.2 531.8L864.2 532.5L871.2 533.3L878.3 534L885.3 534.7L892.4 535.4L899.5 536L906.6 536.7L913.8 537.3L920.9 538L928.1 538.7L935.3 539.3L942.5 540L949.8 540.7L957.1 541.4L964.4 542L971.7 542.7L979.1 543.4L986.4 544.1L993.8 544.8L1001.2 545.5L1008.7 546.2L1016.1 546.8L1023.6 547.5L1031.1 548.2L1038.6 548.9L1046.1 549.6L1053.7 550.3L1061.3 551L1068.9 551.8L1070.5 551.9M163.1 442.8L168 443.7L173 444.5L177.9 445.4L182.8 446.3L187.8 447.1L192.8 448L197.7 448.8L202.7 449.7L207.8 450.6L212.8 451.5L217.8 452.3L222.9 453.2L228 454.1L233.1 454.9L238.2 455.8L243.3 456.6L248.4 457.5L253.6 458.3L258.7 459.2L263.9 460.1L269.1 460.9L274.3 461.8L279.6 462.7L284.8 463.7L290.1 464.6L295.3 465.5L300.6 466.5L305.9 467.4L311.2 468.4L316.6 469.3L321.9 470.3L327.3 471.2L332.7 472.2L338.1 473.1L343.5 474.1L348.9 475.1L354.4 476L359.8 477L365.3 477.9L370.8 478.9L376.3 479.9L381.8 480.8L387.4 481.7L392.9 482.6L398.5 483.5L404.1 484.4L409.7 485.3L415.3 486.2L421 487.1L426.7 488L432.4 488.9L438.1 489.9L443.8 490.8L449.5 491.7L455.3 492.6L461.1 493.5L466.9 494.4L472.7 495.3L478.5 496.2L484.3 497.1L490.2 498L496.1 498.9L502 499.8L507.9 500.7L513.8 501.5L519.8 502.3L525.8 503L531.8 503.8L537.9 504.5L543.9 505.2L550 506L556.1 506.7L562.2 507.4L568.3 508.2L574.5 508.9L580.7 509.7L586.8 510.4L593 511.2L599.3 511.9L605.5 512.6L611.8 513.3L618 514L624.3 514.7L630.6 515.4L637 516.1L643.3 516.8L649.7 517.4L656.1 518.1L662.5 518.7L668.9 519.4L675.4 520L681.8 520.7L688.3 521.3L694.8 522L701.3 522.6L707.9 523.3L714.4 524L721 524.6L727.6 525.3L734.2 526L740.8 526.7L747.5 527.3L754.2 528L760.9 528.7L767.6 529.3L774.4 530L781.1 530.6L787.9 531.3L794.8 531.9L801.6 532.6L808.4 533.2L815.3 533.9L822.2 534.6L829.1 535.2L836.1 535.8L843 536.4L850 537L857 537.6L864 538.2L871 538.8L878.1 539.5L885.2 540.1L892.3 540.7L899.4 541.2L906.5 541.8L913.7 542.4L920.9 543L928.1 543.5L935.3 544.1L942.5 544.7L949.8 545.2L957.1 545.8L964.4 546.4L971.8 547L979.1 547.6L986.5 548.2L993.9 548.8L1001.3 549.4L1008.8 550L1016.2 550.6L1023.7 551.2L1031.2 551.9L1038.8 552.5L1046.3 553.1L1053.9 553.8L1061.5 554.4L1069.1 555.1L1070.8 555.2M159.4 444.9L164.3 445.9L169.3 447L174.3 448L179.2 449L184.2 450L189.2 451L194.3 452L199.3 453.1L204.3 454.1L209.4 455.1L214.5 456.2L219.6 457.2L224.7 458.2L229.8 459.1L235 460.1L240.1 461.1L245.3 462.1L250.5 463L255.7 464L260.9 465L266.1 466L271.4 467L276.7 468L281.9 469.1L287.2 470.1L292.5 471.1L297.9 472.1L303.2 473.1L308.6 474.1L313.9 475.1L319.3 476.1L324.7 477.1L330.1 478.1L335.6 479.2L341 480.2L346.5 481.2L352 482.2L357.5 483.2L363 484.3L368.5 485.3L374.1 486.3L379.6 487.3L385.2 488.3L390.8 489.2L396.4 490.2L402.1 491.2L407.7 492.1L413.4 493.1L419.1 494.1L424.8 495L430.5 496L436.3 497L442 498L447.8 499L453.6 499.9L459.4 500.8L465.2 501.7L471.1 502.6L476.9 503.6L482.8 504.5L488.7 505.4L494.6 506.3L500.5 507.3L506.5 508.2L512.5 509.1L518.5 509.9L524.5 510.7L530.5 511.5L536.6 512.2L542.7 512.9L548.8 513.7L554.9 514.4L561 515.2L567.2 515.9L573.4 516.7L579.5 517.4L585.8 518.2L592 518.9L598.2 519.7L604.5 520.4L610.8 521L617.1 521.7L623.4 522.3L629.7 523L636.1 523.6L642.4 524.3L648.8 524.9L655.2 525.5L661.7 526.1L668.1 526.7L674.6 527.3L681.1 527.9L687.6 528.5L694.1 529.1L700.6 529.8L707.2 530.4L713.8 531L720.4 531.7L727 532.3L733.6 533L740.3 533.6L747 534.3L753.7 534.9L760.4 535.5L767.2 536.1L773.9 536.7L780.7 537.3L787.5 537.9L794.4 538.5L801.2 539.1L808.1 539.7L815 540.3L821.9 540.9L828.8 541.4L835.8 541.9L842.7 542.4L849.7 542.9L856.7 543.4L863.8 543.9L870.8 544.4L877.9 544.9L885 545.4L892.1 545.9L899.3 546.5L906.4 547L913.6 547.5L920.8 547.9L928 548.4L935.2 548.8L942.5 549.3L949.8 549.8L957.1 550.3L964.4 550.8L971.8 551.3L979.2 551.8L986.6 552.3L994 552.8L1001.4 553.3L1008.9 553.8L1016.4 554.4L1023.9 555L1031.4 555.5L1039 556.1L1046.5 556.6L1054.1 557.2L1061.8 557.8L1069.4 558.3L1071 558.5M155.7 447.1L160.6 448.2L165.6 449.4L170.6 450.5L175.6 451.7L180.7 452.9L185.7 454L190.8 455.2L195.8 456.4L200.9 457.6L206 458.8L211.2 460L216.3 461.2L221.4 462.3L226.6 463.4L231.8 464.5L237 465.6L242.2 466.6L247.4 467.8L252.6 468.9L257.9 470L263.2 471.1L268.4 472.2L273.7 473.3L279.1 474.5L284.4 475.5L289.7 476.6L295.1 477.6L300.5 478.7L305.9 479.8L311.3 480.9L316.7 481.9L322.2 483L327.6 484.1L333.1 485.2L338.6 486.3L344.1 487.4L349.6 488.4L355.2 489.5L360.7 490.6L366.3 491.6L371.9 492.7L377.5 493.8L383.1 494.8L388.7 495.9L394.4 496.9L400 497.9L405.7 499L411.4 500L417.2 501L422.9 502.1L428.7 503.1L434.5 504.1L440.2 505.2L446.1 506.2L451.9 507.2L457.7 508.1L463.6 509L469.5 510L475.4 510.9L481.3 511.9L487.2 512.8L493.2 513.8L499.1 514.7L505.1 515.7L511.1 516.6L517.1 517.6L523.2 518.4L529.3 519.1L535.3 519.9L541.4 520.6L547.6 521.4L553.7 522.1L559.9 522.9L566 523.6L572.2 524.4L578.4 525.2L584.7 525.9L590.9 526.7L597.2 527.5L603.5 528.1L609.8 528.7L616.1 529.3L622.4 529.9L628.8 530.6L635.2 531.1L641.6 531.7L648 532.3L654.4 532.8L660.9 533.4L667.3 534L673.8 534.5L680.3 535.1L686.8 535.7L693.4 536.3L700 536.9L706.5 537.5L713.2 538.1L719.8 538.7L726.4 539.4L733.1 540L739.8 540.6L746.5 541.2L753.2 541.8L759.9 542.4L766.7 543L773.5 543.5L780.3 544L787.1 544.6L794 545.1L800.8 545.7L807.7 546.2L814.6 546.8L821.6 547.3L828.5 547.7L835.5 548.1L842.5 548.4L849.5 548.8L856.5 549.2L863.6 549.5L870.6 549.9L877.7 550.4L884.8 550.8L892 551.2L899.1 551.7L906.3 552.1L913.5 552.5L920.7 552.9L928 553.2L935.2 553.6L942.5 553.9L949.8 554.3L957.1 554.7L964.5 555.1L971.8 555.5L979.2 555.9L986.6 556.4L994.1 556.8L1001.5 557.2L1009 557.7L1016.5 558.2L1024 558.7L1031.6 559.2L1039.2 559.6L1046.7 560.1L1054.3 560.6L1062 561.1L1069.6 561.6L1071.3 561.7M151.9 449.2L156.9 450.5L162 451.8L167 453.1L172 454.4L177.1 455.8L182.2 457.1L187.3 458.4L192.4 459.7L197.5 461.1L202.7 462.4L207.8 463.8L213 465.1L218.2 466.4L223.4 467.6L228.6 468.8L233.8 470L239 471.2L244.3 472.5L249.6 473.7L254.9 474.9L260.2 476.2L265.5 477.4L270.8 478.6L276.2 479.9L281.6 481L287 482.1L292.4 483.2L297.8 484.4L303.2 485.5L308.7 486.6L314.1 487.8L319.6 488.9L325.1 490.1L330.6 491.2L336.1 492.4L341.7 493.5L347.2 494.6L352.8 495.8L358.4 496.9L364 498L369.7 499.1L375.3 500.3L381 501.4L386.6 502.5L392.3 503.6L398 504.7L403.8 505.8L409.5 506.9L415.3 508L421 509.1L426.8 510.2L432.6 511.3L438.5 512.4L444.3 513.5L450.2 514.4L456.1 515.4L462 516.4L467.9 517.3L473.8 518.3L479.7 519.3L485.7 520.3L491.7 521.2L497.7 522.2L503.7 523.2L509.7 524.2L515.8 525.2L521.9 526.1L528 526.8L534.1 527.6L540.2 528.3L546.3 529.1L552.5 529.9L558.7 530.6L564.9 531.4L571.1 532.1L577.3 532.9L583.6 533.7L589.8 534.5L596.1 535.2L602.4 535.8L608.8 536.4L615.1 537L621.5 537.5L627.8 538.1L634.2 538.6L640.7 539.2L647.1 539.7L653.6 540.2L660 540.7L666.5 541.3L673 541.8L679.6 542.3L686.1 542.9L692.7 543.4L699.3 544L705.9 544.6L712.5 545.2L719.2 545.8L725.8 546.4L732.5 547L739.2 547.6L745.9 548.2L752.7 548.8L759.5 549.3L766.2 549.8L773 550.3L779.9 550.7L786.7 551.2L793.6 551.7L800.5 552.2L807.4 552.7L814.3 553.2L821.2 553.7L828.2 554L835.2 554.2L842.2 554.5L849.2 554.7L856.3 554.9L863.3 555.2L870.4 555.4L877.5 555.8L884.7 556.2L891.8 556.5L899 556.9L906.2 557.3L913.4 557.6L920.6 557.8L927.9 558.1L935.2 558.3L942.5 558.6L949.8 558.9L957.1 559.2L964.5 559.5L971.9 559.8L979.3 560.1L986.7 560.4L994.2 560.8L1001.6 561.1L1009.1 561.5L1016.7 561.9L1024.2 562.4L1031.8 562.8L1039.3 563.2L1046.9 563.6L1054.6 564.1L1062.2 564.5L1069.9 564.9L1071.5 565M166.9 440.7L151.9 449.2M171.7 441.4L156.9 450.5M176.6 442.1L162 451.8M181.5 442.8L167 453.1M186.4 443.5L172 454.4M191.3 444.2L177.1 455.8M196.3 444.9L182.2 457.1M201.2 445.7L187.3 458.4M206.2 446.4L192.4 459.7M211.2 447.1L197.5 461.1M216.2 447.8L202.7 462.4M221.2 448.5L207.8 463.8M226.2 449.3L213 465.1M231.3 450L218.2 466.4M236.3 450.7L223.4 467.6M241.4 451.4L228.6 468.8M246.5 452.2L233.8 470M251.6 452.9L239 471.2M256.7 453.6L244.3 472.5M261.8 454.4L249.6 473.7M266.9 455.1L254.9 474.9M272.1 455.9L260.2 476.2M277.3 456.6L265.5 477.4M282.5 457.4L270.8 478.6M287.7 458.3L276.2 479.9M292.9 459.2L281.6 481M298.1 460L287 482.1M303.4 460.9L292.4 483.2M308.6 461.8L297.8 484.4M313.9 462.7L303.2 485.5M319.2 463.5L308.7 486.6M324.5 464.4L314.1 487.8M329.8 465.3L319.6 488.9M335.2 466.2L325.1 490.1M340.6 467.1L330.6 491.2M345.9 468L336.1 492.4M351.3 468.9L341.7 493.5M356.7 469.8L347.2 494.6M362.1 470.7L352.8 495.8M367.6 471.6L358.4 496.9M373 472.5L364 498M378.5 473.4L369.7 499.1M384 474.3L375.3 500.3M389.5 475.1L381 501.4M395 476L386.6 502.5M400.5 476.8L392.3 503.6M406.1 477.6L398 504.7M411.7 478.5L403.8 505.8M417.3 479.3L409.5 506.9M422.9 480.2L415.3 508M428.5 481L421 509.1M434.2 481.9L426.8 510.2M439.9 482.7L432.6 511.3M445.6 483.6L438.5 512.4M451.3 484.4L444.3 513.5M457 485.3L450.2 514.4M462.7 486.2L456.1 515.4M468.5 487L462 516.4M474.3 487.9L467.9 517.3M480.1 488.8L473.8 518.3M485.9 489.7L479.7 519.3M491.7 490.5L485.7 520.3M497.5 491.4L491.7 521.2M503.4 492.3L497.7 522.2M509.3 493.2L503.7 523.2M515.2 493.9L509.7 524.2M521.1 494.6L515.8 525.2M527.1 495.4L521.9 526.1M533.1 496.1L528 526.8M539.1 496.8L534.1 527.6M545.2 497.5L540.2 528.3M551.2 498.2L546.3 529.1M557.3 499L552.5 529.9M563.4 499.7L558.7 530.6M569.5 500.4L564.9 531.4M575.6 501.2L571.1 532.1M581.8 501.9L577.3 532.9M587.9 502.7L583.6 533.7M594.1 503.4L589.8 534.5M600.3 504.1L596.1 535.2M606.5 504.9L602.4 535.8M612.8 505.6L608.8 536.4M619 506.4L615.1 537M625.3 507.1L621.5 537.5M631.6 507.9L627.8 538.1M637.9 508.6L634.2 538.6M644.2 509.3L640.7 539.2M650.6 510L647.1 539.7M656.9 510.7L653.6 540.2M663.3 511.4L660 540.7M669.7 512.1L666.5 541.3M676.1 512.7L673 541.8M682.6 513.4L679.6 542.3M689 514.1L686.1 542.9M695.5 514.8L692.7 543.4M702 515.5L699.3 544M708.5 516.2L705.9 544.6M715 516.9L712.5 545.2M721.6 517.6L719.2 545.8M728.2 518.3L725.8 546.4M734.8 519L732.5 547M741.4 519.7L739.2 547.6M748 520.4L745.9 548.2M754.7 521.1L752.7 548.8M761.4 521.8L759.5 549.3M768.1 522.5L766.2 549.8M774.8 523.2L773 550.3M781.6 523.9L779.9 550.7M788.4 524.6L786.7 551.2M795.1 525.3L793.6 551.7M802 526L800.5 552.2M808.8 526.8L807.4 552.7M815.7 527.5L814.3 553.2M822.5 528.2L821.2 553.7M829.4 528.9L828.2 554M836.3 529.6L835.2 554.2M843.3 530.4L842.2 554.5M850.2 531.1L849.2 554.7M857.2 531.8L856.3 554.9M864.2 532.5L863.3 555.2M871.2 533.3L870.4 555.4M878.3 534L877.5 555.8M885.3 534.7L884.7 556.2M892.4 535.4L891.8 556.5M899.5 536L899 556.9M906.6 536.7L906.2 557.3M913.8 537.3L913.4 557.6M920.9 538L920.6 557.8M928.1 538.7L927.9 558.1M935.3 539.3L935.2 558.3M942.5 540L942.5 558.6M949.8 540.7L949.8 558.9M957.1 541.4L957.1 559.2M964.4 542L964.5 559.5M971.7 542.7L971.9 559.8M979.1 543.4L979.3 560.1M986.4 544.1L986.7 560.4M993.8 544.8L994.2 560.8M1001.2 545.5L1001.6 561.1M1008.7 546.2L1009.1 561.5M1016.1 546.8L1016.7 561.9M1023.6 547.5L1024.2 562.4M1031.1 548.2L1031.8 562.8M1038.6 548.9L1039.3 563.2M1046.1 549.6L1046.9 563.6M1053.7 550.3L1054.6 564.1M1061.3 551L1062.2 564.5M1068.9 551.8L1069.9 564.9M1070.5 551.9L1071.5 565" fill="none" stroke="#000" stroke-width=".95"/>
</g>
<polygon points="136.5,447.2 137,445.2 154,483.3 141.6,481.9" fill="#dcdcdc"/>
<path d="M136.5 447.2L141.6 481.9M137 445.2L154 483.3M136.5 447.2L137 445.2M137.3 453L139.8 451.6M138.2 458.8L142.7 457.9M139.1 464.5L145.5 464.2M139.9 470.3L148.3 470.6M140.8 476.1L151.2 476.9M141.6 481.9L154 483.3" fill="none" stroke="#000" stroke-width=".9"/>
<polygon points="134.5,485.8 143,486.5 157.4,547.1 148.4,549.6" fill="#dcdcdc"/>
<path d="M134.5 485.8L148.4 549.6M138.8 486.1L152.9 548.4M143 486.5L157.4 547.1M134.5 485.8L143 486.5M135.6 490.7L144.1 491.2M136.6 495.6L145.2 495.8M137.7 500.5L146.3 500.5M138.8 505.4L147.4 505.1M139.8 510.3L148.5 509.8M140.9 515.2L149.6 514.5M142 520.2L150.8 519.1M143.1 525.1L151.9 523.8M144.1 530L153 528.5M145.2 534.9L154.1 533.1M146.3 539.8L155.2 537.8M147.3 544.7L156.3 542.4M148.4 549.6L157.4 547.1" fill="none" stroke="#000" stroke-width=".9"/>
<polygon points="143,486.5 174.6,489.9 183.6,556.1 157.4,547.1" fill="#dcdcdc"/>
<path d="M143 486.5L157.4 547.1M148.3 487.1L161.8 548.6M153.5 487.6L166.1 550.1M158.8 488.2L170.5 551.6M164.1 488.8L174.9 553.1M169.3 489.3L179.2 554.6M174.6 489.9L183.6 556.1M143 486.5L174.6 489.9M144.1 491.2L175.3 495M145.2 495.8L176 500.1M146.3 500.5L176.7 505.2M147.4 505.1L177.4 510.3M148.5 509.8L178.1 515.4M149.6 514.5L178.8 520.5M150.8 519.1L179.4 525.5M151.9 523.8L180.1 530.6M153 528.5L180.8 535.7M154.1 533.1L181.5 540.8M155.2 537.8L182.2 545.9M156.3 542.4L182.9 551M157.4 547.1L183.6 556.1" fill="none" stroke="#000" stroke-width=".9"/>
<polygon points="174.6,489.9 190.1,491.5 199.1,547.1 183.6,556.1" fill="#dcdcdc"/>
<path d="M174.6 489.9L183.6 556.1M178.5 490.3L187.5 553.9M182.3 490.7L191.3 551.6M186.2 491.1L195.2 549.4M190.1 491.5L199.1 547.1M174.6 489.9L190.1 491.5M175.3 495L190.8 495.8M176 500.1L191.5 500.1M176.7 505.2L192.2 504.3M177.4 510.3L192.9 508.6M178.1 515.4L193.6 512.9M178.8 520.5L194.3 517.2M179.4 525.5L194.9 521.4M180.1 530.6L195.6 525.7M180.8 535.7L196.3 530M181.5 540.8L197 534.3M182.2 545.9L197.7 538.5M182.9 551L198.4 542.8M183.6 556.1L199.1 547.1" fill="none" stroke="#000" stroke-width=".9"/>
<path d="M134.3 485.8L145 483.2L175 487.3L193 491.3L188 493L160 490.8L136 488z" fill="#1c1c1c" stroke="#000" stroke-width=".8"/>
<path d="M1072.300 551.500L1066 615.500M1074.500 552L1068 616" stroke="#000" stroke-width="1.200" fill="none"/>
<polygon points="1098.5,521.8 1126.8,525.2 1117.7,560.6 1088.4,557.5" fill="#dcdcdc"/>
<path d="M1098.5 521.8L1088.4 557.5M1103.2 522.4L1093.3 558M1107.9 522.9L1098.2 558.5M1112.7 523.5L1103.1 559M1117.4 524.1L1107.9 559.6M1122.1 524.6L1112.8 560.1M1126.8 525.2L1117.7 560.6M1098.5 521.8L1126.8 525.2M1097.9 523.9L1126.3 527.3M1097.3 526L1125.7 529.4M1096.7 528.1L1125.2 531.4M1096.1 530.2L1124.7 533.5M1095.5 532.3L1124.1 535.6M1094.9 534.4L1123.6 537.7M1094.3 536.5L1123.1 539.8M1093.7 538.6L1122.5 541.9M1093.2 540.7L1122 543.9M1092.6 542.8L1121.4 546M1092 544.9L1120.9 548.1M1091.4 547L1120.4 550.2M1090.8 549.1L1119.8 552.3M1090.2 551.2L1119.3 554.4M1089.6 553.3L1118.8 556.4M1089 555.4L1118.2 558.5M1088.4 557.5L1117.7 560.6" fill="none" stroke="#000" stroke-width=".85"/>
<polygon points="1074.3,557.5 1131.8,563.6 1114.7,691.8 1060.2,684.7" fill="#dcdcdc"/>
<path d="M1074.3 557.5L1060.2 684.7M1080 558.1L1065.7 685.4M1085.8 558.7L1071.1 686.1M1091.5 559.3L1076.5 686.8M1097.3 559.9L1082 687.5M1103 560.5L1087.5 688.2M1108.8 561.2L1092.9 689M1114.5 561.8L1098.4 689.7M1120.3 562.4L1103.8 690.4M1126 563L1109.2 691.1M1131.8 563.6L1114.7 691.8M1074.3 557.5L1131.8 563.6M1073.8 562.4L1131.1 568.5M1073.2 567.3L1130.5 573.5M1072.7 572.2L1129.8 578.4M1072.1 577.1L1129.2 583.3M1071.6 582L1128.5 588.3M1071 586.9L1127.9 593.2M1070.5 591.7L1127.2 598.1M1070 596.6L1126.5 603M1069.4 601.5L1125.9 608M1068.9 606.4L1125.2 612.9M1068.3 611.3L1124.6 617.8M1067.8 616.2L1123.9 622.8M1067.2 621.1L1123.2 627.7M1066.7 626L1122.6 632.6M1066.2 630.9L1121.9 637.6M1065.6 635.8L1121.3 642.5M1065.1 640.7L1120.6 647.4M1064.5 645.6L1120 652.4M1064 650.5L1119.3 657.3M1063.5 655.3L1118.6 662.2M1062.9 660.2L1118 667.1M1062.4 665.1L1117.3 672.1M1061.8 670L1116.7 677M1061.3 674.9L1116 681.9M1060.7 679.8L1115.4 686.9M1060.2 684.7L1114.7 691.8" fill="none" stroke="#000" stroke-width="1"/>
<path d="M1073.300 552.500L1059.200 689.700M1132.900 558.900L1126.800 622.100L1114.700 697.800" stroke="#000" stroke-width="1.300" fill="none"/>
<polygon points="1134.9,560.2 1286.7,578.3 1286.7,589.8 1134.9,572.7" fill="#dcdcdc"/>
<path d="M1134.9 560.2L1134.9 572.7M1140.3 560.8L1140.3 573.3M1145.7 561.5L1145.7 573.9M1151.2 562.1L1151.2 574.5M1156.6 562.8L1156.6 575.1M1162 563.4L1162 575.8M1167.4 564.1L1167.4 576.4M1172.9 564.7L1172.9 577M1178.3 565.4L1178.3 577.6M1183.7 566L1183.7 578.2M1189.1 566.7L1189.1 578.8M1194.5 567.3L1194.5 579.4M1200 568L1200 580M1205.4 568.6L1205.4 580.6M1210.8 569.2L1210.8 581.2M1216.2 569.9L1216.2 581.9M1221.6 570.5L1221.6 582.5M1227.1 571.2L1227.1 583.1M1232.5 571.8L1232.5 583.7M1237.9 572.5L1237.9 584.3M1243.3 573.1L1243.3 584.9M1248.8 573.8L1248.8 585.5M1254.2 574.4L1254.2 586.1M1259.6 575.1L1259.6 586.7M1265 575.7L1265 587.4M1270.4 576.4L1270.4 588M1275.9 577L1275.9 588.6M1281.3 577.7L1281.3 589.2M1286.7 578.3L1286.7 589.8M1134.9 560.2L1286.7 578.3M1134.9 563.3L1286.7 581.2M1134.9 566.5L1286.7 584M1134.9 569.6L1286.7 586.9M1134.9 572.7L1286.7 589.8" fill="none" stroke="#000" stroke-width=".8"/>
<polygon points="1134.9,572.7 1286.7,589.8 1278.2,641.3 1126.8,622.1" fill="#dcdcdc"/>
<path d="M1134.9 572.7L1126.8 622.1M1140.3 573.3L1132.2 622.8M1145.7 573.9L1137.6 623.5M1151.2 574.5L1143 624.2M1156.6 575.1L1148.4 624.8M1162 575.8L1153.8 625.5M1167.4 576.4L1159.2 626.2M1172.9 577L1164.7 626.9M1178.3 577.6L1170.1 627.6M1183.7 578.2L1175.5 628.3M1189.1 578.8L1180.9 629M1194.5 579.4L1186.3 629.6M1200 580L1191.7 630.3M1205.4 580.6L1197.1 631M1210.8 581.2L1202.5 631.7M1216.2 581.9L1207.9 632.4M1221.6 582.5L1213.3 633.1M1227.1 583.1L1218.7 633.8M1232.5 583.7L1224.1 634.4M1237.9 584.3L1229.5 635.1M1243.3 584.9L1234.9 635.8M1248.8 585.5L1240.3 636.5M1254.2 586.1L1245.8 637.2M1259.6 586.7L1251.2 637.9M1265 587.4L1256.6 638.6M1270.4 588L1262 639.2M1275.9 588.6L1267.4 639.9M1281.3 589.2L1272.8 640.6M1286.7 589.8L1278.2 641.3M1134.9 572.7L1286.7 589.8M1134 578.2L1285.8 595.5M1133.1 583.7L1284.8 601.2M1132.2 589.2L1283.9 607M1131.3 594.7L1282.9 612.7M1130.4 600.1L1282 618.4M1129.5 605.6L1281 624.1M1128.6 611.1L1280.1 629.9M1127.7 616.6L1279.1 635.6M1126.8 622.1L1278.2 641.3" fill="none" stroke="#000" stroke-width="1"/>
<path d="M1127.200 619L1278.600 638.500" stroke="#000" stroke-width=".7" fill="none"/>
<polygon points="1141.9,625.2 1183.3,631.2 1182.3,641.3 1187.4,647.4 1178.3,659.5 1141.9,630.2" fill="#555" stroke="#000" stroke-width=".8"/>
<polygon points="1141.9,625.2 1183.3,631.2 1182.3,641.3 1152,636.5" fill="none"/>
<path d="M1141.9 625.2L1152 636.5M1143.6 625.5L1153.3 636.7M1145.4 625.7L1154.5 636.9M1147.1 626L1155.8 637.1M1148.8 626.2L1157 637.3M1150.5 626.5L1158.3 637.5M1152.2 626.7L1159.6 637.7M1154 627L1160.8 637.9M1155.7 627.2L1162.1 638.1M1157.4 627.5L1163.4 638.3M1159.2 627.7L1164.6 638.5M1160.9 628L1165.9 638.7M1162.6 628.2L1167.2 638.9M1164.3 628.5L1168.4 639.1M1166 628.7L1169.7 639.3M1167.8 629L1170.9 639.5M1169.5 629.2L1172.2 639.7M1171.2 629.5L1173.5 639.9M1173 629.7L1174.7 640.1M1174.7 630L1176 640.3M1176.4 630.2L1177.2 640.5M1178.1 630.5L1178.5 640.7M1179.8 630.7L1179.8 640.9M1181.6 631L1181 641.1M1183.3 631.2L1182.3 641.3M1141.9 625.2L1183.3 631.2M1143.6 627.1L1183.1 632.9M1145.3 629L1183 634.6M1147 630.9L1182.8 636.2M1148.6 632.7L1182.6 637.9M1150.3 634.6L1182.5 639.6M1152 636.5L1182.3 641.3" fill="none" stroke="#000" stroke-width=".6"/>
<polygon points="1152,636.5 1182.3,641.3 1187.4,647.4 1175,653" fill="none"/>
<path d="M1152 636.5L1175 653M1153.7 636.8L1175.7 652.7M1155.4 637L1176.4 652.4M1157 637.3L1177.1 652.1M1158.7 637.6L1177.8 651.8M1160.4 637.8L1178.4 651.4M1162.1 638.1L1179.1 651.1M1163.8 638.4L1179.8 650.8M1165.5 638.6L1180.5 650.5M1167.2 638.9L1181.2 650.2M1168.8 639.2L1181.9 649.9M1170.5 639.4L1182.6 649.6M1172.2 639.7L1183.3 649.3M1173.9 640L1184 649M1175.6 640.2L1184.6 648.6M1177.2 640.5L1185.3 648.3M1178.9 640.8L1186 648M1180.6 641L1186.7 647.7M1182.3 641.3L1187.4 647.4M1152 636.5L1182.3 641.3M1156.6 639.8L1183.3 642.5M1161.2 643.1L1184.3 643.7M1165.8 646.4L1185.4 645M1170.4 649.7L1186.4 646.2M1175 653L1187.4 647.4" fill="none" stroke="#000" stroke-width=".6"/>
<polygon points="1144,630.5 1176,652 1187,647.5 1178.3,659.5 1141.9,630.2" fill="#000"/>
<rect x="1329" y="660.5" width="24.5" height="14.8" fill="#d3d3d3"/>
<rect x="1329" y="646" width="24.5" height="14.8" fill="#8484e4"/>
<rect x="1329" y="631.5" width="24.5" height="14.8" fill="#4040f0"/>
<rect x="1329" y="617" width="24.5" height="14.8" fill="#0000ff"/>
<rect x="1329" y="602.5" width="24.5" height="14.8" fill="#0068ff"/>
<rect x="1329" y="588.1" width="24.5" height="14.8" fill="#00c0ff"/>
<rect x="1329" y="573.6" width="24.5" height="14.8" fill="#00f0e0"/>
<rect x="1329" y="559.1" width="24.5" height="14.8" fill="#00b88c"/>
<rect x="1329" y="544.6" width="24.5" height="14.8" fill="#008038"/>
<rect x="1329" y="530.1" width="24.5" height="14.8" fill="#207800"/>
<rect x="1329" y="515.6" width="24.5" height="14.8" fill="#80b000"/>
<rect x="1329" y="501.1" width="24.5" height="14.8" fill="#d8e800"/>
<rect x="1329" y="486.6" width="24.5" height="14.8" fill="#ffee00"/>
<rect x="1329" y="472.1" width="24.5" height="14.8" fill="#ffc800"/>
<rect x="1329" y="457.6" width="24.5" height="14.8" fill="#ffa800"/>
<rect x="1329" y="443.2" width="24.5" height="14.8" fill="#ff7800"/>
<rect x="1329" y="428.7" width="24.5" height="14.8" fill="#ff4000"/>
<rect x="1329" y="414.2" width="24.5" height="14.8" fill="#ff0800"/>
<rect x="1329" y="399.7" width="24.5" height="14.8" fill="#dd0000"/>
<rect x="1329" y="385.2" width="24.5" height="14.8" fill="#b00000"/>
<rect x="1329" y="385.2" width="24.5" height="289.8" fill="none" stroke="#000" stroke-width="1"/>
<path d="M1321.5 675H1329M1321.5 646H1329M1321.5 617H1329M1321.5 588.1H1329M1321.5 559.1H1329M1321.5 530.1H1329M1321.5 501.1H1329M1321.5 472.1H1329M1321.5 443.2H1329M1321.5 414.2H1329M1321.5 385.2H1329" stroke="#000" stroke-width="1" fill="none"/>
<g id="cube">
<ellipse cx="1380.500" cy="262.500" rx="37.500" ry="16.500" fill="none" stroke="#c6c6c6" stroke-width="8.500" transform="rotate(4 1380 262)"/>
<polygon points="1352.300,229.200 1369.200,217.700 1403.800,220.800 1393.800,233.800" fill="#5e5e5e" stroke="#111" stroke-width="1"/>
<polygon points="1352.300,229.200 1393.800,233.800 1392.300,273.100 1354.600,264.600" fill="#6e6e6e" stroke="#111" stroke-width="1"/>
<polygon points="1393.800,233.800 1403.800,220.800 1402.300,254.600 1392.300,273.100" fill="#585858" stroke="#111" stroke-width="1"/>
<path d="M1369.200 217.700L1370.500 250L1354.600 264.600M1370.500 250L1402.300 254.600" stroke="#808080" stroke-width=".5" fill="none"/>
<text x="1367.500" y="256.500" font-family="Liberation Sans, sans-serif" font-size="8.500" font-weight="bold" fill="#fff">+Y</text>
<text x="1378.500" y="227.500" font-family="Liberation Sans, sans-serif" font-size="6" font-weight="bold" fill="#fff" transform="rotate(-80 1381 225.500)">Z</text>
<text x="1356" y="288" font-family="Liberation Sans, sans-serif" font-size="13" font-weight="bold" font-style="italic" fill="#333" transform="rotate(-14 1362 284)">Y</text>
<path d="M1339 252.500l12-3.500M1343 248l3.500 6M1416 264l10 1.500" stroke="#333" stroke-width="1.300" fill="none"/>
</g>
</svg>
<div class="abs leg" style="left:1260px;top:675px;width:54.500px">0,00</div>
<div class="abs leg" style="left:1260px;top:632.5px;width:54.500px">1,0</div>
<div class="abs leg" style="left:1260px;top:603.5px;width:54.500px">2,0</div>
<div class="abs leg" style="left:1260px;top:574.6px;width:54.500px">3,0</div>
<div class="abs leg" style="left:1260px;top:545.6px;width:54.500px">4,0</div>
<div class="abs leg" style="left:1260px;top:516.6px;width:54.500px">5,0</div>
<div class="abs leg" style="left:1260px;top:487.6px;width:54.500px">6,0</div>
<div class="abs leg" style="left:1260px;top:458.6px;width:54.500px">7,0</div>
<div class="abs leg" style="left:1260px;top:429.7px;width:54.500px">8,0</div>
<div class="abs leg" style="left:1260px;top:400.7px;width:54.500px">9,0</div>
<div class="abs leg" style="left:1260px;top:371.7px;width:54.500px">10,00</div>
<div class="abs leg" style="left:1290px;top:323.500px;width:64px;font-size:14.500px;line-height:17px">uy<br>[mm]</div>
<div class="abs info" style="left:9.500px;top:194px"><span style="letter-spacing:0.44px">MNA</span><br><span style="letter-spacing:-0.03px">MNA Plates</span><br><span style="letter-spacing:-0.70px">LBA</span></div>
<div class="abs info" style="left:107.500px;top:194px"><span style="letter-spacing:-0.35px">100,0 %</span><br><span style="letter-spacing:-0.12px">0,0 &lt; 5,0 %</span><br><span style="letter-spacing:-0.29px">10,14</span></div>
<svg class="abs" style="left:80px;top:192px" width="20" height="36"><path d="M2 10.300l4.500 5L15.800 2.800M2 26.300l4.500 5L15.800 18.800" stroke="#78c47c" stroke-width="2.900" fill="none"/></svg>

<div id="split" class="abs"></div>
<div id="rtab" class="abs"></div>
<div class="abs" style="letter-spacing:0.68px;left:1464px;top:166px;color:#fff;line-height:14px">MNA</div>
<div class="abs" style="left:1505px;top:162px;width:47px;height:23.500px;background:#f0f0f0"></div>
<div class="abs" style="letter-spacing:-0.33px;left:1518px;top:166px;color:#f07020;line-height:14px">LBA</div>
<div class="abs" style="letter-spacing:0.12px;left:1565px;top:166px;color:#fff;line-height:14px">GMNIA</div>
<div class="abs red" style="left:1499px;top:155.700px;width:60px;height:34.300px;border-width:4.300px;border-radius:8.500px"></div>
<table id="grid" class="abs" style="left:1467px;top:204px;width:169px;table-layout:fixed"><colgroup><col style="width:75px"><col style="width:46px"><col style="width:47px"></colgroup>
<tr class="h"><td><span style="letter-spacing:-0.75px">Loads</span></td><td><span style="letter-spacing:-0.18px">Shape</span></td><td><span style="letter-spacing:-0.23px">Factor</span></td></tr>
<tr class="sp"><td></td><td></td><td></td></tr>
<tr class="sel"><td>All ULS Fund</td><td>1</td><td>10.38</td></tr>
<tr><td></td><td>2</td><td>27.79</td></tr>
<tr><td></td><td>3</td><td>32.51</td></tr>
<tr><td></td><td>4</td><td>49.62</td></tr>
<tr><td></td><td>5</td><td>55.23</td></tr>
<tr><td></td><td>6</td><td>58.05</td></tr>
<tr><td>All ULS Fund</td><td>1</td><td>10.38</td></tr>
<tr><td></td><td>2</td><td>27.85</td></tr>
<tr><td></td><td>3</td><td>32.50</td></tr>
<tr><td></td><td>4</td><td>49.63</td></tr>
<tr><td></td><td>5</td><td>55.90</td></tr>
<tr><td></td><td>6</td><td>58.56</td></tr>
<tr><td>All ULS Fund</td><td>1</td><td>58.69</td></tr>
<tr><td></td><td>2</td><td>189.39</td></tr>
<tr><td></td><td>3</td><td>287.08</td></tr>
<tr><td></td><td>4</td><td>309.59</td></tr>
<tr><td></td><td>5</td><td>322.17</td></tr>
<tr><td></td><td>6</td><td>332.42</td></tr>
<tr><td>All ULS Fund</td><td>1</td><td>10.38</td></tr>
<tr><td></td><td>2</td><td>25.23</td></tr>
<tr><td></td><td>3</td><td>32.30</td></tr>
<tr><td></td><td>4</td><td>49.11</td></tr>
<tr><td></td><td>5</td><td>56.77</td></tr>
<tr><td></td><td>6</td><td>59.17</td></tr>
<tr><td>All ULS Fund</td><td>1</td><td>10.38</td></tr>
<tr class="last"><td></td><td>2</td><td>27.85</td></tr>
</table>
<div class="abs" style="left:1637px;top:204px;width:16px;height:786px;background:#f0f0f0;border:1px solid #b4b4b4"></div>
<div class="abs" style="left:1637px;top:204px;width:16px;height:16px;background:#fff;border:1px solid #b4b4b4"></div>
<div class="abs" style="left:1637px;top:220px;width:16px;height:201px;background:#fff;border:1px solid #b4b4b4"></div>
<div class="abs" style="left:1637px;top:974px;width:16px;height:16px;background:#fff;border:1px solid #b4b4b4"></div>
<div class="abs arr" style="left:1641.500px;top:209px;transform:rotate(180deg);border-top-width:4.500px"></div>
<div class="abs arr" style="left:1641.500px;top:979.500px;border-top-width:4.500px"></div>
<div class="abs red" style="left:1462.200px;top:232.200px;width:181px;height:40.700px;border-width:4.600px;border-radius:9px"></div>

<div id="botline" class="abs"></div>
<div id="ftr" class="abs"><div class="tex abs"></div></div>
</body>
</html>
